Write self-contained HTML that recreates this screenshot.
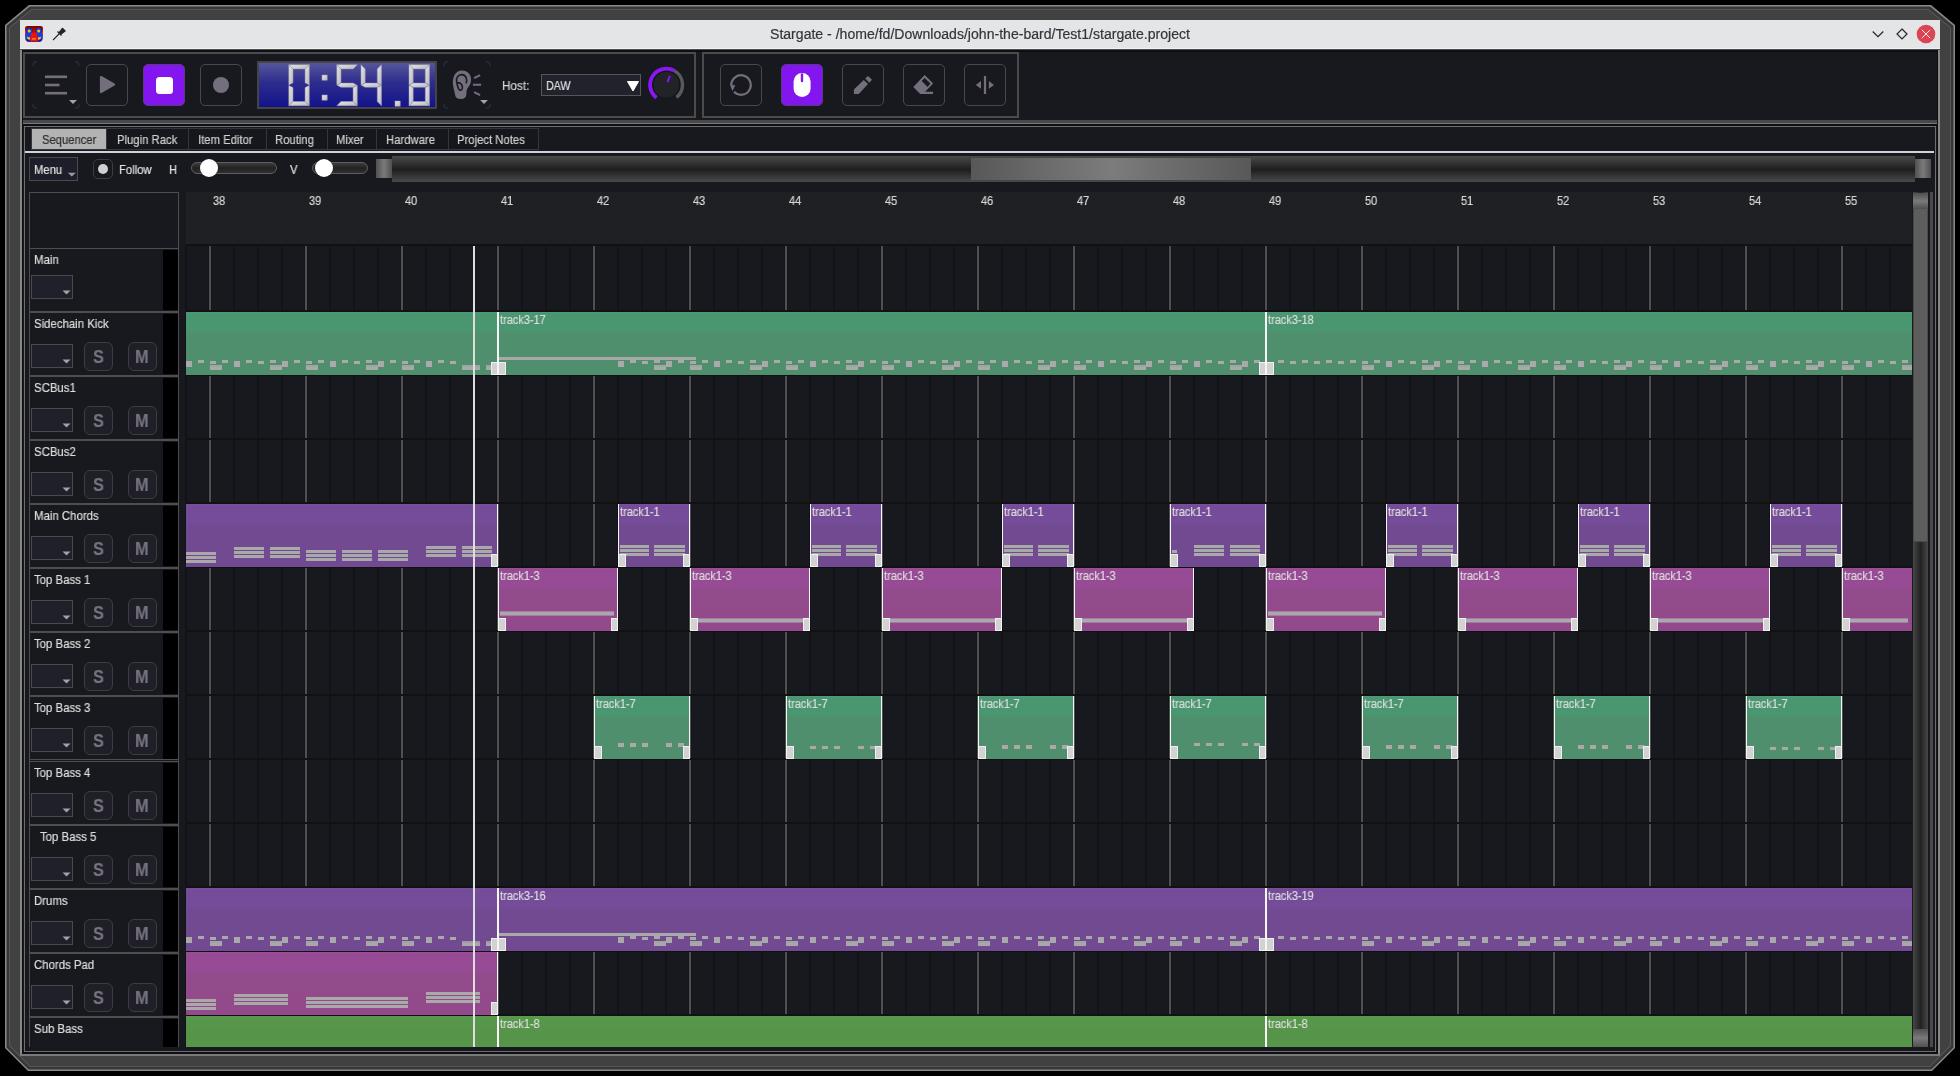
<!DOCTYPE html><html><head><meta charset="utf-8"><style>
*{margin:0;padding:0;box-sizing:border-box}
html,body{width:1960px;height:1076px;overflow:hidden;background:#000}
body{position:relative;font-family:"Liberation Sans",sans-serif}
div,span,svg{position:absolute}
span{white-space:nowrap;line-height:1;display:block;transform-origin:left top;will-change:transform;-webkit-text-stroke:0.2px currentColor}
</style></head><body><svg width="1960" height="1076" style="left:0;top:0"><polygon points="29,5 1931,5 1955,25 1955,1048 1932,1071 28,1071 5,1048 5,25" fill="#8a8a8a"/><polygon points="29.8,6.5 1930.2,6.5 1953.5,25.8 1953.5,1047.5 1931.5,1069.5 28.5,1069.5 6.5,1047.5 6.5,25.8" fill="#383838"/><polygon points="31.5,9 1928.5,9 1951,27.5 1951,1046 1930,1067 30,1067 9,1046 9,27.5" fill="#575757"/><polygon points="32,10 1928,10 1950,28 1950,1045.5 1929.5,1066 30.5,1066 10,1045.5 10,28" fill="#414141"/></svg>
<div style="left:20px;top:20px;width:1920px;height:1036px;background:#7a7a7a"></div>
<div style="left:20px;top:20px;width:2px;height:1034px;background:#888"></div>
<div style="left:1938px;top:20px;width:2px;height:1034px;background:#888"></div>
<div style="left:22px;top:49px;width:1916px;height:1005px;background:#0e0f14"></div>
<div style="left:23px;top:52px;width:1914px;height:999px;background:#18191e"></div>
<div style="left:20px;top:20px;width:1920px;height:29px;background:#e4e5e7"></div>
<div style="left:20px;top:48px;width:1920px;height:1px;background:#f2f2f3"></div>
<div style="left:20px;top:49px;width:1920px;height:1px;background:#4e4e4e"></div>
<svg width="26" height="24" style="left:22px;top:22px" viewBox="0 0 26 24">
<defs><linearGradient id="lg1" x1="0" y1="0" x2="0" y2="1"><stop offset="0" stop-color="#780000"/><stop offset="0.55" stop-color="#f41010"/><stop offset="1" stop-color="#f01010"/></linearGradient></defs>
<path d="M3,6 Q3,4 5.5,4 L18.5,4 Q21,4 21,6 L20.6,16.5 Q20.3,19.8 17,19.8 L7,19.8 Q3.7,19.8 3.4,16.5 Z" fill="url(#lg1)"/>
<circle cx="7.3" cy="8.9" r="3"/><circle cx="16.7" cy="8.9" r="3"/>
<path d="M3.1,11.8 L9.6,10.5 L9,18.6 L4,18.6 Q3.4,17 3.3,15 Z" fill="#1040e8"/>
<path d="M20.9,11.8 L14.4,10.5 L15,18.6 L20,18.6 Q20.6,17 20.7,15 Z" fill="#1040e8"/>
<circle cx="7.3" cy="8.9" r="3" fill="#1040e8"/><circle cx="16.7" cy="8.9" r="3" fill="#1040e8"/>
<path d="M4.2,17.2 L19.8,17.2 Q19.6,19.8 17,19.8 L7,19.8 Q4.4,19.8 4.2,17.2Z" fill="#1a1ca0"/>
<path d="M9.3,11 L14.7,11 L16,19.2 L8,19.2 Z" fill="#f21010"/>
<circle cx="7.2" cy="8.9" r="1.5" fill="#ffc000"/><circle cx="16.7" cy="8.9" r="1.5" fill="#ffc000"/>
<path d="M4.8,14.6 Q6.2,15.5 8,15 L8,17.8 Q5.2,18 4.8,14.6Z" fill="#ffc000"/>
<path d="M19.2,14.6 Q17.8,15.5 16,15 L16,17.8 Q18.8,18 19.2,14.6Z" fill="#ffc000"/>
<rect x="9.8" y="16" width="4.2" height="1.7" fill="#f08000"/>
</svg>
<svg width="14" height="14" style="left:52px;top:27px" viewBox="0 0 14 14">
<path d="M7.5,5.5 L10.5,1.5 L13,4 L9,7 Z" fill="#232629" stroke="#232629" stroke-width="1.5" stroke-linejoin="round"/>
<path d="M5.5,4.5 L9.5,8.5" stroke="#232629" stroke-width="1.3"/>
<path d="M7.5,6.5 L1,13" stroke="#232629" stroke-width="1.1"/>
</svg>
<span style="left:770px;top:27px;font-size:14px;color:#31363b;transform:scaleX(1.005);transform-origin:left top;">Stargate - /home/fd/Downloads/john-the-bard/Test1/stargate.project</span>
<svg width="80" height="24" style="left:1866px;top:22px" viewBox="0 0 80 24">
<path d="M6.7,9.5 L12,14.7 L17.3,9.5" fill="none" stroke="#232629" stroke-width="1.2"/>
<path d="M36,7 L41,12 L36,17 L31,12 Z" fill="none" stroke="#232629" stroke-width="1.2"/>
<circle cx="60" cy="12" r="9.3" fill="#da4453"/>
<path d="M55.8,7.8 L64.2,16.2 M64.2,7.8 L55.8,16.2" stroke="#fcfcfc" stroke-width="0.9"/>
</svg>
<div style="left:23px;top:52px;width:673px;height:66px;background:#18191e;border:2px solid #4b4b4b"></div>
<div style="left:702px;top:52px;width:317px;height:66px;background:#18191e;border:2px solid #4b4b4b"></div>
<svg width="48" height="48" style="left:32px;top:61px" viewBox="0 0 48 48"><path d="M0.8,5 Q0.8,0.8 5,0.8 M43,0.8 Q47.2,0.8 47.2,5 M47.2,43 Q47.2,47.2 43,47.2 M5,47.2 Q0.8,47.2 0.8,43" fill="none" stroke="#2a2b36" stroke-width="1.4"/></svg>
<svg width="48" height="48" style="left:32px;top:61px" viewBox="0 0 48 48">
<rect x="13" y="14.5" width="22" height="2.6" fill="#736f7d"/>
<rect x="13" y="22.7" width="14.5" height="2.6" fill="#736f7d"/>
<rect x="13" y="30.9" width="22" height="2.6" fill="#736f7d"/>
<path d="M37,39 L45,39 L41,43 Z" fill="#a2a2a8"/>
</svg>
<div style="left:86px;top:64px;width:42px;height:42px;background:#18191e;border:1px solid #47474c;border-radius:5px"></div>
<svg width="42" height="42" style="left:86px;top:64px" viewBox="0 0 42 42">
<path d="M15,13 L28,20.5 L15,28 Z" fill="#736f7d" stroke="#736f7d" stroke-width="2.2" stroke-linejoin="round"/>
</svg>
<div style="left:143px;top:64px;width:42px;height:42px;background:#8316ee;border:1px solid #5a3a80;border-radius:5px"></div>
<div style="left:155.5px;top:76.5px;width:17px;height:17px;background:#fff;border-radius:3.5px"></div>
<div style="left:200px;top:64px;width:42px;height:42px;background:#18191e;border:1px solid #47474c;border-radius:5px"></div>
<div style="left:212.6px;top:76.6px;width:16.8px;height:16.8px;background:#736f7d;border-radius:50%"></div>
<div style="left:257px;top:61px;width:180px;height:48px;background:#444"></div>
<div style="left:259px;top:63px;width:176px;height:44px;background:linear-gradient(#56559c,#2d2c8c 45%,#14138c)"></div>
<svg width="180" height="48" style="left:257px;top:61px" viewBox="0 0 180 48"><defs><linearGradient id="sg" x1="0" y1="0" x2="1" y2="1"><stop offset="0" stop-color="#e8e8e8"/><stop offset="1" stop-color="#b8b8b8"/></linearGradient></defs><g fill="url(#sg)" stroke="#9c9cb0" stroke-width="0.5" stroke-linejoin="miter"><polygon points="31.80,3.70 52.30,3.70 48.10,7.90 36.00,7.90"/><polygon points="52.30,3.70 52.30,23.95 48.10,21.85 48.10,7.90"/><polygon points="52.30,24.45 52.30,44.70 48.10,40.50 48.10,26.55"/><polygon points="36.00,40.50 48.10,40.50 52.30,44.70 31.80,44.70"/><polygon points="31.80,24.45 36.00,26.55 36.00,40.50 31.80,44.70"/><polygon points="31.80,3.70 36.00,7.90 36.00,21.85 31.80,23.95"/><rect x="65" y="14" width="5.2" height="5.2"/><rect x="65" y="34" width="5.2" height="5.2"/><polygon points="79.80,3.70 100.30,3.70 96.10,7.90 84.00,7.90"/><polygon points="79.80,3.70 84.00,7.90 84.00,21.85 79.80,23.95"/><polygon points="80.05,24.20 84.00,22.10 96.10,22.10 100.05,24.20 96.10,26.30 84.00,26.30"/><polygon points="100.30,24.45 100.30,44.70 96.10,40.50 96.10,26.55"/><polygon points="84.00,40.50 96.10,40.50 100.30,44.70 79.80,44.70"/><polygon points="104.00,3.70 108.20,7.90 108.20,21.85 104.00,23.95"/><polygon points="104.25,24.20 108.20,22.10 120.30,22.10 124.25,24.20 120.30,26.30 108.20,26.30"/><polygon points="124.50,3.70 124.50,23.95 120.30,21.85 120.30,7.90"/><polygon points="124.50,24.45 124.50,44.70 120.30,40.50 120.30,26.55"/><rect x="138" y="40" width="5.2" height="5.2"/><polygon points="152.00,3.70 172.50,3.70 168.30,7.90 156.20,7.90"/><polygon points="172.50,3.70 172.50,23.95 168.30,21.85 168.30,7.90"/><polygon points="172.50,24.45 172.50,44.70 168.30,40.50 168.30,26.55"/><polygon points="156.20,40.50 168.30,40.50 172.50,44.70 152.00,44.70"/><polygon points="152.00,24.45 156.20,26.55 156.20,40.50 152.00,44.70"/><polygon points="152.00,3.70 156.20,7.90 156.20,21.85 152.00,23.95"/><polygon points="152.25,24.20 156.20,22.10 168.30,22.10 172.25,24.20 168.30,26.30 156.20,26.30"/></g></svg>
<svg width="48" height="48" style="left:443px;top:61px" viewBox="0 0 48 48"><path d="M0.8,5 Q0.8,0.8 5,0.8 M43,0.8 Q47.2,0.8 47.2,5 M47.2,43 Q47.2,47.2 43,47.2 M5,47.2 Q0.8,47.2 0.8,43" fill="none" stroke="#2a2b36" stroke-width="1.4"/></svg>
<svg width="56" height="54" style="left:440px;top:58px" viewBox="0 0 56 54">
<path d="M21.9,12.5 C27.5,12.5 31.3,16.5 31.1,22.1 C31,26 29,28.5 27.1,31.1 C26.3,33 26.5,35 26.3,37.1 C26,40 23.5,41.3 20.6,41.1 C17.5,41 15.3,39.5 15,36.5 C14.6,33 13.2,30 12.9,26 C12.5,18 16,12.5 21.9,12.5 Z" fill="#736f7d"/>
<path d="M26.1,25.6 C27.3,22 26.5,16.8 21.9,16.6 C17.5,16.5 16.2,20.5 16.6,23 C17,26 17.5,30 19.5,32 C21.5,33 22.8,31 22.3,28.5 C21.8,26 19.5,24.5 17.1,24.6" fill="none" stroke="#1a1b20" stroke-width="1.6"/>
<path d="M34.1,20.1 L40.1,17.1 M32.9,26.8 L41.1,26.8 M34.1,34.1 L40.1,37.1" stroke="#736f7d" stroke-width="2.1"/>
<path d="M40.1,42 L47.9,42 L44,45.9 Z" fill="#a2a2a8"/>
</svg>
<span style="left:502px;top:80px;font-size:12.6px;color:#d4d4d4;transform:scaleX(0.93)">Host:</span>
<div style="left:541px;top:74px;width:100px;height:22px;background:#22222c;border:1px solid #55555a"></div>
<span style="left:546px;top:80px;font-size:12.6px;color:#e0e0e0;transform:scaleX(0.85)">DAW</span>
<svg width="14" height="12" style="left:626px;top:80px" viewBox="0 0 14 12"><path d="M1.5,1.5 L12.5,1.5 L7,11 Z" fill="#fff" stroke="#fff" stroke-width="1" stroke-linejoin="round"/></svg>
<svg width="52" height="50" style="left:640px;top:60px" viewBox="0 0 52 50">
<circle cx="26.3" cy="24.8" r="13.6" fill="#222329" stroke="#121318" stroke-width="1"/>
<path d="M34.15,10.63 A16.2,16.2 0 0 1 36.49,37.39" fill="none" stroke="#5a5a5c" stroke-width="3.4"/>
<path d="M16.55,37.74 A16.2,16.2 0 0 1 34.15,10.63" fill="none" stroke="#8a16f5" stroke-width="3.8"/>
<path d="M29.90,15.90 L27.42,22.02" stroke="#8a16f5" stroke-width="2"/>
</svg>
<div style="left:720px;top:64px;width:42px;height:42px;background:#18191e;border:1px solid #47474c;border-radius:5px"></div>
<div style="left:781px;top:64px;width:42px;height:42px;background:#8316ee;border:1px solid #5a3a80;border-radius:5px"></div>
<div style="left:842px;top:64px;width:42px;height:42px;background:#18191e;border:1px solid #47474c;border-radius:5px"></div>
<div style="left:903px;top:64px;width:42px;height:42px;background:#18191e;border:1px solid #47474c;border-radius:5px"></div>
<div style="left:964px;top:64px;width:42px;height:42px;background:#18191e;border:1px solid #47474c;border-radius:5px"></div>
<svg width="42" height="42" style="left:720px;top:64px" viewBox="0 0 42 42">
<path d="M14.0,27.8 A9.75,9.75 0 1 0 11.25,21" fill="none" stroke="#736f7d" stroke-width="2.2"/>
<path d="M10.0,21 L15.3,21.2 L12.5,27 Z" fill="#736f7d"/>
</svg>
<svg width="42" height="42" style="left:781px;top:64px" viewBox="0 0 42 42">
<rect x="12.6" y="9" width="17" height="24" rx="8.5" ry="8.5" fill="#fff"/>
<path d="M21,10.5 L21,17" stroke="#8316ee" stroke-width="2.4" stroke-linecap="round"/>
</svg>
<svg width="42" height="42" style="left:842px;top:64px" viewBox="0 0 42 42">
<path d="M11.9,25.4 L21.7,16 L26,20.1 L16.8,30.05 L11.9,30.05 Z" fill="#736f7d"/>
<path d="M23.2,14.4 L26,11.9 L30,15.8 L27.3,18.7 Z" fill="#736f7d"/>
</svg>
<svg width="42" height="42" style="left:903px;top:64px" viewBox="0 0 42 42">
<path fill-rule="evenodd" d="M21.7,11.1 L30.2,19.6 L22.1,27.7 L30.05,27.7 L30.05,30.05 L17.2,30.05 L10.3,23 Z M21.7,13.9 L27.4,19.6 L24.6,22.9 L18.7,17 Z" fill="#736f7d"/>
</svg>
<svg width="42" height="42" style="left:964px;top:64px" viewBox="0 0 42 42">
<rect x="19.9" y="12" width="2.2" height="18" fill="#736f7d"/>
<path d="M11.8,21 L17,17.1 L17,24.8 Z M30,21 L24.9,17.1 L24.9,24.8 Z" fill="#736f7d"/>
</svg>
<div style="left:23px;top:120px;width:1914px;height:2.8px;background:#484848"></div>
<div style="left:23px;top:123px;width:1914px;height:1px;background:#7a7a7a"></div>
<div style="left:23px;top:124px;width:1914px;height:2px;background:#0e0f14"></div>
<div style="left:24px;top:126px;width:1912px;height:926px;background:#18191e;border:1px solid #6e6e6e"></div>
<div style="left:31px;top:128px;width:508px;height:22px;background:#16171c;border:1px solid #35353b"></div>
<div style="left:31.7px;top:128.7px;width:74.6px;height:20.3px;background:#b3b3b3"></div>
<span style="left:41.5px;top:134.35px;font-size:12.35px;color:#2e2e2e;transform:scaleX(0.91);">Sequencer</span>
<div style="left:106.3px;top:128.7px;width:1px;height:20.3px;background:#35353b"></div>
<span style="left:117.0px;top:134.35px;font-size:12.35px;color:#d2d2d2;transform:scaleX(0.915);">Plugin Rack</span>
<div style="left:188.2px;top:128.7px;width:1px;height:20.3px;background:#35353b"></div>
<span style="left:198.2px;top:134.35px;font-size:12.35px;color:#d2d2d2;transform:scaleX(0.915);">Item Editor</span>
<div style="left:265.7px;top:128.7px;width:1px;height:20.3px;background:#35353b"></div>
<span style="left:275.2px;top:134.35px;font-size:12.35px;color:#d2d2d2;transform:scaleX(0.915);">Routing</span>
<div style="left:326.6px;top:128.7px;width:1px;height:20.3px;background:#35353b"></div>
<span style="left:336.2px;top:134.35px;font-size:12.35px;color:#d2d2d2;transform:scaleX(0.915);">Mixer</span>
<div style="left:376.3px;top:128.7px;width:1px;height:20.3px;background:#35353b"></div>
<span style="left:386.2px;top:134.35px;font-size:12.35px;color:#d2d2d2;transform:scaleX(0.915);">Hardware</span>
<div style="left:447.5px;top:128.7px;width:1px;height:20.3px;background:#35353b"></div>
<span style="left:457.2px;top:134.35px;font-size:12.35px;color:#d2d2d2;transform:scaleX(0.915);">Project Notes</span>
<div style="left:25px;top:151px;width:1909px;height:2px;background:#cdd3d9"></div>
<div style="left:29px;top:157px;width:49px;height:24px;background:#1e1e2a;border:1px solid #4a4a4a"></div>
<span style="left:33.6px;top:164.35px;font-size:12.35px;color:#e0e0e0;transform:scaleX(0.91);">Menu</span>
<svg width="10" height="6" style="left:66.5px;top:171.5px" viewBox="0 0 10 6"><path d="M0.8,0.8 L8.8,0.8 L4.8,4.6 Z" fill="#9a9aa0"/></svg>
<div style="left:93px;top:159px;width:20px;height:20px;border:1px solid #3d3d45;border-radius:5px"></div>
<div style="left:97.5px;top:163.7px;width:10.6px;height:10.6px;background:#d0d0d0;border-radius:50%"></div>
<span style="left:119px;top:164.35px;font-size:12.35px;color:#e0e0e0;transform:scaleX(0.91);">Follow</span>
<span style="left:169px;top:164.35px;font-size:12.35px;color:#e0e0e0;transform:scaleX(0.91);">H</span>
<span style="left:290.3px;top:164.35px;font-size:12.35px;color:#e0e0e0;transform:scaleX(0.91);">V</span>
<div style="left:191px;top:162px;width:86px;height:12px;background:linear-gradient(#3c3c3c,#222 50%,#303030);border:1px solid #5e5e5e;border-radius:6px"></div>
<div style="left:199.9px;top:158.9px;width:18px;height:18px;background:#fff;border-radius:50%"></div>
<div style="left:312px;top:162px;width:56px;height:12px;background:linear-gradient(#3c3c3c,#222 50%,#303030);border:1px solid #5e5e5e;border-radius:6px"></div>
<div style="left:315.1px;top:159px;width:18px;height:18px;background:#fff;border-radius:50%"></div>
<div style="left:391.8px;top:156.2px;width:1523.2px;height:25.4px;background:linear-gradient(#4a4a4a,#1e1e1e 52%,#4a4a4a)"></div>
<div style="left:376.1px;top:159.1px;width:15.7px;height:19.4px;background:linear-gradient(90deg,#505050,#7a7a7a 50%,#505050)"></div>
<div style="left:1915px;top:159.1px;width:16px;height:19.4px;background:linear-gradient(90deg,#505050,#7a7a7a 50%,#505050)"></div>
<div style="left:970.7px;top:157.9px;width:280.6px;height:22.1px;background:linear-gradient(90deg,#585858,#7c7c7c 50%,#585858)"></div>
<div style="left:29px;top:192px;width:150px;height:57px;border:1px solid #4e4e4e"></div>
<div style="left:29px;top:248px;width:1px;height:64px;background:#4e4e4e"></div>
<div style="left:178px;top:248px;width:1px;height:64px;background:#4e4e4e"></div>
<div style="left:163px;top:249.5px;width:14.5px;height:60.5px;background:#000"></div>
<span style="left:34.0px;top:254.37px;font-size:12.2px;color:#dedede;transform:scaleX(0.935);">Main</span>
<div style="left:31.2px;top:275px;width:41.8px;height:24px;background:#20202a;border:1px solid #4a4a4e"></div>
<svg width="10" height="6" style="left:61.5px;top:289.6px" viewBox="0 0 10 6"><path d="M0.5,0.5 L8.5,0.5 L4.5,4.5 Z" fill="#a2a2a8"/></svg>
<div style="left:29px;top:312px;width:1px;height:64px;background:#4e4e4e"></div>
<div style="left:178px;top:312px;width:1px;height:64px;background:#4e4e4e"></div>
<div style="left:163px;top:313.5px;width:14.5px;height:60.5px;background:#000"></div>
<span style="left:34.0px;top:318.37px;font-size:12.2px;color:#dedede;transform:scaleX(0.935);">Sidechain Kick</span>
<div style="left:31.2px;top:344px;width:41.8px;height:24px;background:#20202a;border:1px solid #4a4a4e"></div>
<svg width="10" height="6" style="left:61.5px;top:358.6px" viewBox="0 0 10 6"><path d="M0.5,0.5 L8.5,0.5 L4.5,4.5 Z" fill="#a2a2a8"/></svg>
<div style="left:84.3px;top:342.2px;width:28.6px;height:28.6px;background:#1f1f27;border:1px solid #3c3c44;border-radius:6px"></div>
<span style="left:93.2px;top:349.3px;font-size:17.6px;color:#77727f;transform:scaleX(0.93);font-weight:bold;">S</span>
<div style="left:128.2px;top:342.2px;width:28.6px;height:28.6px;background:#1f1f27;border:1px solid #3c3c44;border-radius:6px"></div>
<span style="left:134.8px;top:349.3px;font-size:17.6px;color:#77727f;transform:scaleX(0.93);font-weight:bold;">M</span>
<div style="left:29px;top:376px;width:1px;height:64px;background:#4e4e4e"></div>
<div style="left:178px;top:376px;width:1px;height:64px;background:#4e4e4e"></div>
<div style="left:163px;top:377.5px;width:14.5px;height:60.5px;background:#000"></div>
<span style="left:34.0px;top:382.37px;font-size:12.2px;color:#dedede;transform:scaleX(0.935);">SCBus1</span>
<div style="left:31.2px;top:408px;width:41.8px;height:24px;background:#20202a;border:1px solid #4a4a4e"></div>
<svg width="10" height="6" style="left:61.5px;top:422.6px" viewBox="0 0 10 6"><path d="M0.5,0.5 L8.5,0.5 L4.5,4.5 Z" fill="#a2a2a8"/></svg>
<div style="left:84.3px;top:406.2px;width:28.6px;height:28.6px;background:#1f1f27;border:1px solid #3c3c44;border-radius:6px"></div>
<span style="left:93.2px;top:413.3px;font-size:17.6px;color:#77727f;transform:scaleX(0.93);font-weight:bold;">S</span>
<div style="left:128.2px;top:406.2px;width:28.6px;height:28.6px;background:#1f1f27;border:1px solid #3c3c44;border-radius:6px"></div>
<span style="left:134.8px;top:413.3px;font-size:17.6px;color:#77727f;transform:scaleX(0.93);font-weight:bold;">M</span>
<div style="left:29px;top:440px;width:1px;height:64px;background:#4e4e4e"></div>
<div style="left:178px;top:440px;width:1px;height:64px;background:#4e4e4e"></div>
<div style="left:163px;top:441.5px;width:14.5px;height:60.5px;background:#000"></div>
<span style="left:34.0px;top:446.37px;font-size:12.2px;color:#dedede;transform:scaleX(0.935);">SCBus2</span>
<div style="left:31.2px;top:472px;width:41.8px;height:24px;background:#20202a;border:1px solid #4a4a4e"></div>
<svg width="10" height="6" style="left:61.5px;top:486.6px" viewBox="0 0 10 6"><path d="M0.5,0.5 L8.5,0.5 L4.5,4.5 Z" fill="#a2a2a8"/></svg>
<div style="left:84.3px;top:470.2px;width:28.6px;height:28.6px;background:#1f1f27;border:1px solid #3c3c44;border-radius:6px"></div>
<span style="left:93.2px;top:477.3px;font-size:17.6px;color:#77727f;transform:scaleX(0.93);font-weight:bold;">S</span>
<div style="left:128.2px;top:470.2px;width:28.6px;height:28.6px;background:#1f1f27;border:1px solid #3c3c44;border-radius:6px"></div>
<span style="left:134.8px;top:477.3px;font-size:17.6px;color:#77727f;transform:scaleX(0.93);font-weight:bold;">M</span>
<div style="left:29px;top:504px;width:1px;height:64px;background:#4e4e4e"></div>
<div style="left:178px;top:504px;width:1px;height:64px;background:#4e4e4e"></div>
<div style="left:163px;top:505.5px;width:14.5px;height:60.5px;background:#000"></div>
<span style="left:34.0px;top:510.37px;font-size:12.2px;color:#dedede;transform:scaleX(0.935);">Main Chords</span>
<div style="left:31.2px;top:536px;width:41.8px;height:24px;background:#20202a;border:1px solid #4a4a4e"></div>
<svg width="10" height="6" style="left:61.5px;top:550.6px" viewBox="0 0 10 6"><path d="M0.5,0.5 L8.5,0.5 L4.5,4.5 Z" fill="#a2a2a8"/></svg>
<div style="left:84.3px;top:534.2px;width:28.6px;height:28.6px;background:#1f1f27;border:1px solid #3c3c44;border-radius:6px"></div>
<span style="left:93.2px;top:541.3px;font-size:17.6px;color:#77727f;transform:scaleX(0.93);font-weight:bold;">S</span>
<div style="left:128.2px;top:534.2px;width:28.6px;height:28.6px;background:#1f1f27;border:1px solid #3c3c44;border-radius:6px"></div>
<span style="left:134.8px;top:541.3px;font-size:17.6px;color:#77727f;transform:scaleX(0.93);font-weight:bold;">M</span>
<div style="left:29px;top:568px;width:1px;height:64px;background:#4e4e4e"></div>
<div style="left:178px;top:568px;width:1px;height:64px;background:#4e4e4e"></div>
<div style="left:163px;top:569.5px;width:14.5px;height:60.5px;background:#000"></div>
<span style="left:34.0px;top:574.37px;font-size:12.2px;color:#dedede;transform:scaleX(0.935);">Top Bass 1</span>
<div style="left:31.2px;top:600px;width:41.8px;height:24px;background:#20202a;border:1px solid #4a4a4e"></div>
<svg width="10" height="6" style="left:61.5px;top:614.6px" viewBox="0 0 10 6"><path d="M0.5,0.5 L8.5,0.5 L4.5,4.5 Z" fill="#a2a2a8"/></svg>
<div style="left:84.3px;top:598.2px;width:28.6px;height:28.6px;background:#1f1f27;border:1px solid #3c3c44;border-radius:6px"></div>
<span style="left:93.2px;top:605.3px;font-size:17.6px;color:#77727f;transform:scaleX(0.93);font-weight:bold;">S</span>
<div style="left:128.2px;top:598.2px;width:28.6px;height:28.6px;background:#1f1f27;border:1px solid #3c3c44;border-radius:6px"></div>
<span style="left:134.8px;top:605.3px;font-size:17.6px;color:#77727f;transform:scaleX(0.93);font-weight:bold;">M</span>
<div style="left:29px;top:632px;width:1px;height:64px;background:#4e4e4e"></div>
<div style="left:178px;top:632px;width:1px;height:64px;background:#4e4e4e"></div>
<div style="left:163px;top:633.5px;width:14.5px;height:60.5px;background:#000"></div>
<span style="left:34.0px;top:638.37px;font-size:12.2px;color:#dedede;transform:scaleX(0.935);">Top Bass 2</span>
<div style="left:31.2px;top:664px;width:41.8px;height:24px;background:#20202a;border:1px solid #4a4a4e"></div>
<svg width="10" height="6" style="left:61.5px;top:678.6px" viewBox="0 0 10 6"><path d="M0.5,0.5 L8.5,0.5 L4.5,4.5 Z" fill="#a2a2a8"/></svg>
<div style="left:84.3px;top:662.2px;width:28.6px;height:28.6px;background:#1f1f27;border:1px solid #3c3c44;border-radius:6px"></div>
<span style="left:93.2px;top:669.3px;font-size:17.6px;color:#77727f;transform:scaleX(0.93);font-weight:bold;">S</span>
<div style="left:128.2px;top:662.2px;width:28.6px;height:28.6px;background:#1f1f27;border:1px solid #3c3c44;border-radius:6px"></div>
<span style="left:134.8px;top:669.3px;font-size:17.6px;color:#77727f;transform:scaleX(0.93);font-weight:bold;">M</span>
<div style="left:29px;top:696px;width:1px;height:65px;background:#4e4e4e"></div>
<div style="left:178px;top:696px;width:1px;height:65px;background:#4e4e4e"></div>
<div style="left:163px;top:697.5px;width:14.5px;height:61.5px;background:#000"></div>
<span style="left:34.0px;top:702.37px;font-size:12.2px;color:#dedede;transform:scaleX(0.935);">Top Bass 3</span>
<div style="left:31.2px;top:728px;width:41.8px;height:24px;background:#20202a;border:1px solid #4a4a4e"></div>
<svg width="10" height="6" style="left:61.5px;top:742.6px" viewBox="0 0 10 6"><path d="M0.5,0.5 L8.5,0.5 L4.5,4.5 Z" fill="#a2a2a8"/></svg>
<div style="left:84.3px;top:726.2px;width:28.6px;height:28.6px;background:#1f1f27;border:1px solid #3c3c44;border-radius:6px"></div>
<span style="left:93.2px;top:733.3px;font-size:17.6px;color:#77727f;transform:scaleX(0.93);font-weight:bold;">S</span>
<div style="left:128.2px;top:726.2px;width:28.6px;height:28.6px;background:#1f1f27;border:1px solid #3c3c44;border-radius:6px"></div>
<span style="left:134.8px;top:733.3px;font-size:17.6px;color:#77727f;transform:scaleX(0.93);font-weight:bold;">M</span>
<div style="left:29px;top:761px;width:1px;height:64px;background:#4e4e4e"></div>
<div style="left:178px;top:761px;width:1px;height:64px;background:#4e4e4e"></div>
<div style="left:163px;top:762.5px;width:14.5px;height:60.5px;background:#000"></div>
<span style="left:34.0px;top:767.37px;font-size:12.2px;color:#dedede;transform:scaleX(0.935);">Top Bass 4</span>
<div style="left:31.2px;top:793px;width:41.8px;height:24px;background:#20202a;border:1px solid #4a4a4e"></div>
<svg width="10" height="6" style="left:61.5px;top:807.6px" viewBox="0 0 10 6"><path d="M0.5,0.5 L8.5,0.5 L4.5,4.5 Z" fill="#a2a2a8"/></svg>
<div style="left:84.3px;top:791.2px;width:28.6px;height:28.6px;background:#1f1f27;border:1px solid #3c3c44;border-radius:6px"></div>
<span style="left:93.2px;top:798.3px;font-size:17.6px;color:#77727f;transform:scaleX(0.93);font-weight:bold;">S</span>
<div style="left:128.2px;top:791.2px;width:28.6px;height:28.6px;background:#1f1f27;border:1px solid #3c3c44;border-radius:6px"></div>
<span style="left:134.8px;top:798.3px;font-size:17.6px;color:#77727f;transform:scaleX(0.93);font-weight:bold;">M</span>
<div style="left:29px;top:825px;width:1px;height:64px;background:#4e4e4e"></div>
<div style="left:178px;top:825px;width:1px;height:64px;background:#4e4e4e"></div>
<div style="left:163px;top:826.5px;width:14.5px;height:60.5px;background:#000"></div>
<span style="left:40.2px;top:831.37px;font-size:12.2px;color:#dedede;transform:scaleX(0.935);">Top Bass 5</span>
<div style="left:31.2px;top:857px;width:41.8px;height:24px;background:#20202a;border:1px solid #4a4a4e"></div>
<svg width="10" height="6" style="left:61.5px;top:871.6px" viewBox="0 0 10 6"><path d="M0.5,0.5 L8.5,0.5 L4.5,4.5 Z" fill="#a2a2a8"/></svg>
<div style="left:84.3px;top:855.2px;width:28.6px;height:28.6px;background:#1f1f27;border:1px solid #3c3c44;border-radius:6px"></div>
<span style="left:93.2px;top:862.3px;font-size:17.6px;color:#77727f;transform:scaleX(0.93);font-weight:bold;">S</span>
<div style="left:128.2px;top:855.2px;width:28.6px;height:28.6px;background:#1f1f27;border:1px solid #3c3c44;border-radius:6px"></div>
<span style="left:134.8px;top:862.3px;font-size:17.6px;color:#77727f;transform:scaleX(0.93);font-weight:bold;">M</span>
<div style="left:29px;top:889px;width:1px;height:64px;background:#4e4e4e"></div>
<div style="left:178px;top:889px;width:1px;height:64px;background:#4e4e4e"></div>
<div style="left:163px;top:890.5px;width:14.5px;height:60.5px;background:#000"></div>
<span style="left:34.0px;top:895.37px;font-size:12.2px;color:#dedede;transform:scaleX(0.935);">Drums</span>
<div style="left:31.2px;top:921px;width:41.8px;height:24px;background:#20202a;border:1px solid #4a4a4e"></div>
<svg width="10" height="6" style="left:61.5px;top:935.6px" viewBox="0 0 10 6"><path d="M0.5,0.5 L8.5,0.5 L4.5,4.5 Z" fill="#a2a2a8"/></svg>
<div style="left:84.3px;top:919.2px;width:28.6px;height:28.6px;background:#1f1f27;border:1px solid #3c3c44;border-radius:6px"></div>
<span style="left:93.2px;top:926.3px;font-size:17.6px;color:#77727f;transform:scaleX(0.93);font-weight:bold;">S</span>
<div style="left:128.2px;top:919.2px;width:28.6px;height:28.6px;background:#1f1f27;border:1px solid #3c3c44;border-radius:6px"></div>
<span style="left:134.8px;top:926.3px;font-size:17.6px;color:#77727f;transform:scaleX(0.93);font-weight:bold;">M</span>
<div style="left:29px;top:953px;width:1px;height:64px;background:#4e4e4e"></div>
<div style="left:178px;top:953px;width:1px;height:64px;background:#4e4e4e"></div>
<div style="left:163px;top:954.5px;width:14.5px;height:60.5px;background:#000"></div>
<span style="left:34.0px;top:959.37px;font-size:12.2px;color:#dedede;transform:scaleX(0.935);">Chords Pad</span>
<div style="left:31.2px;top:985px;width:41.8px;height:24px;background:#20202a;border:1px solid #4a4a4e"></div>
<svg width="10" height="6" style="left:61.5px;top:999.6px" viewBox="0 0 10 6"><path d="M0.5,0.5 L8.5,0.5 L4.5,4.5 Z" fill="#a2a2a8"/></svg>
<div style="left:84.3px;top:983.2px;width:28.6px;height:28.6px;background:#1f1f27;border:1px solid #3c3c44;border-radius:6px"></div>
<span style="left:93.2px;top:990.3px;font-size:17.6px;color:#77727f;transform:scaleX(0.93);font-weight:bold;">S</span>
<div style="left:128.2px;top:983.2px;width:28.6px;height:28.6px;background:#1f1f27;border:1px solid #3c3c44;border-radius:6px"></div>
<span style="left:134.8px;top:990.3px;font-size:17.6px;color:#77727f;transform:scaleX(0.93);font-weight:bold;">M</span>
<div style="left:29px;top:1017px;width:1px;height:30px;background:#4e4e4e"></div>
<div style="left:178px;top:1017px;width:1px;height:30px;background:#4e4e4e"></div>
<div style="left:163px;top:1018.5px;width:14.5px;height:28.5px;background:#000"></div>
<span style="left:34.0px;top:1023.37px;font-size:12.2px;color:#dedede;transform:scaleX(0.935);">Sub Bass</span>
<div style="left:29px;top:311px;width:150px;height:2px;background:#4e4e4e"></div>
<div style="left:29px;top:375px;width:150px;height:2px;background:#4e4e4e"></div>
<div style="left:29px;top:439px;width:150px;height:2px;background:#4e4e4e"></div>
<div style="left:29px;top:503px;width:150px;height:2px;background:#4e4e4e"></div>
<div style="left:29px;top:567px;width:150px;height:2px;background:#4e4e4e"></div>
<div style="left:29px;top:631px;width:150px;height:2px;background:#4e4e4e"></div>
<div style="left:29px;top:695px;width:150px;height:2px;background:#4e4e4e"></div>
<div style="left:29px;top:760px;width:150px;height:2px;background:#4e4e4e"></div>
<div style="left:29px;top:824px;width:150px;height:2px;background:#4e4e4e"></div>
<div style="left:29px;top:888px;width:150px;height:2px;background:#4e4e4e"></div>
<div style="left:29px;top:952px;width:150px;height:2px;background:#4e4e4e"></div>
<div style="left:29px;top:1016px;width:150px;height:2px;background:#4e4e4e"></div>
<div style="left:29px;top:758.5px;width:150px;height:1.2px;background:#4e4e4e"></div>
<div style="left:30px;top:759.7px;width:148px;height:1.3px;background:#18191e"></div>
<div style="left:186px;top:192.4px;width:1726px;height:52px;background:#1f2024"></div>
<span style="left:213px;top:195.07px;font-size:12.2px;color:#d8d8d8;transform:scaleX(0.9);">38</span>
<span style="left:309px;top:195.07px;font-size:12.2px;color:#d8d8d8;transform:scaleX(0.9);">39</span>
<span style="left:405px;top:195.07px;font-size:12.2px;color:#d8d8d8;transform:scaleX(0.9);">40</span>
<span style="left:501px;top:195.07px;font-size:12.2px;color:#d8d8d8;transform:scaleX(0.9);">41</span>
<span style="left:597px;top:195.07px;font-size:12.2px;color:#d8d8d8;transform:scaleX(0.9);">42</span>
<span style="left:693px;top:195.07px;font-size:12.2px;color:#d8d8d8;transform:scaleX(0.9);">43</span>
<span style="left:789px;top:195.07px;font-size:12.2px;color:#d8d8d8;transform:scaleX(0.9);">44</span>
<span style="left:885px;top:195.07px;font-size:12.2px;color:#d8d8d8;transform:scaleX(0.9);">45</span>
<span style="left:981px;top:195.07px;font-size:12.2px;color:#d8d8d8;transform:scaleX(0.9);">46</span>
<span style="left:1077px;top:195.07px;font-size:12.2px;color:#d8d8d8;transform:scaleX(0.9);">47</span>
<span style="left:1173px;top:195.07px;font-size:12.2px;color:#d8d8d8;transform:scaleX(0.9);">48</span>
<span style="left:1269px;top:195.07px;font-size:12.2px;color:#d8d8d8;transform:scaleX(0.9);">49</span>
<span style="left:1365px;top:195.07px;font-size:12.2px;color:#d8d8d8;transform:scaleX(0.9);">50</span>
<span style="left:1461px;top:195.07px;font-size:12.2px;color:#d8d8d8;transform:scaleX(0.9);">51</span>
<span style="left:1557px;top:195.07px;font-size:12.2px;color:#d8d8d8;transform:scaleX(0.9);">52</span>
<span style="left:1653px;top:195.07px;font-size:12.2px;color:#d8d8d8;transform:scaleX(0.9);">53</span>
<span style="left:1749px;top:195.07px;font-size:12.2px;color:#d8d8d8;transform:scaleX(0.9);">54</span>
<span style="left:1845px;top:195.07px;font-size:12.2px;color:#d8d8d8;transform:scaleX(0.9);">55</span>
<div style="left:186px;top:244px;width:1726px;height:803px;background:#111114"></div>
<div style="left:186px;top:246px;width:1726px;height:63.80000000000001px;background:#18191e"></div>
<div style="left:0;top:246px;width:1960px;height:63.80px"><div style="left:185.4px;top:0;width:1.3px;height:100%;background:#121317"></div><div style="left:208px;top:0;width:4px;height:100%;background:#141519"></div><div style="left:209px;top:0;width:2px;height:100%;background:#505052"></div><div style="left:233.4px;top:0;width:1.3px;height:100%;background:#121317"></div><div style="left:257.4px;top:0;width:1.3px;height:100%;background:#121317"></div><div style="left:281.4px;top:0;width:1.3px;height:100%;background:#121317"></div><div style="left:304px;top:0;width:4px;height:100%;background:#141519"></div><div style="left:305px;top:0;width:2px;height:100%;background:#505052"></div><div style="left:329.4px;top:0;width:1.3px;height:100%;background:#121317"></div><div style="left:353.4px;top:0;width:1.3px;height:100%;background:#121317"></div><div style="left:377.4px;top:0;width:1.3px;height:100%;background:#121317"></div><div style="left:400px;top:0;width:4px;height:100%;background:#141519"></div><div style="left:401px;top:0;width:2px;height:100%;background:#505052"></div><div style="left:425.4px;top:0;width:1.3px;height:100%;background:#121317"></div><div style="left:449.4px;top:0;width:1.3px;height:100%;background:#121317"></div><div style="left:473.4px;top:0;width:1.3px;height:100%;background:#121317"></div><div style="left:496px;top:0;width:4px;height:100%;background:#141519"></div><div style="left:497px;top:0;width:2px;height:100%;background:#505052"></div><div style="left:521.4px;top:0;width:1.3px;height:100%;background:#121317"></div><div style="left:545.4px;top:0;width:1.3px;height:100%;background:#121317"></div><div style="left:569.4px;top:0;width:1.3px;height:100%;background:#121317"></div><div style="left:592px;top:0;width:4px;height:100%;background:#141519"></div><div style="left:593px;top:0;width:2px;height:100%;background:#505052"></div><div style="left:617.4px;top:0;width:1.3px;height:100%;background:#121317"></div><div style="left:641.4px;top:0;width:1.3px;height:100%;background:#121317"></div><div style="left:665.4px;top:0;width:1.3px;height:100%;background:#121317"></div><div style="left:688px;top:0;width:4px;height:100%;background:#141519"></div><div style="left:689px;top:0;width:2px;height:100%;background:#505052"></div><div style="left:713.4px;top:0;width:1.3px;height:100%;background:#121317"></div><div style="left:737.4px;top:0;width:1.3px;height:100%;background:#121317"></div><div style="left:761.4px;top:0;width:1.3px;height:100%;background:#121317"></div><div style="left:784px;top:0;width:4px;height:100%;background:#141519"></div><div style="left:785px;top:0;width:2px;height:100%;background:#505052"></div><div style="left:809.4px;top:0;width:1.3px;height:100%;background:#121317"></div><div style="left:833.4px;top:0;width:1.3px;height:100%;background:#121317"></div><div style="left:857.4px;top:0;width:1.3px;height:100%;background:#121317"></div><div style="left:880px;top:0;width:4px;height:100%;background:#141519"></div><div style="left:881px;top:0;width:2px;height:100%;background:#505052"></div><div style="left:905.4px;top:0;width:1.3px;height:100%;background:#121317"></div><div style="left:929.4px;top:0;width:1.3px;height:100%;background:#121317"></div><div style="left:953.4px;top:0;width:1.3px;height:100%;background:#121317"></div><div style="left:976px;top:0;width:4px;height:100%;background:#141519"></div><div style="left:977px;top:0;width:2px;height:100%;background:#505052"></div><div style="left:1001.4px;top:0;width:1.3px;height:100%;background:#121317"></div><div style="left:1025.4px;top:0;width:1.3px;height:100%;background:#121317"></div><div style="left:1049.4px;top:0;width:1.3px;height:100%;background:#121317"></div><div style="left:1072px;top:0;width:4px;height:100%;background:#141519"></div><div style="left:1073px;top:0;width:2px;height:100%;background:#505052"></div><div style="left:1097.4px;top:0;width:1.3px;height:100%;background:#121317"></div><div style="left:1121.4px;top:0;width:1.3px;height:100%;background:#121317"></div><div style="left:1145.4px;top:0;width:1.3px;height:100%;background:#121317"></div><div style="left:1168px;top:0;width:4px;height:100%;background:#141519"></div><div style="left:1169px;top:0;width:2px;height:100%;background:#505052"></div><div style="left:1193.4px;top:0;width:1.3px;height:100%;background:#121317"></div><div style="left:1217.4px;top:0;width:1.3px;height:100%;background:#121317"></div><div style="left:1241.4px;top:0;width:1.3px;height:100%;background:#121317"></div><div style="left:1264px;top:0;width:4px;height:100%;background:#141519"></div><div style="left:1265px;top:0;width:2px;height:100%;background:#505052"></div><div style="left:1289.4px;top:0;width:1.3px;height:100%;background:#121317"></div><div style="left:1313.4px;top:0;width:1.3px;height:100%;background:#121317"></div><div style="left:1337.4px;top:0;width:1.3px;height:100%;background:#121317"></div><div style="left:1360px;top:0;width:4px;height:100%;background:#141519"></div><div style="left:1361px;top:0;width:2px;height:100%;background:#505052"></div><div style="left:1385.4px;top:0;width:1.3px;height:100%;background:#121317"></div><div style="left:1409.4px;top:0;width:1.3px;height:100%;background:#121317"></div><div style="left:1433.4px;top:0;width:1.3px;height:100%;background:#121317"></div><div style="left:1456px;top:0;width:4px;height:100%;background:#141519"></div><div style="left:1457px;top:0;width:2px;height:100%;background:#505052"></div><div style="left:1481.4px;top:0;width:1.3px;height:100%;background:#121317"></div><div style="left:1505.4px;top:0;width:1.3px;height:100%;background:#121317"></div><div style="left:1529.4px;top:0;width:1.3px;height:100%;background:#121317"></div><div style="left:1552px;top:0;width:4px;height:100%;background:#141519"></div><div style="left:1553px;top:0;width:2px;height:100%;background:#505052"></div><div style="left:1577.4px;top:0;width:1.3px;height:100%;background:#121317"></div><div style="left:1601.4px;top:0;width:1.3px;height:100%;background:#121317"></div><div style="left:1625.4px;top:0;width:1.3px;height:100%;background:#121317"></div><div style="left:1648px;top:0;width:4px;height:100%;background:#141519"></div><div style="left:1649px;top:0;width:2px;height:100%;background:#505052"></div><div style="left:1673.4px;top:0;width:1.3px;height:100%;background:#121317"></div><div style="left:1697.4px;top:0;width:1.3px;height:100%;background:#121317"></div><div style="left:1721.4px;top:0;width:1.3px;height:100%;background:#121317"></div><div style="left:1744px;top:0;width:4px;height:100%;background:#141519"></div><div style="left:1745px;top:0;width:2px;height:100%;background:#505052"></div><div style="left:1769.4px;top:0;width:1.3px;height:100%;background:#121317"></div><div style="left:1793.4px;top:0;width:1.3px;height:100%;background:#121317"></div><div style="left:1817.4px;top:0;width:1.3px;height:100%;background:#121317"></div><div style="left:1840px;top:0;width:4px;height:100%;background:#141519"></div><div style="left:1841px;top:0;width:2px;height:100%;background:#505052"></div><div style="left:1865.4px;top:0;width:1.3px;height:100%;background:#121317"></div><div style="left:1889.4px;top:0;width:1.3px;height:100%;background:#121317"></div></div>
<div style="left:186px;top:311.8px;width:1726px;height:62.099999999999966px;background:#18191e"></div>
<div style="left:0;top:311.8px;width:1960px;height:62.10px"><div style="left:185.4px;top:0;width:1.3px;height:100%;background:#121317"></div><div style="left:208px;top:0;width:4px;height:100%;background:#141519"></div><div style="left:209px;top:0;width:2px;height:100%;background:#505052"></div><div style="left:233.4px;top:0;width:1.3px;height:100%;background:#121317"></div><div style="left:257.4px;top:0;width:1.3px;height:100%;background:#121317"></div><div style="left:281.4px;top:0;width:1.3px;height:100%;background:#121317"></div><div style="left:304px;top:0;width:4px;height:100%;background:#141519"></div><div style="left:305px;top:0;width:2px;height:100%;background:#505052"></div><div style="left:329.4px;top:0;width:1.3px;height:100%;background:#121317"></div><div style="left:353.4px;top:0;width:1.3px;height:100%;background:#121317"></div><div style="left:377.4px;top:0;width:1.3px;height:100%;background:#121317"></div><div style="left:400px;top:0;width:4px;height:100%;background:#141519"></div><div style="left:401px;top:0;width:2px;height:100%;background:#505052"></div><div style="left:425.4px;top:0;width:1.3px;height:100%;background:#121317"></div><div style="left:449.4px;top:0;width:1.3px;height:100%;background:#121317"></div><div style="left:473.4px;top:0;width:1.3px;height:100%;background:#121317"></div><div style="left:496px;top:0;width:4px;height:100%;background:#141519"></div><div style="left:497px;top:0;width:2px;height:100%;background:#505052"></div><div style="left:521.4px;top:0;width:1.3px;height:100%;background:#121317"></div><div style="left:545.4px;top:0;width:1.3px;height:100%;background:#121317"></div><div style="left:569.4px;top:0;width:1.3px;height:100%;background:#121317"></div><div style="left:592px;top:0;width:4px;height:100%;background:#141519"></div><div style="left:593px;top:0;width:2px;height:100%;background:#505052"></div><div style="left:617.4px;top:0;width:1.3px;height:100%;background:#121317"></div><div style="left:641.4px;top:0;width:1.3px;height:100%;background:#121317"></div><div style="left:665.4px;top:0;width:1.3px;height:100%;background:#121317"></div><div style="left:688px;top:0;width:4px;height:100%;background:#141519"></div><div style="left:689px;top:0;width:2px;height:100%;background:#505052"></div><div style="left:713.4px;top:0;width:1.3px;height:100%;background:#121317"></div><div style="left:737.4px;top:0;width:1.3px;height:100%;background:#121317"></div><div style="left:761.4px;top:0;width:1.3px;height:100%;background:#121317"></div><div style="left:784px;top:0;width:4px;height:100%;background:#141519"></div><div style="left:785px;top:0;width:2px;height:100%;background:#505052"></div><div style="left:809.4px;top:0;width:1.3px;height:100%;background:#121317"></div><div style="left:833.4px;top:0;width:1.3px;height:100%;background:#121317"></div><div style="left:857.4px;top:0;width:1.3px;height:100%;background:#121317"></div><div style="left:880px;top:0;width:4px;height:100%;background:#141519"></div><div style="left:881px;top:0;width:2px;height:100%;background:#505052"></div><div style="left:905.4px;top:0;width:1.3px;height:100%;background:#121317"></div><div style="left:929.4px;top:0;width:1.3px;height:100%;background:#121317"></div><div style="left:953.4px;top:0;width:1.3px;height:100%;background:#121317"></div><div style="left:976px;top:0;width:4px;height:100%;background:#141519"></div><div style="left:977px;top:0;width:2px;height:100%;background:#505052"></div><div style="left:1001.4px;top:0;width:1.3px;height:100%;background:#121317"></div><div style="left:1025.4px;top:0;width:1.3px;height:100%;background:#121317"></div><div style="left:1049.4px;top:0;width:1.3px;height:100%;background:#121317"></div><div style="left:1072px;top:0;width:4px;height:100%;background:#141519"></div><div style="left:1073px;top:0;width:2px;height:100%;background:#505052"></div><div style="left:1097.4px;top:0;width:1.3px;height:100%;background:#121317"></div><div style="left:1121.4px;top:0;width:1.3px;height:100%;background:#121317"></div><div style="left:1145.4px;top:0;width:1.3px;height:100%;background:#121317"></div><div style="left:1168px;top:0;width:4px;height:100%;background:#141519"></div><div style="left:1169px;top:0;width:2px;height:100%;background:#505052"></div><div style="left:1193.4px;top:0;width:1.3px;height:100%;background:#121317"></div><div style="left:1217.4px;top:0;width:1.3px;height:100%;background:#121317"></div><div style="left:1241.4px;top:0;width:1.3px;height:100%;background:#121317"></div><div style="left:1264px;top:0;width:4px;height:100%;background:#141519"></div><div style="left:1265px;top:0;width:2px;height:100%;background:#505052"></div><div style="left:1289.4px;top:0;width:1.3px;height:100%;background:#121317"></div><div style="left:1313.4px;top:0;width:1.3px;height:100%;background:#121317"></div><div style="left:1337.4px;top:0;width:1.3px;height:100%;background:#121317"></div><div style="left:1360px;top:0;width:4px;height:100%;background:#141519"></div><div style="left:1361px;top:0;width:2px;height:100%;background:#505052"></div><div style="left:1385.4px;top:0;width:1.3px;height:100%;background:#121317"></div><div style="left:1409.4px;top:0;width:1.3px;height:100%;background:#121317"></div><div style="left:1433.4px;top:0;width:1.3px;height:100%;background:#121317"></div><div style="left:1456px;top:0;width:4px;height:100%;background:#141519"></div><div style="left:1457px;top:0;width:2px;height:100%;background:#505052"></div><div style="left:1481.4px;top:0;width:1.3px;height:100%;background:#121317"></div><div style="left:1505.4px;top:0;width:1.3px;height:100%;background:#121317"></div><div style="left:1529.4px;top:0;width:1.3px;height:100%;background:#121317"></div><div style="left:1552px;top:0;width:4px;height:100%;background:#141519"></div><div style="left:1553px;top:0;width:2px;height:100%;background:#505052"></div><div style="left:1577.4px;top:0;width:1.3px;height:100%;background:#121317"></div><div style="left:1601.4px;top:0;width:1.3px;height:100%;background:#121317"></div><div style="left:1625.4px;top:0;width:1.3px;height:100%;background:#121317"></div><div style="left:1648px;top:0;width:4px;height:100%;background:#141519"></div><div style="left:1649px;top:0;width:2px;height:100%;background:#505052"></div><div style="left:1673.4px;top:0;width:1.3px;height:100%;background:#121317"></div><div style="left:1697.4px;top:0;width:1.3px;height:100%;background:#121317"></div><div style="left:1721.4px;top:0;width:1.3px;height:100%;background:#121317"></div><div style="left:1744px;top:0;width:4px;height:100%;background:#141519"></div><div style="left:1745px;top:0;width:2px;height:100%;background:#505052"></div><div style="left:1769.4px;top:0;width:1.3px;height:100%;background:#121317"></div><div style="left:1793.4px;top:0;width:1.3px;height:100%;background:#121317"></div><div style="left:1817.4px;top:0;width:1.3px;height:100%;background:#121317"></div><div style="left:1840px;top:0;width:4px;height:100%;background:#141519"></div><div style="left:1841px;top:0;width:2px;height:100%;background:#505052"></div><div style="left:1865.4px;top:0;width:1.3px;height:100%;background:#121317"></div><div style="left:1889.4px;top:0;width:1.3px;height:100%;background:#121317"></div></div>
<div style="left:186px;top:375.8px;width:1726px;height:62.099999999999966px;background:#18191e"></div>
<div style="left:0;top:375.8px;width:1960px;height:62.10px"><div style="left:185.4px;top:0;width:1.3px;height:100%;background:#121317"></div><div style="left:208px;top:0;width:4px;height:100%;background:#141519"></div><div style="left:209px;top:0;width:2px;height:100%;background:#505052"></div><div style="left:233.4px;top:0;width:1.3px;height:100%;background:#121317"></div><div style="left:257.4px;top:0;width:1.3px;height:100%;background:#121317"></div><div style="left:281.4px;top:0;width:1.3px;height:100%;background:#121317"></div><div style="left:304px;top:0;width:4px;height:100%;background:#141519"></div><div style="left:305px;top:0;width:2px;height:100%;background:#505052"></div><div style="left:329.4px;top:0;width:1.3px;height:100%;background:#121317"></div><div style="left:353.4px;top:0;width:1.3px;height:100%;background:#121317"></div><div style="left:377.4px;top:0;width:1.3px;height:100%;background:#121317"></div><div style="left:400px;top:0;width:4px;height:100%;background:#141519"></div><div style="left:401px;top:0;width:2px;height:100%;background:#505052"></div><div style="left:425.4px;top:0;width:1.3px;height:100%;background:#121317"></div><div style="left:449.4px;top:0;width:1.3px;height:100%;background:#121317"></div><div style="left:473.4px;top:0;width:1.3px;height:100%;background:#121317"></div><div style="left:496px;top:0;width:4px;height:100%;background:#141519"></div><div style="left:497px;top:0;width:2px;height:100%;background:#505052"></div><div style="left:521.4px;top:0;width:1.3px;height:100%;background:#121317"></div><div style="left:545.4px;top:0;width:1.3px;height:100%;background:#121317"></div><div style="left:569.4px;top:0;width:1.3px;height:100%;background:#121317"></div><div style="left:592px;top:0;width:4px;height:100%;background:#141519"></div><div style="left:593px;top:0;width:2px;height:100%;background:#505052"></div><div style="left:617.4px;top:0;width:1.3px;height:100%;background:#121317"></div><div style="left:641.4px;top:0;width:1.3px;height:100%;background:#121317"></div><div style="left:665.4px;top:0;width:1.3px;height:100%;background:#121317"></div><div style="left:688px;top:0;width:4px;height:100%;background:#141519"></div><div style="left:689px;top:0;width:2px;height:100%;background:#505052"></div><div style="left:713.4px;top:0;width:1.3px;height:100%;background:#121317"></div><div style="left:737.4px;top:0;width:1.3px;height:100%;background:#121317"></div><div style="left:761.4px;top:0;width:1.3px;height:100%;background:#121317"></div><div style="left:784px;top:0;width:4px;height:100%;background:#141519"></div><div style="left:785px;top:0;width:2px;height:100%;background:#505052"></div><div style="left:809.4px;top:0;width:1.3px;height:100%;background:#121317"></div><div style="left:833.4px;top:0;width:1.3px;height:100%;background:#121317"></div><div style="left:857.4px;top:0;width:1.3px;height:100%;background:#121317"></div><div style="left:880px;top:0;width:4px;height:100%;background:#141519"></div><div style="left:881px;top:0;width:2px;height:100%;background:#505052"></div><div style="left:905.4px;top:0;width:1.3px;height:100%;background:#121317"></div><div style="left:929.4px;top:0;width:1.3px;height:100%;background:#121317"></div><div style="left:953.4px;top:0;width:1.3px;height:100%;background:#121317"></div><div style="left:976px;top:0;width:4px;height:100%;background:#141519"></div><div style="left:977px;top:0;width:2px;height:100%;background:#505052"></div><div style="left:1001.4px;top:0;width:1.3px;height:100%;background:#121317"></div><div style="left:1025.4px;top:0;width:1.3px;height:100%;background:#121317"></div><div style="left:1049.4px;top:0;width:1.3px;height:100%;background:#121317"></div><div style="left:1072px;top:0;width:4px;height:100%;background:#141519"></div><div style="left:1073px;top:0;width:2px;height:100%;background:#505052"></div><div style="left:1097.4px;top:0;width:1.3px;height:100%;background:#121317"></div><div style="left:1121.4px;top:0;width:1.3px;height:100%;background:#121317"></div><div style="left:1145.4px;top:0;width:1.3px;height:100%;background:#121317"></div><div style="left:1168px;top:0;width:4px;height:100%;background:#141519"></div><div style="left:1169px;top:0;width:2px;height:100%;background:#505052"></div><div style="left:1193.4px;top:0;width:1.3px;height:100%;background:#121317"></div><div style="left:1217.4px;top:0;width:1.3px;height:100%;background:#121317"></div><div style="left:1241.4px;top:0;width:1.3px;height:100%;background:#121317"></div><div style="left:1264px;top:0;width:4px;height:100%;background:#141519"></div><div style="left:1265px;top:0;width:2px;height:100%;background:#505052"></div><div style="left:1289.4px;top:0;width:1.3px;height:100%;background:#121317"></div><div style="left:1313.4px;top:0;width:1.3px;height:100%;background:#121317"></div><div style="left:1337.4px;top:0;width:1.3px;height:100%;background:#121317"></div><div style="left:1360px;top:0;width:4px;height:100%;background:#141519"></div><div style="left:1361px;top:0;width:2px;height:100%;background:#505052"></div><div style="left:1385.4px;top:0;width:1.3px;height:100%;background:#121317"></div><div style="left:1409.4px;top:0;width:1.3px;height:100%;background:#121317"></div><div style="left:1433.4px;top:0;width:1.3px;height:100%;background:#121317"></div><div style="left:1456px;top:0;width:4px;height:100%;background:#141519"></div><div style="left:1457px;top:0;width:2px;height:100%;background:#505052"></div><div style="left:1481.4px;top:0;width:1.3px;height:100%;background:#121317"></div><div style="left:1505.4px;top:0;width:1.3px;height:100%;background:#121317"></div><div style="left:1529.4px;top:0;width:1.3px;height:100%;background:#121317"></div><div style="left:1552px;top:0;width:4px;height:100%;background:#141519"></div><div style="left:1553px;top:0;width:2px;height:100%;background:#505052"></div><div style="left:1577.4px;top:0;width:1.3px;height:100%;background:#121317"></div><div style="left:1601.4px;top:0;width:1.3px;height:100%;background:#121317"></div><div style="left:1625.4px;top:0;width:1.3px;height:100%;background:#121317"></div><div style="left:1648px;top:0;width:4px;height:100%;background:#141519"></div><div style="left:1649px;top:0;width:2px;height:100%;background:#505052"></div><div style="left:1673.4px;top:0;width:1.3px;height:100%;background:#121317"></div><div style="left:1697.4px;top:0;width:1.3px;height:100%;background:#121317"></div><div style="left:1721.4px;top:0;width:1.3px;height:100%;background:#121317"></div><div style="left:1744px;top:0;width:4px;height:100%;background:#141519"></div><div style="left:1745px;top:0;width:2px;height:100%;background:#505052"></div><div style="left:1769.4px;top:0;width:1.3px;height:100%;background:#121317"></div><div style="left:1793.4px;top:0;width:1.3px;height:100%;background:#121317"></div><div style="left:1817.4px;top:0;width:1.3px;height:100%;background:#121317"></div><div style="left:1840px;top:0;width:4px;height:100%;background:#141519"></div><div style="left:1841px;top:0;width:2px;height:100%;background:#505052"></div><div style="left:1865.4px;top:0;width:1.3px;height:100%;background:#121317"></div><div style="left:1889.4px;top:0;width:1.3px;height:100%;background:#121317"></div></div>
<div style="left:186px;top:439.8px;width:1726px;height:62.099999999999966px;background:#18191e"></div>
<div style="left:0;top:439.8px;width:1960px;height:62.10px"><div style="left:185.4px;top:0;width:1.3px;height:100%;background:#121317"></div><div style="left:208px;top:0;width:4px;height:100%;background:#141519"></div><div style="left:209px;top:0;width:2px;height:100%;background:#505052"></div><div style="left:233.4px;top:0;width:1.3px;height:100%;background:#121317"></div><div style="left:257.4px;top:0;width:1.3px;height:100%;background:#121317"></div><div style="left:281.4px;top:0;width:1.3px;height:100%;background:#121317"></div><div style="left:304px;top:0;width:4px;height:100%;background:#141519"></div><div style="left:305px;top:0;width:2px;height:100%;background:#505052"></div><div style="left:329.4px;top:0;width:1.3px;height:100%;background:#121317"></div><div style="left:353.4px;top:0;width:1.3px;height:100%;background:#121317"></div><div style="left:377.4px;top:0;width:1.3px;height:100%;background:#121317"></div><div style="left:400px;top:0;width:4px;height:100%;background:#141519"></div><div style="left:401px;top:0;width:2px;height:100%;background:#505052"></div><div style="left:425.4px;top:0;width:1.3px;height:100%;background:#121317"></div><div style="left:449.4px;top:0;width:1.3px;height:100%;background:#121317"></div><div style="left:473.4px;top:0;width:1.3px;height:100%;background:#121317"></div><div style="left:496px;top:0;width:4px;height:100%;background:#141519"></div><div style="left:497px;top:0;width:2px;height:100%;background:#505052"></div><div style="left:521.4px;top:0;width:1.3px;height:100%;background:#121317"></div><div style="left:545.4px;top:0;width:1.3px;height:100%;background:#121317"></div><div style="left:569.4px;top:0;width:1.3px;height:100%;background:#121317"></div><div style="left:592px;top:0;width:4px;height:100%;background:#141519"></div><div style="left:593px;top:0;width:2px;height:100%;background:#505052"></div><div style="left:617.4px;top:0;width:1.3px;height:100%;background:#121317"></div><div style="left:641.4px;top:0;width:1.3px;height:100%;background:#121317"></div><div style="left:665.4px;top:0;width:1.3px;height:100%;background:#121317"></div><div style="left:688px;top:0;width:4px;height:100%;background:#141519"></div><div style="left:689px;top:0;width:2px;height:100%;background:#505052"></div><div style="left:713.4px;top:0;width:1.3px;height:100%;background:#121317"></div><div style="left:737.4px;top:0;width:1.3px;height:100%;background:#121317"></div><div style="left:761.4px;top:0;width:1.3px;height:100%;background:#121317"></div><div style="left:784px;top:0;width:4px;height:100%;background:#141519"></div><div style="left:785px;top:0;width:2px;height:100%;background:#505052"></div><div style="left:809.4px;top:0;width:1.3px;height:100%;background:#121317"></div><div style="left:833.4px;top:0;width:1.3px;height:100%;background:#121317"></div><div style="left:857.4px;top:0;width:1.3px;height:100%;background:#121317"></div><div style="left:880px;top:0;width:4px;height:100%;background:#141519"></div><div style="left:881px;top:0;width:2px;height:100%;background:#505052"></div><div style="left:905.4px;top:0;width:1.3px;height:100%;background:#121317"></div><div style="left:929.4px;top:0;width:1.3px;height:100%;background:#121317"></div><div style="left:953.4px;top:0;width:1.3px;height:100%;background:#121317"></div><div style="left:976px;top:0;width:4px;height:100%;background:#141519"></div><div style="left:977px;top:0;width:2px;height:100%;background:#505052"></div><div style="left:1001.4px;top:0;width:1.3px;height:100%;background:#121317"></div><div style="left:1025.4px;top:0;width:1.3px;height:100%;background:#121317"></div><div style="left:1049.4px;top:0;width:1.3px;height:100%;background:#121317"></div><div style="left:1072px;top:0;width:4px;height:100%;background:#141519"></div><div style="left:1073px;top:0;width:2px;height:100%;background:#505052"></div><div style="left:1097.4px;top:0;width:1.3px;height:100%;background:#121317"></div><div style="left:1121.4px;top:0;width:1.3px;height:100%;background:#121317"></div><div style="left:1145.4px;top:0;width:1.3px;height:100%;background:#121317"></div><div style="left:1168px;top:0;width:4px;height:100%;background:#141519"></div><div style="left:1169px;top:0;width:2px;height:100%;background:#505052"></div><div style="left:1193.4px;top:0;width:1.3px;height:100%;background:#121317"></div><div style="left:1217.4px;top:0;width:1.3px;height:100%;background:#121317"></div><div style="left:1241.4px;top:0;width:1.3px;height:100%;background:#121317"></div><div style="left:1264px;top:0;width:4px;height:100%;background:#141519"></div><div style="left:1265px;top:0;width:2px;height:100%;background:#505052"></div><div style="left:1289.4px;top:0;width:1.3px;height:100%;background:#121317"></div><div style="left:1313.4px;top:0;width:1.3px;height:100%;background:#121317"></div><div style="left:1337.4px;top:0;width:1.3px;height:100%;background:#121317"></div><div style="left:1360px;top:0;width:4px;height:100%;background:#141519"></div><div style="left:1361px;top:0;width:2px;height:100%;background:#505052"></div><div style="left:1385.4px;top:0;width:1.3px;height:100%;background:#121317"></div><div style="left:1409.4px;top:0;width:1.3px;height:100%;background:#121317"></div><div style="left:1433.4px;top:0;width:1.3px;height:100%;background:#121317"></div><div style="left:1456px;top:0;width:4px;height:100%;background:#141519"></div><div style="left:1457px;top:0;width:2px;height:100%;background:#505052"></div><div style="left:1481.4px;top:0;width:1.3px;height:100%;background:#121317"></div><div style="left:1505.4px;top:0;width:1.3px;height:100%;background:#121317"></div><div style="left:1529.4px;top:0;width:1.3px;height:100%;background:#121317"></div><div style="left:1552px;top:0;width:4px;height:100%;background:#141519"></div><div style="left:1553px;top:0;width:2px;height:100%;background:#505052"></div><div style="left:1577.4px;top:0;width:1.3px;height:100%;background:#121317"></div><div style="left:1601.4px;top:0;width:1.3px;height:100%;background:#121317"></div><div style="left:1625.4px;top:0;width:1.3px;height:100%;background:#121317"></div><div style="left:1648px;top:0;width:4px;height:100%;background:#141519"></div><div style="left:1649px;top:0;width:2px;height:100%;background:#505052"></div><div style="left:1673.4px;top:0;width:1.3px;height:100%;background:#121317"></div><div style="left:1697.4px;top:0;width:1.3px;height:100%;background:#121317"></div><div style="left:1721.4px;top:0;width:1.3px;height:100%;background:#121317"></div><div style="left:1744px;top:0;width:4px;height:100%;background:#141519"></div><div style="left:1745px;top:0;width:2px;height:100%;background:#505052"></div><div style="left:1769.4px;top:0;width:1.3px;height:100%;background:#121317"></div><div style="left:1793.4px;top:0;width:1.3px;height:100%;background:#121317"></div><div style="left:1817.4px;top:0;width:1.3px;height:100%;background:#121317"></div><div style="left:1840px;top:0;width:4px;height:100%;background:#141519"></div><div style="left:1841px;top:0;width:2px;height:100%;background:#505052"></div><div style="left:1865.4px;top:0;width:1.3px;height:100%;background:#121317"></div><div style="left:1889.4px;top:0;width:1.3px;height:100%;background:#121317"></div></div>
<div style="left:186px;top:503.8px;width:1726px;height:62.099999999999966px;background:#18191e"></div>
<div style="left:0;top:503.8px;width:1960px;height:62.10px"><div style="left:185.4px;top:0;width:1.3px;height:100%;background:#121317"></div><div style="left:208px;top:0;width:4px;height:100%;background:#141519"></div><div style="left:209px;top:0;width:2px;height:100%;background:#505052"></div><div style="left:233.4px;top:0;width:1.3px;height:100%;background:#121317"></div><div style="left:257.4px;top:0;width:1.3px;height:100%;background:#121317"></div><div style="left:281.4px;top:0;width:1.3px;height:100%;background:#121317"></div><div style="left:304px;top:0;width:4px;height:100%;background:#141519"></div><div style="left:305px;top:0;width:2px;height:100%;background:#505052"></div><div style="left:329.4px;top:0;width:1.3px;height:100%;background:#121317"></div><div style="left:353.4px;top:0;width:1.3px;height:100%;background:#121317"></div><div style="left:377.4px;top:0;width:1.3px;height:100%;background:#121317"></div><div style="left:400px;top:0;width:4px;height:100%;background:#141519"></div><div style="left:401px;top:0;width:2px;height:100%;background:#505052"></div><div style="left:425.4px;top:0;width:1.3px;height:100%;background:#121317"></div><div style="left:449.4px;top:0;width:1.3px;height:100%;background:#121317"></div><div style="left:473.4px;top:0;width:1.3px;height:100%;background:#121317"></div><div style="left:496px;top:0;width:4px;height:100%;background:#141519"></div><div style="left:497px;top:0;width:2px;height:100%;background:#505052"></div><div style="left:521.4px;top:0;width:1.3px;height:100%;background:#121317"></div><div style="left:545.4px;top:0;width:1.3px;height:100%;background:#121317"></div><div style="left:569.4px;top:0;width:1.3px;height:100%;background:#121317"></div><div style="left:592px;top:0;width:4px;height:100%;background:#141519"></div><div style="left:593px;top:0;width:2px;height:100%;background:#505052"></div><div style="left:617.4px;top:0;width:1.3px;height:100%;background:#121317"></div><div style="left:641.4px;top:0;width:1.3px;height:100%;background:#121317"></div><div style="left:665.4px;top:0;width:1.3px;height:100%;background:#121317"></div><div style="left:688px;top:0;width:4px;height:100%;background:#141519"></div><div style="left:689px;top:0;width:2px;height:100%;background:#505052"></div><div style="left:713.4px;top:0;width:1.3px;height:100%;background:#121317"></div><div style="left:737.4px;top:0;width:1.3px;height:100%;background:#121317"></div><div style="left:761.4px;top:0;width:1.3px;height:100%;background:#121317"></div><div style="left:784px;top:0;width:4px;height:100%;background:#141519"></div><div style="left:785px;top:0;width:2px;height:100%;background:#505052"></div><div style="left:809.4px;top:0;width:1.3px;height:100%;background:#121317"></div><div style="left:833.4px;top:0;width:1.3px;height:100%;background:#121317"></div><div style="left:857.4px;top:0;width:1.3px;height:100%;background:#121317"></div><div style="left:880px;top:0;width:4px;height:100%;background:#141519"></div><div style="left:881px;top:0;width:2px;height:100%;background:#505052"></div><div style="left:905.4px;top:0;width:1.3px;height:100%;background:#121317"></div><div style="left:929.4px;top:0;width:1.3px;height:100%;background:#121317"></div><div style="left:953.4px;top:0;width:1.3px;height:100%;background:#121317"></div><div style="left:976px;top:0;width:4px;height:100%;background:#141519"></div><div style="left:977px;top:0;width:2px;height:100%;background:#505052"></div><div style="left:1001.4px;top:0;width:1.3px;height:100%;background:#121317"></div><div style="left:1025.4px;top:0;width:1.3px;height:100%;background:#121317"></div><div style="left:1049.4px;top:0;width:1.3px;height:100%;background:#121317"></div><div style="left:1072px;top:0;width:4px;height:100%;background:#141519"></div><div style="left:1073px;top:0;width:2px;height:100%;background:#505052"></div><div style="left:1097.4px;top:0;width:1.3px;height:100%;background:#121317"></div><div style="left:1121.4px;top:0;width:1.3px;height:100%;background:#121317"></div><div style="left:1145.4px;top:0;width:1.3px;height:100%;background:#121317"></div><div style="left:1168px;top:0;width:4px;height:100%;background:#141519"></div><div style="left:1169px;top:0;width:2px;height:100%;background:#505052"></div><div style="left:1193.4px;top:0;width:1.3px;height:100%;background:#121317"></div><div style="left:1217.4px;top:0;width:1.3px;height:100%;background:#121317"></div><div style="left:1241.4px;top:0;width:1.3px;height:100%;background:#121317"></div><div style="left:1264px;top:0;width:4px;height:100%;background:#141519"></div><div style="left:1265px;top:0;width:2px;height:100%;background:#505052"></div><div style="left:1289.4px;top:0;width:1.3px;height:100%;background:#121317"></div><div style="left:1313.4px;top:0;width:1.3px;height:100%;background:#121317"></div><div style="left:1337.4px;top:0;width:1.3px;height:100%;background:#121317"></div><div style="left:1360px;top:0;width:4px;height:100%;background:#141519"></div><div style="left:1361px;top:0;width:2px;height:100%;background:#505052"></div><div style="left:1385.4px;top:0;width:1.3px;height:100%;background:#121317"></div><div style="left:1409.4px;top:0;width:1.3px;height:100%;background:#121317"></div><div style="left:1433.4px;top:0;width:1.3px;height:100%;background:#121317"></div><div style="left:1456px;top:0;width:4px;height:100%;background:#141519"></div><div style="left:1457px;top:0;width:2px;height:100%;background:#505052"></div><div style="left:1481.4px;top:0;width:1.3px;height:100%;background:#121317"></div><div style="left:1505.4px;top:0;width:1.3px;height:100%;background:#121317"></div><div style="left:1529.4px;top:0;width:1.3px;height:100%;background:#121317"></div><div style="left:1552px;top:0;width:4px;height:100%;background:#141519"></div><div style="left:1553px;top:0;width:2px;height:100%;background:#505052"></div><div style="left:1577.4px;top:0;width:1.3px;height:100%;background:#121317"></div><div style="left:1601.4px;top:0;width:1.3px;height:100%;background:#121317"></div><div style="left:1625.4px;top:0;width:1.3px;height:100%;background:#121317"></div><div style="left:1648px;top:0;width:4px;height:100%;background:#141519"></div><div style="left:1649px;top:0;width:2px;height:100%;background:#505052"></div><div style="left:1673.4px;top:0;width:1.3px;height:100%;background:#121317"></div><div style="left:1697.4px;top:0;width:1.3px;height:100%;background:#121317"></div><div style="left:1721.4px;top:0;width:1.3px;height:100%;background:#121317"></div><div style="left:1744px;top:0;width:4px;height:100%;background:#141519"></div><div style="left:1745px;top:0;width:2px;height:100%;background:#505052"></div><div style="left:1769.4px;top:0;width:1.3px;height:100%;background:#121317"></div><div style="left:1793.4px;top:0;width:1.3px;height:100%;background:#121317"></div><div style="left:1817.4px;top:0;width:1.3px;height:100%;background:#121317"></div><div style="left:1840px;top:0;width:4px;height:100%;background:#141519"></div><div style="left:1841px;top:0;width:2px;height:100%;background:#505052"></div><div style="left:1865.4px;top:0;width:1.3px;height:100%;background:#121317"></div><div style="left:1889.4px;top:0;width:1.3px;height:100%;background:#121317"></div></div>
<div style="left:186px;top:567.8px;width:1726px;height:62.10000000000002px;background:#18191e"></div>
<div style="left:0;top:567.8px;width:1960px;height:62.10px"><div style="left:185.4px;top:0;width:1.3px;height:100%;background:#121317"></div><div style="left:208px;top:0;width:4px;height:100%;background:#141519"></div><div style="left:209px;top:0;width:2px;height:100%;background:#505052"></div><div style="left:233.4px;top:0;width:1.3px;height:100%;background:#121317"></div><div style="left:257.4px;top:0;width:1.3px;height:100%;background:#121317"></div><div style="left:281.4px;top:0;width:1.3px;height:100%;background:#121317"></div><div style="left:304px;top:0;width:4px;height:100%;background:#141519"></div><div style="left:305px;top:0;width:2px;height:100%;background:#505052"></div><div style="left:329.4px;top:0;width:1.3px;height:100%;background:#121317"></div><div style="left:353.4px;top:0;width:1.3px;height:100%;background:#121317"></div><div style="left:377.4px;top:0;width:1.3px;height:100%;background:#121317"></div><div style="left:400px;top:0;width:4px;height:100%;background:#141519"></div><div style="left:401px;top:0;width:2px;height:100%;background:#505052"></div><div style="left:425.4px;top:0;width:1.3px;height:100%;background:#121317"></div><div style="left:449.4px;top:0;width:1.3px;height:100%;background:#121317"></div><div style="left:473.4px;top:0;width:1.3px;height:100%;background:#121317"></div><div style="left:496px;top:0;width:4px;height:100%;background:#141519"></div><div style="left:497px;top:0;width:2px;height:100%;background:#505052"></div><div style="left:521.4px;top:0;width:1.3px;height:100%;background:#121317"></div><div style="left:545.4px;top:0;width:1.3px;height:100%;background:#121317"></div><div style="left:569.4px;top:0;width:1.3px;height:100%;background:#121317"></div><div style="left:592px;top:0;width:4px;height:100%;background:#141519"></div><div style="left:593px;top:0;width:2px;height:100%;background:#505052"></div><div style="left:617.4px;top:0;width:1.3px;height:100%;background:#121317"></div><div style="left:641.4px;top:0;width:1.3px;height:100%;background:#121317"></div><div style="left:665.4px;top:0;width:1.3px;height:100%;background:#121317"></div><div style="left:688px;top:0;width:4px;height:100%;background:#141519"></div><div style="left:689px;top:0;width:2px;height:100%;background:#505052"></div><div style="left:713.4px;top:0;width:1.3px;height:100%;background:#121317"></div><div style="left:737.4px;top:0;width:1.3px;height:100%;background:#121317"></div><div style="left:761.4px;top:0;width:1.3px;height:100%;background:#121317"></div><div style="left:784px;top:0;width:4px;height:100%;background:#141519"></div><div style="left:785px;top:0;width:2px;height:100%;background:#505052"></div><div style="left:809.4px;top:0;width:1.3px;height:100%;background:#121317"></div><div style="left:833.4px;top:0;width:1.3px;height:100%;background:#121317"></div><div style="left:857.4px;top:0;width:1.3px;height:100%;background:#121317"></div><div style="left:880px;top:0;width:4px;height:100%;background:#141519"></div><div style="left:881px;top:0;width:2px;height:100%;background:#505052"></div><div style="left:905.4px;top:0;width:1.3px;height:100%;background:#121317"></div><div style="left:929.4px;top:0;width:1.3px;height:100%;background:#121317"></div><div style="left:953.4px;top:0;width:1.3px;height:100%;background:#121317"></div><div style="left:976px;top:0;width:4px;height:100%;background:#141519"></div><div style="left:977px;top:0;width:2px;height:100%;background:#505052"></div><div style="left:1001.4px;top:0;width:1.3px;height:100%;background:#121317"></div><div style="left:1025.4px;top:0;width:1.3px;height:100%;background:#121317"></div><div style="left:1049.4px;top:0;width:1.3px;height:100%;background:#121317"></div><div style="left:1072px;top:0;width:4px;height:100%;background:#141519"></div><div style="left:1073px;top:0;width:2px;height:100%;background:#505052"></div><div style="left:1097.4px;top:0;width:1.3px;height:100%;background:#121317"></div><div style="left:1121.4px;top:0;width:1.3px;height:100%;background:#121317"></div><div style="left:1145.4px;top:0;width:1.3px;height:100%;background:#121317"></div><div style="left:1168px;top:0;width:4px;height:100%;background:#141519"></div><div style="left:1169px;top:0;width:2px;height:100%;background:#505052"></div><div style="left:1193.4px;top:0;width:1.3px;height:100%;background:#121317"></div><div style="left:1217.4px;top:0;width:1.3px;height:100%;background:#121317"></div><div style="left:1241.4px;top:0;width:1.3px;height:100%;background:#121317"></div><div style="left:1264px;top:0;width:4px;height:100%;background:#141519"></div><div style="left:1265px;top:0;width:2px;height:100%;background:#505052"></div><div style="left:1289.4px;top:0;width:1.3px;height:100%;background:#121317"></div><div style="left:1313.4px;top:0;width:1.3px;height:100%;background:#121317"></div><div style="left:1337.4px;top:0;width:1.3px;height:100%;background:#121317"></div><div style="left:1360px;top:0;width:4px;height:100%;background:#141519"></div><div style="left:1361px;top:0;width:2px;height:100%;background:#505052"></div><div style="left:1385.4px;top:0;width:1.3px;height:100%;background:#121317"></div><div style="left:1409.4px;top:0;width:1.3px;height:100%;background:#121317"></div><div style="left:1433.4px;top:0;width:1.3px;height:100%;background:#121317"></div><div style="left:1456px;top:0;width:4px;height:100%;background:#141519"></div><div style="left:1457px;top:0;width:2px;height:100%;background:#505052"></div><div style="left:1481.4px;top:0;width:1.3px;height:100%;background:#121317"></div><div style="left:1505.4px;top:0;width:1.3px;height:100%;background:#121317"></div><div style="left:1529.4px;top:0;width:1.3px;height:100%;background:#121317"></div><div style="left:1552px;top:0;width:4px;height:100%;background:#141519"></div><div style="left:1553px;top:0;width:2px;height:100%;background:#505052"></div><div style="left:1577.4px;top:0;width:1.3px;height:100%;background:#121317"></div><div style="left:1601.4px;top:0;width:1.3px;height:100%;background:#121317"></div><div style="left:1625.4px;top:0;width:1.3px;height:100%;background:#121317"></div><div style="left:1648px;top:0;width:4px;height:100%;background:#141519"></div><div style="left:1649px;top:0;width:2px;height:100%;background:#505052"></div><div style="left:1673.4px;top:0;width:1.3px;height:100%;background:#121317"></div><div style="left:1697.4px;top:0;width:1.3px;height:100%;background:#121317"></div><div style="left:1721.4px;top:0;width:1.3px;height:100%;background:#121317"></div><div style="left:1744px;top:0;width:4px;height:100%;background:#141519"></div><div style="left:1745px;top:0;width:2px;height:100%;background:#505052"></div><div style="left:1769.4px;top:0;width:1.3px;height:100%;background:#121317"></div><div style="left:1793.4px;top:0;width:1.3px;height:100%;background:#121317"></div><div style="left:1817.4px;top:0;width:1.3px;height:100%;background:#121317"></div><div style="left:1840px;top:0;width:4px;height:100%;background:#141519"></div><div style="left:1841px;top:0;width:2px;height:100%;background:#505052"></div><div style="left:1865.4px;top:0;width:1.3px;height:100%;background:#121317"></div><div style="left:1889.4px;top:0;width:1.3px;height:100%;background:#121317"></div></div>
<div style="left:186px;top:631.8px;width:1726px;height:62.10000000000002px;background:#18191e"></div>
<div style="left:0;top:631.8px;width:1960px;height:62.10px"><div style="left:185.4px;top:0;width:1.3px;height:100%;background:#121317"></div><div style="left:208px;top:0;width:4px;height:100%;background:#141519"></div><div style="left:209px;top:0;width:2px;height:100%;background:#505052"></div><div style="left:233.4px;top:0;width:1.3px;height:100%;background:#121317"></div><div style="left:257.4px;top:0;width:1.3px;height:100%;background:#121317"></div><div style="left:281.4px;top:0;width:1.3px;height:100%;background:#121317"></div><div style="left:304px;top:0;width:4px;height:100%;background:#141519"></div><div style="left:305px;top:0;width:2px;height:100%;background:#505052"></div><div style="left:329.4px;top:0;width:1.3px;height:100%;background:#121317"></div><div style="left:353.4px;top:0;width:1.3px;height:100%;background:#121317"></div><div style="left:377.4px;top:0;width:1.3px;height:100%;background:#121317"></div><div style="left:400px;top:0;width:4px;height:100%;background:#141519"></div><div style="left:401px;top:0;width:2px;height:100%;background:#505052"></div><div style="left:425.4px;top:0;width:1.3px;height:100%;background:#121317"></div><div style="left:449.4px;top:0;width:1.3px;height:100%;background:#121317"></div><div style="left:473.4px;top:0;width:1.3px;height:100%;background:#121317"></div><div style="left:496px;top:0;width:4px;height:100%;background:#141519"></div><div style="left:497px;top:0;width:2px;height:100%;background:#505052"></div><div style="left:521.4px;top:0;width:1.3px;height:100%;background:#121317"></div><div style="left:545.4px;top:0;width:1.3px;height:100%;background:#121317"></div><div style="left:569.4px;top:0;width:1.3px;height:100%;background:#121317"></div><div style="left:592px;top:0;width:4px;height:100%;background:#141519"></div><div style="left:593px;top:0;width:2px;height:100%;background:#505052"></div><div style="left:617.4px;top:0;width:1.3px;height:100%;background:#121317"></div><div style="left:641.4px;top:0;width:1.3px;height:100%;background:#121317"></div><div style="left:665.4px;top:0;width:1.3px;height:100%;background:#121317"></div><div style="left:688px;top:0;width:4px;height:100%;background:#141519"></div><div style="left:689px;top:0;width:2px;height:100%;background:#505052"></div><div style="left:713.4px;top:0;width:1.3px;height:100%;background:#121317"></div><div style="left:737.4px;top:0;width:1.3px;height:100%;background:#121317"></div><div style="left:761.4px;top:0;width:1.3px;height:100%;background:#121317"></div><div style="left:784px;top:0;width:4px;height:100%;background:#141519"></div><div style="left:785px;top:0;width:2px;height:100%;background:#505052"></div><div style="left:809.4px;top:0;width:1.3px;height:100%;background:#121317"></div><div style="left:833.4px;top:0;width:1.3px;height:100%;background:#121317"></div><div style="left:857.4px;top:0;width:1.3px;height:100%;background:#121317"></div><div style="left:880px;top:0;width:4px;height:100%;background:#141519"></div><div style="left:881px;top:0;width:2px;height:100%;background:#505052"></div><div style="left:905.4px;top:0;width:1.3px;height:100%;background:#121317"></div><div style="left:929.4px;top:0;width:1.3px;height:100%;background:#121317"></div><div style="left:953.4px;top:0;width:1.3px;height:100%;background:#121317"></div><div style="left:976px;top:0;width:4px;height:100%;background:#141519"></div><div style="left:977px;top:0;width:2px;height:100%;background:#505052"></div><div style="left:1001.4px;top:0;width:1.3px;height:100%;background:#121317"></div><div style="left:1025.4px;top:0;width:1.3px;height:100%;background:#121317"></div><div style="left:1049.4px;top:0;width:1.3px;height:100%;background:#121317"></div><div style="left:1072px;top:0;width:4px;height:100%;background:#141519"></div><div style="left:1073px;top:0;width:2px;height:100%;background:#505052"></div><div style="left:1097.4px;top:0;width:1.3px;height:100%;background:#121317"></div><div style="left:1121.4px;top:0;width:1.3px;height:100%;background:#121317"></div><div style="left:1145.4px;top:0;width:1.3px;height:100%;background:#121317"></div><div style="left:1168px;top:0;width:4px;height:100%;background:#141519"></div><div style="left:1169px;top:0;width:2px;height:100%;background:#505052"></div><div style="left:1193.4px;top:0;width:1.3px;height:100%;background:#121317"></div><div style="left:1217.4px;top:0;width:1.3px;height:100%;background:#121317"></div><div style="left:1241.4px;top:0;width:1.3px;height:100%;background:#121317"></div><div style="left:1264px;top:0;width:4px;height:100%;background:#141519"></div><div style="left:1265px;top:0;width:2px;height:100%;background:#505052"></div><div style="left:1289.4px;top:0;width:1.3px;height:100%;background:#121317"></div><div style="left:1313.4px;top:0;width:1.3px;height:100%;background:#121317"></div><div style="left:1337.4px;top:0;width:1.3px;height:100%;background:#121317"></div><div style="left:1360px;top:0;width:4px;height:100%;background:#141519"></div><div style="left:1361px;top:0;width:2px;height:100%;background:#505052"></div><div style="left:1385.4px;top:0;width:1.3px;height:100%;background:#121317"></div><div style="left:1409.4px;top:0;width:1.3px;height:100%;background:#121317"></div><div style="left:1433.4px;top:0;width:1.3px;height:100%;background:#121317"></div><div style="left:1456px;top:0;width:4px;height:100%;background:#141519"></div><div style="left:1457px;top:0;width:2px;height:100%;background:#505052"></div><div style="left:1481.4px;top:0;width:1.3px;height:100%;background:#121317"></div><div style="left:1505.4px;top:0;width:1.3px;height:100%;background:#121317"></div><div style="left:1529.4px;top:0;width:1.3px;height:100%;background:#121317"></div><div style="left:1552px;top:0;width:4px;height:100%;background:#141519"></div><div style="left:1553px;top:0;width:2px;height:100%;background:#505052"></div><div style="left:1577.4px;top:0;width:1.3px;height:100%;background:#121317"></div><div style="left:1601.4px;top:0;width:1.3px;height:100%;background:#121317"></div><div style="left:1625.4px;top:0;width:1.3px;height:100%;background:#121317"></div><div style="left:1648px;top:0;width:4px;height:100%;background:#141519"></div><div style="left:1649px;top:0;width:2px;height:100%;background:#505052"></div><div style="left:1673.4px;top:0;width:1.3px;height:100%;background:#121317"></div><div style="left:1697.4px;top:0;width:1.3px;height:100%;background:#121317"></div><div style="left:1721.4px;top:0;width:1.3px;height:100%;background:#121317"></div><div style="left:1744px;top:0;width:4px;height:100%;background:#141519"></div><div style="left:1745px;top:0;width:2px;height:100%;background:#505052"></div><div style="left:1769.4px;top:0;width:1.3px;height:100%;background:#121317"></div><div style="left:1793.4px;top:0;width:1.3px;height:100%;background:#121317"></div><div style="left:1817.4px;top:0;width:1.3px;height:100%;background:#121317"></div><div style="left:1840px;top:0;width:4px;height:100%;background:#141519"></div><div style="left:1841px;top:0;width:2px;height:100%;background:#505052"></div><div style="left:1865.4px;top:0;width:1.3px;height:100%;background:#121317"></div><div style="left:1889.4px;top:0;width:1.3px;height:100%;background:#121317"></div></div>
<div style="left:186px;top:695.8px;width:1726px;height:62.10000000000002px;background:#18191e"></div>
<div style="left:0;top:695.8px;width:1960px;height:62.10px"><div style="left:185.4px;top:0;width:1.3px;height:100%;background:#121317"></div><div style="left:208px;top:0;width:4px;height:100%;background:#141519"></div><div style="left:209px;top:0;width:2px;height:100%;background:#505052"></div><div style="left:233.4px;top:0;width:1.3px;height:100%;background:#121317"></div><div style="left:257.4px;top:0;width:1.3px;height:100%;background:#121317"></div><div style="left:281.4px;top:0;width:1.3px;height:100%;background:#121317"></div><div style="left:304px;top:0;width:4px;height:100%;background:#141519"></div><div style="left:305px;top:0;width:2px;height:100%;background:#505052"></div><div style="left:329.4px;top:0;width:1.3px;height:100%;background:#121317"></div><div style="left:353.4px;top:0;width:1.3px;height:100%;background:#121317"></div><div style="left:377.4px;top:0;width:1.3px;height:100%;background:#121317"></div><div style="left:400px;top:0;width:4px;height:100%;background:#141519"></div><div style="left:401px;top:0;width:2px;height:100%;background:#505052"></div><div style="left:425.4px;top:0;width:1.3px;height:100%;background:#121317"></div><div style="left:449.4px;top:0;width:1.3px;height:100%;background:#121317"></div><div style="left:473.4px;top:0;width:1.3px;height:100%;background:#121317"></div><div style="left:496px;top:0;width:4px;height:100%;background:#141519"></div><div style="left:497px;top:0;width:2px;height:100%;background:#505052"></div><div style="left:521.4px;top:0;width:1.3px;height:100%;background:#121317"></div><div style="left:545.4px;top:0;width:1.3px;height:100%;background:#121317"></div><div style="left:569.4px;top:0;width:1.3px;height:100%;background:#121317"></div><div style="left:592px;top:0;width:4px;height:100%;background:#141519"></div><div style="left:593px;top:0;width:2px;height:100%;background:#505052"></div><div style="left:617.4px;top:0;width:1.3px;height:100%;background:#121317"></div><div style="left:641.4px;top:0;width:1.3px;height:100%;background:#121317"></div><div style="left:665.4px;top:0;width:1.3px;height:100%;background:#121317"></div><div style="left:688px;top:0;width:4px;height:100%;background:#141519"></div><div style="left:689px;top:0;width:2px;height:100%;background:#505052"></div><div style="left:713.4px;top:0;width:1.3px;height:100%;background:#121317"></div><div style="left:737.4px;top:0;width:1.3px;height:100%;background:#121317"></div><div style="left:761.4px;top:0;width:1.3px;height:100%;background:#121317"></div><div style="left:784px;top:0;width:4px;height:100%;background:#141519"></div><div style="left:785px;top:0;width:2px;height:100%;background:#505052"></div><div style="left:809.4px;top:0;width:1.3px;height:100%;background:#121317"></div><div style="left:833.4px;top:0;width:1.3px;height:100%;background:#121317"></div><div style="left:857.4px;top:0;width:1.3px;height:100%;background:#121317"></div><div style="left:880px;top:0;width:4px;height:100%;background:#141519"></div><div style="left:881px;top:0;width:2px;height:100%;background:#505052"></div><div style="left:905.4px;top:0;width:1.3px;height:100%;background:#121317"></div><div style="left:929.4px;top:0;width:1.3px;height:100%;background:#121317"></div><div style="left:953.4px;top:0;width:1.3px;height:100%;background:#121317"></div><div style="left:976px;top:0;width:4px;height:100%;background:#141519"></div><div style="left:977px;top:0;width:2px;height:100%;background:#505052"></div><div style="left:1001.4px;top:0;width:1.3px;height:100%;background:#121317"></div><div style="left:1025.4px;top:0;width:1.3px;height:100%;background:#121317"></div><div style="left:1049.4px;top:0;width:1.3px;height:100%;background:#121317"></div><div style="left:1072px;top:0;width:4px;height:100%;background:#141519"></div><div style="left:1073px;top:0;width:2px;height:100%;background:#505052"></div><div style="left:1097.4px;top:0;width:1.3px;height:100%;background:#121317"></div><div style="left:1121.4px;top:0;width:1.3px;height:100%;background:#121317"></div><div style="left:1145.4px;top:0;width:1.3px;height:100%;background:#121317"></div><div style="left:1168px;top:0;width:4px;height:100%;background:#141519"></div><div style="left:1169px;top:0;width:2px;height:100%;background:#505052"></div><div style="left:1193.4px;top:0;width:1.3px;height:100%;background:#121317"></div><div style="left:1217.4px;top:0;width:1.3px;height:100%;background:#121317"></div><div style="left:1241.4px;top:0;width:1.3px;height:100%;background:#121317"></div><div style="left:1264px;top:0;width:4px;height:100%;background:#141519"></div><div style="left:1265px;top:0;width:2px;height:100%;background:#505052"></div><div style="left:1289.4px;top:0;width:1.3px;height:100%;background:#121317"></div><div style="left:1313.4px;top:0;width:1.3px;height:100%;background:#121317"></div><div style="left:1337.4px;top:0;width:1.3px;height:100%;background:#121317"></div><div style="left:1360px;top:0;width:4px;height:100%;background:#141519"></div><div style="left:1361px;top:0;width:2px;height:100%;background:#505052"></div><div style="left:1385.4px;top:0;width:1.3px;height:100%;background:#121317"></div><div style="left:1409.4px;top:0;width:1.3px;height:100%;background:#121317"></div><div style="left:1433.4px;top:0;width:1.3px;height:100%;background:#121317"></div><div style="left:1456px;top:0;width:4px;height:100%;background:#141519"></div><div style="left:1457px;top:0;width:2px;height:100%;background:#505052"></div><div style="left:1481.4px;top:0;width:1.3px;height:100%;background:#121317"></div><div style="left:1505.4px;top:0;width:1.3px;height:100%;background:#121317"></div><div style="left:1529.4px;top:0;width:1.3px;height:100%;background:#121317"></div><div style="left:1552px;top:0;width:4px;height:100%;background:#141519"></div><div style="left:1553px;top:0;width:2px;height:100%;background:#505052"></div><div style="left:1577.4px;top:0;width:1.3px;height:100%;background:#121317"></div><div style="left:1601.4px;top:0;width:1.3px;height:100%;background:#121317"></div><div style="left:1625.4px;top:0;width:1.3px;height:100%;background:#121317"></div><div style="left:1648px;top:0;width:4px;height:100%;background:#141519"></div><div style="left:1649px;top:0;width:2px;height:100%;background:#505052"></div><div style="left:1673.4px;top:0;width:1.3px;height:100%;background:#121317"></div><div style="left:1697.4px;top:0;width:1.3px;height:100%;background:#121317"></div><div style="left:1721.4px;top:0;width:1.3px;height:100%;background:#121317"></div><div style="left:1744px;top:0;width:4px;height:100%;background:#141519"></div><div style="left:1745px;top:0;width:2px;height:100%;background:#505052"></div><div style="left:1769.4px;top:0;width:1.3px;height:100%;background:#121317"></div><div style="left:1793.4px;top:0;width:1.3px;height:100%;background:#121317"></div><div style="left:1817.4px;top:0;width:1.3px;height:100%;background:#121317"></div><div style="left:1840px;top:0;width:4px;height:100%;background:#141519"></div><div style="left:1841px;top:0;width:2px;height:100%;background:#505052"></div><div style="left:1865.4px;top:0;width:1.3px;height:100%;background:#121317"></div><div style="left:1889.4px;top:0;width:1.3px;height:100%;background:#121317"></div></div>
<div style="left:186px;top:759.8px;width:1726px;height:62.10000000000002px;background:#18191e"></div>
<div style="left:0;top:759.8px;width:1960px;height:62.10px"><div style="left:185.4px;top:0;width:1.3px;height:100%;background:#121317"></div><div style="left:208px;top:0;width:4px;height:100%;background:#141519"></div><div style="left:209px;top:0;width:2px;height:100%;background:#505052"></div><div style="left:233.4px;top:0;width:1.3px;height:100%;background:#121317"></div><div style="left:257.4px;top:0;width:1.3px;height:100%;background:#121317"></div><div style="left:281.4px;top:0;width:1.3px;height:100%;background:#121317"></div><div style="left:304px;top:0;width:4px;height:100%;background:#141519"></div><div style="left:305px;top:0;width:2px;height:100%;background:#505052"></div><div style="left:329.4px;top:0;width:1.3px;height:100%;background:#121317"></div><div style="left:353.4px;top:0;width:1.3px;height:100%;background:#121317"></div><div style="left:377.4px;top:0;width:1.3px;height:100%;background:#121317"></div><div style="left:400px;top:0;width:4px;height:100%;background:#141519"></div><div style="left:401px;top:0;width:2px;height:100%;background:#505052"></div><div style="left:425.4px;top:0;width:1.3px;height:100%;background:#121317"></div><div style="left:449.4px;top:0;width:1.3px;height:100%;background:#121317"></div><div style="left:473.4px;top:0;width:1.3px;height:100%;background:#121317"></div><div style="left:496px;top:0;width:4px;height:100%;background:#141519"></div><div style="left:497px;top:0;width:2px;height:100%;background:#505052"></div><div style="left:521.4px;top:0;width:1.3px;height:100%;background:#121317"></div><div style="left:545.4px;top:0;width:1.3px;height:100%;background:#121317"></div><div style="left:569.4px;top:0;width:1.3px;height:100%;background:#121317"></div><div style="left:592px;top:0;width:4px;height:100%;background:#141519"></div><div style="left:593px;top:0;width:2px;height:100%;background:#505052"></div><div style="left:617.4px;top:0;width:1.3px;height:100%;background:#121317"></div><div style="left:641.4px;top:0;width:1.3px;height:100%;background:#121317"></div><div style="left:665.4px;top:0;width:1.3px;height:100%;background:#121317"></div><div style="left:688px;top:0;width:4px;height:100%;background:#141519"></div><div style="left:689px;top:0;width:2px;height:100%;background:#505052"></div><div style="left:713.4px;top:0;width:1.3px;height:100%;background:#121317"></div><div style="left:737.4px;top:0;width:1.3px;height:100%;background:#121317"></div><div style="left:761.4px;top:0;width:1.3px;height:100%;background:#121317"></div><div style="left:784px;top:0;width:4px;height:100%;background:#141519"></div><div style="left:785px;top:0;width:2px;height:100%;background:#505052"></div><div style="left:809.4px;top:0;width:1.3px;height:100%;background:#121317"></div><div style="left:833.4px;top:0;width:1.3px;height:100%;background:#121317"></div><div style="left:857.4px;top:0;width:1.3px;height:100%;background:#121317"></div><div style="left:880px;top:0;width:4px;height:100%;background:#141519"></div><div style="left:881px;top:0;width:2px;height:100%;background:#505052"></div><div style="left:905.4px;top:0;width:1.3px;height:100%;background:#121317"></div><div style="left:929.4px;top:0;width:1.3px;height:100%;background:#121317"></div><div style="left:953.4px;top:0;width:1.3px;height:100%;background:#121317"></div><div style="left:976px;top:0;width:4px;height:100%;background:#141519"></div><div style="left:977px;top:0;width:2px;height:100%;background:#505052"></div><div style="left:1001.4px;top:0;width:1.3px;height:100%;background:#121317"></div><div style="left:1025.4px;top:0;width:1.3px;height:100%;background:#121317"></div><div style="left:1049.4px;top:0;width:1.3px;height:100%;background:#121317"></div><div style="left:1072px;top:0;width:4px;height:100%;background:#141519"></div><div style="left:1073px;top:0;width:2px;height:100%;background:#505052"></div><div style="left:1097.4px;top:0;width:1.3px;height:100%;background:#121317"></div><div style="left:1121.4px;top:0;width:1.3px;height:100%;background:#121317"></div><div style="left:1145.4px;top:0;width:1.3px;height:100%;background:#121317"></div><div style="left:1168px;top:0;width:4px;height:100%;background:#141519"></div><div style="left:1169px;top:0;width:2px;height:100%;background:#505052"></div><div style="left:1193.4px;top:0;width:1.3px;height:100%;background:#121317"></div><div style="left:1217.4px;top:0;width:1.3px;height:100%;background:#121317"></div><div style="left:1241.4px;top:0;width:1.3px;height:100%;background:#121317"></div><div style="left:1264px;top:0;width:4px;height:100%;background:#141519"></div><div style="left:1265px;top:0;width:2px;height:100%;background:#505052"></div><div style="left:1289.4px;top:0;width:1.3px;height:100%;background:#121317"></div><div style="left:1313.4px;top:0;width:1.3px;height:100%;background:#121317"></div><div style="left:1337.4px;top:0;width:1.3px;height:100%;background:#121317"></div><div style="left:1360px;top:0;width:4px;height:100%;background:#141519"></div><div style="left:1361px;top:0;width:2px;height:100%;background:#505052"></div><div style="left:1385.4px;top:0;width:1.3px;height:100%;background:#121317"></div><div style="left:1409.4px;top:0;width:1.3px;height:100%;background:#121317"></div><div style="left:1433.4px;top:0;width:1.3px;height:100%;background:#121317"></div><div style="left:1456px;top:0;width:4px;height:100%;background:#141519"></div><div style="left:1457px;top:0;width:2px;height:100%;background:#505052"></div><div style="left:1481.4px;top:0;width:1.3px;height:100%;background:#121317"></div><div style="left:1505.4px;top:0;width:1.3px;height:100%;background:#121317"></div><div style="left:1529.4px;top:0;width:1.3px;height:100%;background:#121317"></div><div style="left:1552px;top:0;width:4px;height:100%;background:#141519"></div><div style="left:1553px;top:0;width:2px;height:100%;background:#505052"></div><div style="left:1577.4px;top:0;width:1.3px;height:100%;background:#121317"></div><div style="left:1601.4px;top:0;width:1.3px;height:100%;background:#121317"></div><div style="left:1625.4px;top:0;width:1.3px;height:100%;background:#121317"></div><div style="left:1648px;top:0;width:4px;height:100%;background:#141519"></div><div style="left:1649px;top:0;width:2px;height:100%;background:#505052"></div><div style="left:1673.4px;top:0;width:1.3px;height:100%;background:#121317"></div><div style="left:1697.4px;top:0;width:1.3px;height:100%;background:#121317"></div><div style="left:1721.4px;top:0;width:1.3px;height:100%;background:#121317"></div><div style="left:1744px;top:0;width:4px;height:100%;background:#141519"></div><div style="left:1745px;top:0;width:2px;height:100%;background:#505052"></div><div style="left:1769.4px;top:0;width:1.3px;height:100%;background:#121317"></div><div style="left:1793.4px;top:0;width:1.3px;height:100%;background:#121317"></div><div style="left:1817.4px;top:0;width:1.3px;height:100%;background:#121317"></div><div style="left:1840px;top:0;width:4px;height:100%;background:#141519"></div><div style="left:1841px;top:0;width:2px;height:100%;background:#505052"></div><div style="left:1865.4px;top:0;width:1.3px;height:100%;background:#121317"></div><div style="left:1889.4px;top:0;width:1.3px;height:100%;background:#121317"></div></div>
<div style="left:186px;top:823.8px;width:1726px;height:62.10000000000002px;background:#18191e"></div>
<div style="left:0;top:823.8px;width:1960px;height:62.10px"><div style="left:185.4px;top:0;width:1.3px;height:100%;background:#121317"></div><div style="left:208px;top:0;width:4px;height:100%;background:#141519"></div><div style="left:209px;top:0;width:2px;height:100%;background:#505052"></div><div style="left:233.4px;top:0;width:1.3px;height:100%;background:#121317"></div><div style="left:257.4px;top:0;width:1.3px;height:100%;background:#121317"></div><div style="left:281.4px;top:0;width:1.3px;height:100%;background:#121317"></div><div style="left:304px;top:0;width:4px;height:100%;background:#141519"></div><div style="left:305px;top:0;width:2px;height:100%;background:#505052"></div><div style="left:329.4px;top:0;width:1.3px;height:100%;background:#121317"></div><div style="left:353.4px;top:0;width:1.3px;height:100%;background:#121317"></div><div style="left:377.4px;top:0;width:1.3px;height:100%;background:#121317"></div><div style="left:400px;top:0;width:4px;height:100%;background:#141519"></div><div style="left:401px;top:0;width:2px;height:100%;background:#505052"></div><div style="left:425.4px;top:0;width:1.3px;height:100%;background:#121317"></div><div style="left:449.4px;top:0;width:1.3px;height:100%;background:#121317"></div><div style="left:473.4px;top:0;width:1.3px;height:100%;background:#121317"></div><div style="left:496px;top:0;width:4px;height:100%;background:#141519"></div><div style="left:497px;top:0;width:2px;height:100%;background:#505052"></div><div style="left:521.4px;top:0;width:1.3px;height:100%;background:#121317"></div><div style="left:545.4px;top:0;width:1.3px;height:100%;background:#121317"></div><div style="left:569.4px;top:0;width:1.3px;height:100%;background:#121317"></div><div style="left:592px;top:0;width:4px;height:100%;background:#141519"></div><div style="left:593px;top:0;width:2px;height:100%;background:#505052"></div><div style="left:617.4px;top:0;width:1.3px;height:100%;background:#121317"></div><div style="left:641.4px;top:0;width:1.3px;height:100%;background:#121317"></div><div style="left:665.4px;top:0;width:1.3px;height:100%;background:#121317"></div><div style="left:688px;top:0;width:4px;height:100%;background:#141519"></div><div style="left:689px;top:0;width:2px;height:100%;background:#505052"></div><div style="left:713.4px;top:0;width:1.3px;height:100%;background:#121317"></div><div style="left:737.4px;top:0;width:1.3px;height:100%;background:#121317"></div><div style="left:761.4px;top:0;width:1.3px;height:100%;background:#121317"></div><div style="left:784px;top:0;width:4px;height:100%;background:#141519"></div><div style="left:785px;top:0;width:2px;height:100%;background:#505052"></div><div style="left:809.4px;top:0;width:1.3px;height:100%;background:#121317"></div><div style="left:833.4px;top:0;width:1.3px;height:100%;background:#121317"></div><div style="left:857.4px;top:0;width:1.3px;height:100%;background:#121317"></div><div style="left:880px;top:0;width:4px;height:100%;background:#141519"></div><div style="left:881px;top:0;width:2px;height:100%;background:#505052"></div><div style="left:905.4px;top:0;width:1.3px;height:100%;background:#121317"></div><div style="left:929.4px;top:0;width:1.3px;height:100%;background:#121317"></div><div style="left:953.4px;top:0;width:1.3px;height:100%;background:#121317"></div><div style="left:976px;top:0;width:4px;height:100%;background:#141519"></div><div style="left:977px;top:0;width:2px;height:100%;background:#505052"></div><div style="left:1001.4px;top:0;width:1.3px;height:100%;background:#121317"></div><div style="left:1025.4px;top:0;width:1.3px;height:100%;background:#121317"></div><div style="left:1049.4px;top:0;width:1.3px;height:100%;background:#121317"></div><div style="left:1072px;top:0;width:4px;height:100%;background:#141519"></div><div style="left:1073px;top:0;width:2px;height:100%;background:#505052"></div><div style="left:1097.4px;top:0;width:1.3px;height:100%;background:#121317"></div><div style="left:1121.4px;top:0;width:1.3px;height:100%;background:#121317"></div><div style="left:1145.4px;top:0;width:1.3px;height:100%;background:#121317"></div><div style="left:1168px;top:0;width:4px;height:100%;background:#141519"></div><div style="left:1169px;top:0;width:2px;height:100%;background:#505052"></div><div style="left:1193.4px;top:0;width:1.3px;height:100%;background:#121317"></div><div style="left:1217.4px;top:0;width:1.3px;height:100%;background:#121317"></div><div style="left:1241.4px;top:0;width:1.3px;height:100%;background:#121317"></div><div style="left:1264px;top:0;width:4px;height:100%;background:#141519"></div><div style="left:1265px;top:0;width:2px;height:100%;background:#505052"></div><div style="left:1289.4px;top:0;width:1.3px;height:100%;background:#121317"></div><div style="left:1313.4px;top:0;width:1.3px;height:100%;background:#121317"></div><div style="left:1337.4px;top:0;width:1.3px;height:100%;background:#121317"></div><div style="left:1360px;top:0;width:4px;height:100%;background:#141519"></div><div style="left:1361px;top:0;width:2px;height:100%;background:#505052"></div><div style="left:1385.4px;top:0;width:1.3px;height:100%;background:#121317"></div><div style="left:1409.4px;top:0;width:1.3px;height:100%;background:#121317"></div><div style="left:1433.4px;top:0;width:1.3px;height:100%;background:#121317"></div><div style="left:1456px;top:0;width:4px;height:100%;background:#141519"></div><div style="left:1457px;top:0;width:2px;height:100%;background:#505052"></div><div style="left:1481.4px;top:0;width:1.3px;height:100%;background:#121317"></div><div style="left:1505.4px;top:0;width:1.3px;height:100%;background:#121317"></div><div style="left:1529.4px;top:0;width:1.3px;height:100%;background:#121317"></div><div style="left:1552px;top:0;width:4px;height:100%;background:#141519"></div><div style="left:1553px;top:0;width:2px;height:100%;background:#505052"></div><div style="left:1577.4px;top:0;width:1.3px;height:100%;background:#121317"></div><div style="left:1601.4px;top:0;width:1.3px;height:100%;background:#121317"></div><div style="left:1625.4px;top:0;width:1.3px;height:100%;background:#121317"></div><div style="left:1648px;top:0;width:4px;height:100%;background:#141519"></div><div style="left:1649px;top:0;width:2px;height:100%;background:#505052"></div><div style="left:1673.4px;top:0;width:1.3px;height:100%;background:#121317"></div><div style="left:1697.4px;top:0;width:1.3px;height:100%;background:#121317"></div><div style="left:1721.4px;top:0;width:1.3px;height:100%;background:#121317"></div><div style="left:1744px;top:0;width:4px;height:100%;background:#141519"></div><div style="left:1745px;top:0;width:2px;height:100%;background:#505052"></div><div style="left:1769.4px;top:0;width:1.3px;height:100%;background:#121317"></div><div style="left:1793.4px;top:0;width:1.3px;height:100%;background:#121317"></div><div style="left:1817.4px;top:0;width:1.3px;height:100%;background:#121317"></div><div style="left:1840px;top:0;width:4px;height:100%;background:#141519"></div><div style="left:1841px;top:0;width:2px;height:100%;background:#505052"></div><div style="left:1865.4px;top:0;width:1.3px;height:100%;background:#121317"></div><div style="left:1889.4px;top:0;width:1.3px;height:100%;background:#121317"></div></div>
<div style="left:186px;top:887.8px;width:1726px;height:62.10000000000002px;background:#18191e"></div>
<div style="left:0;top:887.8px;width:1960px;height:62.10px"><div style="left:185.4px;top:0;width:1.3px;height:100%;background:#121317"></div><div style="left:208px;top:0;width:4px;height:100%;background:#141519"></div><div style="left:209px;top:0;width:2px;height:100%;background:#505052"></div><div style="left:233.4px;top:0;width:1.3px;height:100%;background:#121317"></div><div style="left:257.4px;top:0;width:1.3px;height:100%;background:#121317"></div><div style="left:281.4px;top:0;width:1.3px;height:100%;background:#121317"></div><div style="left:304px;top:0;width:4px;height:100%;background:#141519"></div><div style="left:305px;top:0;width:2px;height:100%;background:#505052"></div><div style="left:329.4px;top:0;width:1.3px;height:100%;background:#121317"></div><div style="left:353.4px;top:0;width:1.3px;height:100%;background:#121317"></div><div style="left:377.4px;top:0;width:1.3px;height:100%;background:#121317"></div><div style="left:400px;top:0;width:4px;height:100%;background:#141519"></div><div style="left:401px;top:0;width:2px;height:100%;background:#505052"></div><div style="left:425.4px;top:0;width:1.3px;height:100%;background:#121317"></div><div style="left:449.4px;top:0;width:1.3px;height:100%;background:#121317"></div><div style="left:473.4px;top:0;width:1.3px;height:100%;background:#121317"></div><div style="left:496px;top:0;width:4px;height:100%;background:#141519"></div><div style="left:497px;top:0;width:2px;height:100%;background:#505052"></div><div style="left:521.4px;top:0;width:1.3px;height:100%;background:#121317"></div><div style="left:545.4px;top:0;width:1.3px;height:100%;background:#121317"></div><div style="left:569.4px;top:0;width:1.3px;height:100%;background:#121317"></div><div style="left:592px;top:0;width:4px;height:100%;background:#141519"></div><div style="left:593px;top:0;width:2px;height:100%;background:#505052"></div><div style="left:617.4px;top:0;width:1.3px;height:100%;background:#121317"></div><div style="left:641.4px;top:0;width:1.3px;height:100%;background:#121317"></div><div style="left:665.4px;top:0;width:1.3px;height:100%;background:#121317"></div><div style="left:688px;top:0;width:4px;height:100%;background:#141519"></div><div style="left:689px;top:0;width:2px;height:100%;background:#505052"></div><div style="left:713.4px;top:0;width:1.3px;height:100%;background:#121317"></div><div style="left:737.4px;top:0;width:1.3px;height:100%;background:#121317"></div><div style="left:761.4px;top:0;width:1.3px;height:100%;background:#121317"></div><div style="left:784px;top:0;width:4px;height:100%;background:#141519"></div><div style="left:785px;top:0;width:2px;height:100%;background:#505052"></div><div style="left:809.4px;top:0;width:1.3px;height:100%;background:#121317"></div><div style="left:833.4px;top:0;width:1.3px;height:100%;background:#121317"></div><div style="left:857.4px;top:0;width:1.3px;height:100%;background:#121317"></div><div style="left:880px;top:0;width:4px;height:100%;background:#141519"></div><div style="left:881px;top:0;width:2px;height:100%;background:#505052"></div><div style="left:905.4px;top:0;width:1.3px;height:100%;background:#121317"></div><div style="left:929.4px;top:0;width:1.3px;height:100%;background:#121317"></div><div style="left:953.4px;top:0;width:1.3px;height:100%;background:#121317"></div><div style="left:976px;top:0;width:4px;height:100%;background:#141519"></div><div style="left:977px;top:0;width:2px;height:100%;background:#505052"></div><div style="left:1001.4px;top:0;width:1.3px;height:100%;background:#121317"></div><div style="left:1025.4px;top:0;width:1.3px;height:100%;background:#121317"></div><div style="left:1049.4px;top:0;width:1.3px;height:100%;background:#121317"></div><div style="left:1072px;top:0;width:4px;height:100%;background:#141519"></div><div style="left:1073px;top:0;width:2px;height:100%;background:#505052"></div><div style="left:1097.4px;top:0;width:1.3px;height:100%;background:#121317"></div><div style="left:1121.4px;top:0;width:1.3px;height:100%;background:#121317"></div><div style="left:1145.4px;top:0;width:1.3px;height:100%;background:#121317"></div><div style="left:1168px;top:0;width:4px;height:100%;background:#141519"></div><div style="left:1169px;top:0;width:2px;height:100%;background:#505052"></div><div style="left:1193.4px;top:0;width:1.3px;height:100%;background:#121317"></div><div style="left:1217.4px;top:0;width:1.3px;height:100%;background:#121317"></div><div style="left:1241.4px;top:0;width:1.3px;height:100%;background:#121317"></div><div style="left:1264px;top:0;width:4px;height:100%;background:#141519"></div><div style="left:1265px;top:0;width:2px;height:100%;background:#505052"></div><div style="left:1289.4px;top:0;width:1.3px;height:100%;background:#121317"></div><div style="left:1313.4px;top:0;width:1.3px;height:100%;background:#121317"></div><div style="left:1337.4px;top:0;width:1.3px;height:100%;background:#121317"></div><div style="left:1360px;top:0;width:4px;height:100%;background:#141519"></div><div style="left:1361px;top:0;width:2px;height:100%;background:#505052"></div><div style="left:1385.4px;top:0;width:1.3px;height:100%;background:#121317"></div><div style="left:1409.4px;top:0;width:1.3px;height:100%;background:#121317"></div><div style="left:1433.4px;top:0;width:1.3px;height:100%;background:#121317"></div><div style="left:1456px;top:0;width:4px;height:100%;background:#141519"></div><div style="left:1457px;top:0;width:2px;height:100%;background:#505052"></div><div style="left:1481.4px;top:0;width:1.3px;height:100%;background:#121317"></div><div style="left:1505.4px;top:0;width:1.3px;height:100%;background:#121317"></div><div style="left:1529.4px;top:0;width:1.3px;height:100%;background:#121317"></div><div style="left:1552px;top:0;width:4px;height:100%;background:#141519"></div><div style="left:1553px;top:0;width:2px;height:100%;background:#505052"></div><div style="left:1577.4px;top:0;width:1.3px;height:100%;background:#121317"></div><div style="left:1601.4px;top:0;width:1.3px;height:100%;background:#121317"></div><div style="left:1625.4px;top:0;width:1.3px;height:100%;background:#121317"></div><div style="left:1648px;top:0;width:4px;height:100%;background:#141519"></div><div style="left:1649px;top:0;width:2px;height:100%;background:#505052"></div><div style="left:1673.4px;top:0;width:1.3px;height:100%;background:#121317"></div><div style="left:1697.4px;top:0;width:1.3px;height:100%;background:#121317"></div><div style="left:1721.4px;top:0;width:1.3px;height:100%;background:#121317"></div><div style="left:1744px;top:0;width:4px;height:100%;background:#141519"></div><div style="left:1745px;top:0;width:2px;height:100%;background:#505052"></div><div style="left:1769.4px;top:0;width:1.3px;height:100%;background:#121317"></div><div style="left:1793.4px;top:0;width:1.3px;height:100%;background:#121317"></div><div style="left:1817.4px;top:0;width:1.3px;height:100%;background:#121317"></div><div style="left:1840px;top:0;width:4px;height:100%;background:#141519"></div><div style="left:1841px;top:0;width:2px;height:100%;background:#505052"></div><div style="left:1865.4px;top:0;width:1.3px;height:100%;background:#121317"></div><div style="left:1889.4px;top:0;width:1.3px;height:100%;background:#121317"></div></div>
<div style="left:186px;top:951.8px;width:1726px;height:62.10000000000002px;background:#18191e"></div>
<div style="left:0;top:951.8px;width:1960px;height:62.10px"><div style="left:185.4px;top:0;width:1.3px;height:100%;background:#121317"></div><div style="left:208px;top:0;width:4px;height:100%;background:#141519"></div><div style="left:209px;top:0;width:2px;height:100%;background:#505052"></div><div style="left:233.4px;top:0;width:1.3px;height:100%;background:#121317"></div><div style="left:257.4px;top:0;width:1.3px;height:100%;background:#121317"></div><div style="left:281.4px;top:0;width:1.3px;height:100%;background:#121317"></div><div style="left:304px;top:0;width:4px;height:100%;background:#141519"></div><div style="left:305px;top:0;width:2px;height:100%;background:#505052"></div><div style="left:329.4px;top:0;width:1.3px;height:100%;background:#121317"></div><div style="left:353.4px;top:0;width:1.3px;height:100%;background:#121317"></div><div style="left:377.4px;top:0;width:1.3px;height:100%;background:#121317"></div><div style="left:400px;top:0;width:4px;height:100%;background:#141519"></div><div style="left:401px;top:0;width:2px;height:100%;background:#505052"></div><div style="left:425.4px;top:0;width:1.3px;height:100%;background:#121317"></div><div style="left:449.4px;top:0;width:1.3px;height:100%;background:#121317"></div><div style="left:473.4px;top:0;width:1.3px;height:100%;background:#121317"></div><div style="left:496px;top:0;width:4px;height:100%;background:#141519"></div><div style="left:497px;top:0;width:2px;height:100%;background:#505052"></div><div style="left:521.4px;top:0;width:1.3px;height:100%;background:#121317"></div><div style="left:545.4px;top:0;width:1.3px;height:100%;background:#121317"></div><div style="left:569.4px;top:0;width:1.3px;height:100%;background:#121317"></div><div style="left:592px;top:0;width:4px;height:100%;background:#141519"></div><div style="left:593px;top:0;width:2px;height:100%;background:#505052"></div><div style="left:617.4px;top:0;width:1.3px;height:100%;background:#121317"></div><div style="left:641.4px;top:0;width:1.3px;height:100%;background:#121317"></div><div style="left:665.4px;top:0;width:1.3px;height:100%;background:#121317"></div><div style="left:688px;top:0;width:4px;height:100%;background:#141519"></div><div style="left:689px;top:0;width:2px;height:100%;background:#505052"></div><div style="left:713.4px;top:0;width:1.3px;height:100%;background:#121317"></div><div style="left:737.4px;top:0;width:1.3px;height:100%;background:#121317"></div><div style="left:761.4px;top:0;width:1.3px;height:100%;background:#121317"></div><div style="left:784px;top:0;width:4px;height:100%;background:#141519"></div><div style="left:785px;top:0;width:2px;height:100%;background:#505052"></div><div style="left:809.4px;top:0;width:1.3px;height:100%;background:#121317"></div><div style="left:833.4px;top:0;width:1.3px;height:100%;background:#121317"></div><div style="left:857.4px;top:0;width:1.3px;height:100%;background:#121317"></div><div style="left:880px;top:0;width:4px;height:100%;background:#141519"></div><div style="left:881px;top:0;width:2px;height:100%;background:#505052"></div><div style="left:905.4px;top:0;width:1.3px;height:100%;background:#121317"></div><div style="left:929.4px;top:0;width:1.3px;height:100%;background:#121317"></div><div style="left:953.4px;top:0;width:1.3px;height:100%;background:#121317"></div><div style="left:976px;top:0;width:4px;height:100%;background:#141519"></div><div style="left:977px;top:0;width:2px;height:100%;background:#505052"></div><div style="left:1001.4px;top:0;width:1.3px;height:100%;background:#121317"></div><div style="left:1025.4px;top:0;width:1.3px;height:100%;background:#121317"></div><div style="left:1049.4px;top:0;width:1.3px;height:100%;background:#121317"></div><div style="left:1072px;top:0;width:4px;height:100%;background:#141519"></div><div style="left:1073px;top:0;width:2px;height:100%;background:#505052"></div><div style="left:1097.4px;top:0;width:1.3px;height:100%;background:#121317"></div><div style="left:1121.4px;top:0;width:1.3px;height:100%;background:#121317"></div><div style="left:1145.4px;top:0;width:1.3px;height:100%;background:#121317"></div><div style="left:1168px;top:0;width:4px;height:100%;background:#141519"></div><div style="left:1169px;top:0;width:2px;height:100%;background:#505052"></div><div style="left:1193.4px;top:0;width:1.3px;height:100%;background:#121317"></div><div style="left:1217.4px;top:0;width:1.3px;height:100%;background:#121317"></div><div style="left:1241.4px;top:0;width:1.3px;height:100%;background:#121317"></div><div style="left:1264px;top:0;width:4px;height:100%;background:#141519"></div><div style="left:1265px;top:0;width:2px;height:100%;background:#505052"></div><div style="left:1289.4px;top:0;width:1.3px;height:100%;background:#121317"></div><div style="left:1313.4px;top:0;width:1.3px;height:100%;background:#121317"></div><div style="left:1337.4px;top:0;width:1.3px;height:100%;background:#121317"></div><div style="left:1360px;top:0;width:4px;height:100%;background:#141519"></div><div style="left:1361px;top:0;width:2px;height:100%;background:#505052"></div><div style="left:1385.4px;top:0;width:1.3px;height:100%;background:#121317"></div><div style="left:1409.4px;top:0;width:1.3px;height:100%;background:#121317"></div><div style="left:1433.4px;top:0;width:1.3px;height:100%;background:#121317"></div><div style="left:1456px;top:0;width:4px;height:100%;background:#141519"></div><div style="left:1457px;top:0;width:2px;height:100%;background:#505052"></div><div style="left:1481.4px;top:0;width:1.3px;height:100%;background:#121317"></div><div style="left:1505.4px;top:0;width:1.3px;height:100%;background:#121317"></div><div style="left:1529.4px;top:0;width:1.3px;height:100%;background:#121317"></div><div style="left:1552px;top:0;width:4px;height:100%;background:#141519"></div><div style="left:1553px;top:0;width:2px;height:100%;background:#505052"></div><div style="left:1577.4px;top:0;width:1.3px;height:100%;background:#121317"></div><div style="left:1601.4px;top:0;width:1.3px;height:100%;background:#121317"></div><div style="left:1625.4px;top:0;width:1.3px;height:100%;background:#121317"></div><div style="left:1648px;top:0;width:4px;height:100%;background:#141519"></div><div style="left:1649px;top:0;width:2px;height:100%;background:#505052"></div><div style="left:1673.4px;top:0;width:1.3px;height:100%;background:#121317"></div><div style="left:1697.4px;top:0;width:1.3px;height:100%;background:#121317"></div><div style="left:1721.4px;top:0;width:1.3px;height:100%;background:#121317"></div><div style="left:1744px;top:0;width:4px;height:100%;background:#141519"></div><div style="left:1745px;top:0;width:2px;height:100%;background:#505052"></div><div style="left:1769.4px;top:0;width:1.3px;height:100%;background:#121317"></div><div style="left:1793.4px;top:0;width:1.3px;height:100%;background:#121317"></div><div style="left:1817.4px;top:0;width:1.3px;height:100%;background:#121317"></div><div style="left:1840px;top:0;width:4px;height:100%;background:#141519"></div><div style="left:1841px;top:0;width:2px;height:100%;background:#505052"></div><div style="left:1865.4px;top:0;width:1.3px;height:100%;background:#121317"></div><div style="left:1889.4px;top:0;width:1.3px;height:100%;background:#121317"></div></div>
<div style="left:186px;top:1015.8px;width:1726px;height:31.200000000000045px;background:#18191e"></div>
<div style="left:0;top:1015.8px;width:1960px;height:31.20px"><div style="left:185.4px;top:0;width:1.3px;height:100%;background:#121317"></div><div style="left:208px;top:0;width:4px;height:100%;background:#141519"></div><div style="left:209px;top:0;width:2px;height:100%;background:#505052"></div><div style="left:233.4px;top:0;width:1.3px;height:100%;background:#121317"></div><div style="left:257.4px;top:0;width:1.3px;height:100%;background:#121317"></div><div style="left:281.4px;top:0;width:1.3px;height:100%;background:#121317"></div><div style="left:304px;top:0;width:4px;height:100%;background:#141519"></div><div style="left:305px;top:0;width:2px;height:100%;background:#505052"></div><div style="left:329.4px;top:0;width:1.3px;height:100%;background:#121317"></div><div style="left:353.4px;top:0;width:1.3px;height:100%;background:#121317"></div><div style="left:377.4px;top:0;width:1.3px;height:100%;background:#121317"></div><div style="left:400px;top:0;width:4px;height:100%;background:#141519"></div><div style="left:401px;top:0;width:2px;height:100%;background:#505052"></div><div style="left:425.4px;top:0;width:1.3px;height:100%;background:#121317"></div><div style="left:449.4px;top:0;width:1.3px;height:100%;background:#121317"></div><div style="left:473.4px;top:0;width:1.3px;height:100%;background:#121317"></div><div style="left:496px;top:0;width:4px;height:100%;background:#141519"></div><div style="left:497px;top:0;width:2px;height:100%;background:#505052"></div><div style="left:521.4px;top:0;width:1.3px;height:100%;background:#121317"></div><div style="left:545.4px;top:0;width:1.3px;height:100%;background:#121317"></div><div style="left:569.4px;top:0;width:1.3px;height:100%;background:#121317"></div><div style="left:592px;top:0;width:4px;height:100%;background:#141519"></div><div style="left:593px;top:0;width:2px;height:100%;background:#505052"></div><div style="left:617.4px;top:0;width:1.3px;height:100%;background:#121317"></div><div style="left:641.4px;top:0;width:1.3px;height:100%;background:#121317"></div><div style="left:665.4px;top:0;width:1.3px;height:100%;background:#121317"></div><div style="left:688px;top:0;width:4px;height:100%;background:#141519"></div><div style="left:689px;top:0;width:2px;height:100%;background:#505052"></div><div style="left:713.4px;top:0;width:1.3px;height:100%;background:#121317"></div><div style="left:737.4px;top:0;width:1.3px;height:100%;background:#121317"></div><div style="left:761.4px;top:0;width:1.3px;height:100%;background:#121317"></div><div style="left:784px;top:0;width:4px;height:100%;background:#141519"></div><div style="left:785px;top:0;width:2px;height:100%;background:#505052"></div><div style="left:809.4px;top:0;width:1.3px;height:100%;background:#121317"></div><div style="left:833.4px;top:0;width:1.3px;height:100%;background:#121317"></div><div style="left:857.4px;top:0;width:1.3px;height:100%;background:#121317"></div><div style="left:880px;top:0;width:4px;height:100%;background:#141519"></div><div style="left:881px;top:0;width:2px;height:100%;background:#505052"></div><div style="left:905.4px;top:0;width:1.3px;height:100%;background:#121317"></div><div style="left:929.4px;top:0;width:1.3px;height:100%;background:#121317"></div><div style="left:953.4px;top:0;width:1.3px;height:100%;background:#121317"></div><div style="left:976px;top:0;width:4px;height:100%;background:#141519"></div><div style="left:977px;top:0;width:2px;height:100%;background:#505052"></div><div style="left:1001.4px;top:0;width:1.3px;height:100%;background:#121317"></div><div style="left:1025.4px;top:0;width:1.3px;height:100%;background:#121317"></div><div style="left:1049.4px;top:0;width:1.3px;height:100%;background:#121317"></div><div style="left:1072px;top:0;width:4px;height:100%;background:#141519"></div><div style="left:1073px;top:0;width:2px;height:100%;background:#505052"></div><div style="left:1097.4px;top:0;width:1.3px;height:100%;background:#121317"></div><div style="left:1121.4px;top:0;width:1.3px;height:100%;background:#121317"></div><div style="left:1145.4px;top:0;width:1.3px;height:100%;background:#121317"></div><div style="left:1168px;top:0;width:4px;height:100%;background:#141519"></div><div style="left:1169px;top:0;width:2px;height:100%;background:#505052"></div><div style="left:1193.4px;top:0;width:1.3px;height:100%;background:#121317"></div><div style="left:1217.4px;top:0;width:1.3px;height:100%;background:#121317"></div><div style="left:1241.4px;top:0;width:1.3px;height:100%;background:#121317"></div><div style="left:1264px;top:0;width:4px;height:100%;background:#141519"></div><div style="left:1265px;top:0;width:2px;height:100%;background:#505052"></div><div style="left:1289.4px;top:0;width:1.3px;height:100%;background:#121317"></div><div style="left:1313.4px;top:0;width:1.3px;height:100%;background:#121317"></div><div style="left:1337.4px;top:0;width:1.3px;height:100%;background:#121317"></div><div style="left:1360px;top:0;width:4px;height:100%;background:#141519"></div><div style="left:1361px;top:0;width:2px;height:100%;background:#505052"></div><div style="left:1385.4px;top:0;width:1.3px;height:100%;background:#121317"></div><div style="left:1409.4px;top:0;width:1.3px;height:100%;background:#121317"></div><div style="left:1433.4px;top:0;width:1.3px;height:100%;background:#121317"></div><div style="left:1456px;top:0;width:4px;height:100%;background:#141519"></div><div style="left:1457px;top:0;width:2px;height:100%;background:#505052"></div><div style="left:1481.4px;top:0;width:1.3px;height:100%;background:#121317"></div><div style="left:1505.4px;top:0;width:1.3px;height:100%;background:#121317"></div><div style="left:1529.4px;top:0;width:1.3px;height:100%;background:#121317"></div><div style="left:1552px;top:0;width:4px;height:100%;background:#141519"></div><div style="left:1553px;top:0;width:2px;height:100%;background:#505052"></div><div style="left:1577.4px;top:0;width:1.3px;height:100%;background:#121317"></div><div style="left:1601.4px;top:0;width:1.3px;height:100%;background:#121317"></div><div style="left:1625.4px;top:0;width:1.3px;height:100%;background:#121317"></div><div style="left:1648px;top:0;width:4px;height:100%;background:#141519"></div><div style="left:1649px;top:0;width:2px;height:100%;background:#505052"></div><div style="left:1673.4px;top:0;width:1.3px;height:100%;background:#121317"></div><div style="left:1697.4px;top:0;width:1.3px;height:100%;background:#121317"></div><div style="left:1721.4px;top:0;width:1.3px;height:100%;background:#121317"></div><div style="left:1744px;top:0;width:4px;height:100%;background:#141519"></div><div style="left:1745px;top:0;width:2px;height:100%;background:#505052"></div><div style="left:1769.4px;top:0;width:1.3px;height:100%;background:#121317"></div><div style="left:1793.4px;top:0;width:1.3px;height:100%;background:#121317"></div><div style="left:1817.4px;top:0;width:1.3px;height:100%;background:#121317"></div><div style="left:1840px;top:0;width:4px;height:100%;background:#141519"></div><div style="left:1841px;top:0;width:2px;height:100%;background:#505052"></div><div style="left:1865.4px;top:0;width:1.3px;height:100%;background:#121317"></div><div style="left:1889.4px;top:0;width:1.3px;height:100%;background:#121317"></div></div>
<div style="left:186px;top:311.5px;width:312px;height:63.19999999999999px;background:linear-gradient(#4e9c74 0,#4a9670 2.5%,#4a9670 31%,#4f8f6e 34%,#4f8f6e);overflow:hidden"><div style="left:-24px;top:49.7px;width:6px;height:3.1px;background:#a9a9a9"></div><div style="left:-12px;top:48.2px;width:6px;height:3.4px;background:#a9a9a9"></div><div style="left:-12px;top:53.9px;width:12px;height:1.2px;background:#a0a6a2"></div><div style="left:-12px;top:55.1px;width:12px;height:3.0px;background:#a9a9a9"></div><div style="left:0px;top:49.6px;width:6px;height:5.5px;background:#a9a9a9"></div><div style="left:12px;top:48.2px;width:6px;height:3.4px;background:#a9a9a9"></div><div style="left:24px;top:49.7px;width:6px;height:3.1px;background:#a9a9a9"></div><div style="left:24px;top:53.9px;width:12px;height:1.2px;background:#a0a6a2"></div><div style="left:24px;top:55.1px;width:12px;height:3.0px;background:#a9a9a9"></div><div style="left:36px;top:48.2px;width:6px;height:3.4px;background:#a9a9a9"></div><div style="left:48px;top:49.6px;width:6px;height:5.5px;background:#a9a9a9"></div><div style="left:60px;top:48.2px;width:6px;height:3.4px;background:#a9a9a9"></div><div style="left:72px;top:49.7px;width:6px;height:3.1px;background:#a9a9a9"></div><div style="left:84px;top:48.2px;width:6px;height:3.4px;background:#a9a9a9"></div><div style="left:84px;top:53.9px;width:12px;height:1.2px;background:#a0a6a2"></div><div style="left:84px;top:55.1px;width:12px;height:3.0px;background:#a9a9a9"></div><div style="left:96px;top:49.6px;width:6px;height:5.5px;background:#a9a9a9"></div><div style="left:108px;top:48.2px;width:6px;height:3.4px;background:#a9a9a9"></div><div style="left:120px;top:49.7px;width:6px;height:3.1px;background:#a9a9a9"></div><div style="left:120px;top:53.9px;width:12px;height:1.2px;background:#a0a6a2"></div><div style="left:120px;top:55.1px;width:12px;height:3.0px;background:#a9a9a9"></div><div style="left:132px;top:48.2px;width:6px;height:3.4px;background:#a9a9a9"></div><div style="left:144px;top:49.6px;width:6px;height:5.5px;background:#a9a9a9"></div><div style="left:156px;top:48.2px;width:6px;height:3.4px;background:#a9a9a9"></div><div style="left:168px;top:49.7px;width:6px;height:3.1px;background:#a9a9a9"></div><div style="left:180px;top:48.2px;width:6px;height:3.4px;background:#a9a9a9"></div><div style="left:180px;top:53.9px;width:12px;height:1.2px;background:#a0a6a2"></div><div style="left:180px;top:55.1px;width:12px;height:3.0px;background:#a9a9a9"></div><div style="left:192px;top:49.6px;width:6px;height:5.5px;background:#a9a9a9"></div><div style="left:204px;top:48.2px;width:6px;height:3.4px;background:#a9a9a9"></div><div style="left:216px;top:49.7px;width:6px;height:3.1px;background:#a9a9a9"></div><div style="left:216px;top:53.9px;width:12px;height:1.2px;background:#a0a6a2"></div><div style="left:216px;top:55.1px;width:12px;height:3.0px;background:#a9a9a9"></div><div style="left:228px;top:48.2px;width:6px;height:3.4px;background:#a9a9a9"></div><div style="left:240px;top:49.6px;width:6px;height:5.5px;background:#a9a9a9"></div><div style="left:252px;top:48.2px;width:6px;height:3.4px;background:#a9a9a9"></div><div style="left:264px;top:49.7px;width:6px;height:3.1px;background:#a9a9a9"></div><div style="left:276px;top:53.9px;width:18px;height:1.2px;background:#a0a6a2"></div><div style="left:276px;top:55.1px;width:18px;height:3.0px;background:#a9a9a9"></div><div style="left:300px;top:53.9px;width:12px;height:1.2px;background:#a0a6a2"></div><div style="left:300px;top:55.1px;width:12px;height:3.0px;background:#a9a9a9"></div><div style="left:304.5px;top:50.69999999999999px;width:7.5px;height:12.5px;background:#d2d2d2;border:1px solid #efefef;border-right:none"></div><div style="left:310.6px;top:0;width:1.4px;height:100%;background:#f6f6f6"></div></div>
<div style="left:498px;top:311.5px;width:768px;height:63.19999999999999px;background:linear-gradient(#4e9c74 0,#4a9670 2.5%,#4a9670 31%,#4f8f6e 34%,#4f8f6e);overflow:hidden"><div style="left:0px;top:45.6px;width:198px;height:3.4px;background:#a9a9a9"></div><div style="left:120px;top:49.6px;width:6px;height:5.5px;background:#a9a9a9"></div><div style="left:132px;top:48.2px;width:6px;height:3.4px;background:#a9a9a9"></div><div style="left:144px;top:49.7px;width:6px;height:3.1px;background:#a9a9a9"></div><div style="left:156px;top:48.2px;width:6px;height:3.4px;background:#a9a9a9"></div><div style="left:156px;top:53.9px;width:12px;height:1.2px;background:#a0a6a2"></div><div style="left:156px;top:55.1px;width:12px;height:3.0px;background:#a9a9a9"></div><div style="left:168px;top:49.6px;width:6px;height:5.5px;background:#a9a9a9"></div><div style="left:180px;top:48.2px;width:6px;height:3.4px;background:#a9a9a9"></div><div style="left:192px;top:49.7px;width:6px;height:3.1px;background:#a9a9a9"></div><div style="left:192px;top:53.9px;width:12px;height:1.2px;background:#a0a6a2"></div><div style="left:192px;top:55.1px;width:12px;height:3.0px;background:#a9a9a9"></div><div style="left:204px;top:48.2px;width:6px;height:3.4px;background:#a9a9a9"></div><div style="left:216px;top:49.6px;width:6px;height:5.5px;background:#a9a9a9"></div><div style="left:228px;top:48.2px;width:6px;height:3.4px;background:#a9a9a9"></div><div style="left:240px;top:49.7px;width:6px;height:3.1px;background:#a9a9a9"></div><div style="left:252px;top:48.2px;width:6px;height:3.4px;background:#a9a9a9"></div><div style="left:252px;top:53.9px;width:12px;height:1.2px;background:#a0a6a2"></div><div style="left:252px;top:55.1px;width:12px;height:3.0px;background:#a9a9a9"></div><div style="left:264px;top:49.6px;width:6px;height:5.5px;background:#a9a9a9"></div><div style="left:276px;top:48.2px;width:6px;height:3.4px;background:#a9a9a9"></div><div style="left:288px;top:49.7px;width:6px;height:3.1px;background:#a9a9a9"></div><div style="left:288px;top:53.9px;width:12px;height:1.2px;background:#a0a6a2"></div><div style="left:288px;top:55.1px;width:12px;height:3.0px;background:#a9a9a9"></div><div style="left:300px;top:48.2px;width:6px;height:3.4px;background:#a9a9a9"></div><div style="left:312px;top:49.6px;width:6px;height:5.5px;background:#a9a9a9"></div><div style="left:324px;top:48.2px;width:6px;height:3.4px;background:#a9a9a9"></div><div style="left:336px;top:49.7px;width:6px;height:3.1px;background:#a9a9a9"></div><div style="left:348px;top:48.2px;width:6px;height:3.4px;background:#a9a9a9"></div><div style="left:348px;top:53.9px;width:12px;height:1.2px;background:#a0a6a2"></div><div style="left:348px;top:55.1px;width:12px;height:3.0px;background:#a9a9a9"></div><div style="left:360px;top:49.6px;width:6px;height:5.5px;background:#a9a9a9"></div><div style="left:372px;top:48.2px;width:6px;height:3.4px;background:#a9a9a9"></div><div style="left:384px;top:49.7px;width:6px;height:3.1px;background:#a9a9a9"></div><div style="left:384px;top:53.9px;width:12px;height:1.2px;background:#a0a6a2"></div><div style="left:384px;top:55.1px;width:12px;height:3.0px;background:#a9a9a9"></div><div style="left:396px;top:48.2px;width:6px;height:3.4px;background:#a9a9a9"></div><div style="left:408px;top:49.6px;width:6px;height:5.5px;background:#a9a9a9"></div><div style="left:420px;top:48.2px;width:6px;height:3.4px;background:#a9a9a9"></div><div style="left:432px;top:49.7px;width:6px;height:3.1px;background:#a9a9a9"></div><div style="left:444px;top:48.2px;width:6px;height:3.4px;background:#a9a9a9"></div><div style="left:444px;top:53.9px;width:12px;height:1.2px;background:#a0a6a2"></div><div style="left:444px;top:55.1px;width:12px;height:3.0px;background:#a9a9a9"></div><div style="left:456px;top:49.6px;width:6px;height:5.5px;background:#a9a9a9"></div><div style="left:468px;top:48.2px;width:6px;height:3.4px;background:#a9a9a9"></div><div style="left:480px;top:49.7px;width:6px;height:3.1px;background:#a9a9a9"></div><div style="left:480px;top:53.9px;width:12px;height:1.2px;background:#a0a6a2"></div><div style="left:480px;top:55.1px;width:12px;height:3.0px;background:#a9a9a9"></div><div style="left:492px;top:48.2px;width:6px;height:3.4px;background:#a9a9a9"></div><div style="left:504px;top:49.6px;width:6px;height:5.5px;background:#a9a9a9"></div><div style="left:516px;top:48.2px;width:6px;height:3.4px;background:#a9a9a9"></div><div style="left:528px;top:49.7px;width:6px;height:3.1px;background:#a9a9a9"></div><div style="left:540px;top:48.2px;width:6px;height:3.4px;background:#a9a9a9"></div><div style="left:540px;top:53.9px;width:12px;height:1.2px;background:#a0a6a2"></div><div style="left:540px;top:55.1px;width:12px;height:3.0px;background:#a9a9a9"></div><div style="left:552px;top:49.6px;width:6px;height:5.5px;background:#a9a9a9"></div><div style="left:564px;top:48.2px;width:6px;height:3.4px;background:#a9a9a9"></div><div style="left:576px;top:49.7px;width:6px;height:3.1px;background:#a9a9a9"></div><div style="left:576px;top:53.9px;width:12px;height:1.2px;background:#a0a6a2"></div><div style="left:576px;top:55.1px;width:12px;height:3.0px;background:#a9a9a9"></div><div style="left:588px;top:48.2px;width:6px;height:3.4px;background:#a9a9a9"></div><div style="left:600px;top:49.6px;width:6px;height:5.5px;background:#a9a9a9"></div><div style="left:612px;top:48.2px;width:6px;height:3.4px;background:#a9a9a9"></div><div style="left:624px;top:49.7px;width:6px;height:3.1px;background:#a9a9a9"></div><div style="left:636px;top:48.2px;width:6px;height:3.4px;background:#a9a9a9"></div><div style="left:636px;top:53.9px;width:12px;height:1.2px;background:#a0a6a2"></div><div style="left:636px;top:55.1px;width:12px;height:3.0px;background:#a9a9a9"></div><div style="left:648px;top:49.6px;width:6px;height:5.5px;background:#a9a9a9"></div><div style="left:660px;top:48.2px;width:6px;height:3.4px;background:#a9a9a9"></div><div style="left:672px;top:49.7px;width:6px;height:3.1px;background:#a9a9a9"></div><div style="left:672px;top:53.9px;width:12px;height:1.2px;background:#a0a6a2"></div><div style="left:672px;top:55.1px;width:12px;height:3.0px;background:#a9a9a9"></div><div style="left:684px;top:48.2px;width:6px;height:3.4px;background:#a9a9a9"></div><div style="left:696px;top:49.6px;width:6px;height:5.5px;background:#a9a9a9"></div><div style="left:708px;top:48.2px;width:6px;height:3.4px;background:#a9a9a9"></div><div style="left:720px;top:49.7px;width:6px;height:3.1px;background:#a9a9a9"></div><div style="left:732px;top:48.2px;width:6px;height:3.4px;background:#a9a9a9"></div><div style="left:732px;top:53.9px;width:12px;height:1.2px;background:#a0a6a2"></div><div style="left:732px;top:55.1px;width:12px;height:3.0px;background:#a9a9a9"></div><div style="left:744px;top:49.6px;width:6px;height:5.5px;background:#a9a9a9"></div><div style="left:756px;top:48.2px;width:6px;height:3.4px;background:#a9a9a9"></div><span style="left:2px;top:2.17px;font-size:12.2px;color:#dcdcdc;transform:scaleX(0.9)">track3-17</span><div style="left:0;top:50.69999999999999px;width:7.5px;height:12.5px;background:#d2d2d2;border:1px solid #efefef;border-left:none"></div><div style="left:760.5px;top:50.69999999999999px;width:7.5px;height:12.5px;background:#d2d2d2;border:1px solid #efefef;border-right:none"></div><div style="left:0;top:0;width:1.4px;height:100%;background:#f6f6f6"></div><div style="left:766.6px;top:0;width:1.4px;height:100%;background:#f6f6f6"></div></div>
<div style="left:1266px;top:311.5px;width:646px;height:63.19999999999999px;background:linear-gradient(#4e9c74 0,#4a9670 2.5%,#4a9670 31%,#4f8f6e 34%,#4f8f6e);overflow:hidden"><div style="left:12px;top:48.2px;width:6px;height:3.4px;background:#a9a9a9"></div><div style="left:24px;top:49.7px;width:6px;height:3.1px;background:#a9a9a9"></div><div style="left:36px;top:48.2px;width:6px;height:3.4px;background:#a9a9a9"></div><div style="left:48px;top:49.7px;width:6px;height:3.1px;background:#a9a9a9"></div><div style="left:60px;top:48.2px;width:6px;height:3.4px;background:#a9a9a9"></div><div style="left:72px;top:49.7px;width:6px;height:3.1px;background:#a9a9a9"></div><div style="left:84px;top:48.2px;width:6px;height:3.4px;background:#a9a9a9"></div><div style="left:96px;top:49.7px;width:6px;height:3.1px;background:#a9a9a9"></div><div style="left:96px;top:53.9px;width:12px;height:1.2px;background:#a0a6a2"></div><div style="left:96px;top:55.1px;width:12px;height:3.0px;background:#a9a9a9"></div><div style="left:108px;top:48.2px;width:6px;height:3.4px;background:#a9a9a9"></div><div style="left:120px;top:49.6px;width:6px;height:5.5px;background:#a9a9a9"></div><div style="left:132px;top:48.2px;width:6px;height:3.4px;background:#a9a9a9"></div><div style="left:144px;top:49.7px;width:6px;height:3.1px;background:#a9a9a9"></div><div style="left:156px;top:48.2px;width:6px;height:3.4px;background:#a9a9a9"></div><div style="left:156px;top:53.9px;width:12px;height:1.2px;background:#a0a6a2"></div><div style="left:156px;top:55.1px;width:12px;height:3.0px;background:#a9a9a9"></div><div style="left:168px;top:49.6px;width:6px;height:5.5px;background:#a9a9a9"></div><div style="left:180px;top:48.2px;width:6px;height:3.4px;background:#a9a9a9"></div><div style="left:192px;top:49.7px;width:6px;height:3.1px;background:#a9a9a9"></div><div style="left:192px;top:53.9px;width:12px;height:1.2px;background:#a0a6a2"></div><div style="left:192px;top:55.1px;width:12px;height:3.0px;background:#a9a9a9"></div><div style="left:204px;top:48.2px;width:6px;height:3.4px;background:#a9a9a9"></div><div style="left:216px;top:49.6px;width:6px;height:5.5px;background:#a9a9a9"></div><div style="left:228px;top:48.2px;width:6px;height:3.4px;background:#a9a9a9"></div><div style="left:240px;top:49.7px;width:6px;height:3.1px;background:#a9a9a9"></div><div style="left:252px;top:48.2px;width:6px;height:3.4px;background:#a9a9a9"></div><div style="left:252px;top:53.9px;width:12px;height:1.2px;background:#a0a6a2"></div><div style="left:252px;top:55.1px;width:12px;height:3.0px;background:#a9a9a9"></div><div style="left:264px;top:49.6px;width:6px;height:5.5px;background:#a9a9a9"></div><div style="left:276px;top:48.2px;width:6px;height:3.4px;background:#a9a9a9"></div><div style="left:288px;top:49.7px;width:6px;height:3.1px;background:#a9a9a9"></div><div style="left:288px;top:53.9px;width:12px;height:1.2px;background:#a0a6a2"></div><div style="left:288px;top:55.1px;width:12px;height:3.0px;background:#a9a9a9"></div><div style="left:300px;top:48.2px;width:6px;height:3.4px;background:#a9a9a9"></div><div style="left:312px;top:49.6px;width:6px;height:5.5px;background:#a9a9a9"></div><div style="left:324px;top:48.2px;width:6px;height:3.4px;background:#a9a9a9"></div><div style="left:336px;top:49.7px;width:6px;height:3.1px;background:#a9a9a9"></div><div style="left:348px;top:48.2px;width:6px;height:3.4px;background:#a9a9a9"></div><div style="left:348px;top:53.9px;width:12px;height:1.2px;background:#a0a6a2"></div><div style="left:348px;top:55.1px;width:12px;height:3.0px;background:#a9a9a9"></div><div style="left:360px;top:49.6px;width:6px;height:5.5px;background:#a9a9a9"></div><div style="left:372px;top:48.2px;width:6px;height:3.4px;background:#a9a9a9"></div><div style="left:384px;top:49.7px;width:6px;height:3.1px;background:#a9a9a9"></div><div style="left:384px;top:53.9px;width:12px;height:1.2px;background:#a0a6a2"></div><div style="left:384px;top:55.1px;width:12px;height:3.0px;background:#a9a9a9"></div><div style="left:396px;top:48.2px;width:6px;height:3.4px;background:#a9a9a9"></div><div style="left:408px;top:49.6px;width:6px;height:5.5px;background:#a9a9a9"></div><div style="left:420px;top:48.2px;width:6px;height:3.4px;background:#a9a9a9"></div><div style="left:432px;top:49.7px;width:6px;height:3.1px;background:#a9a9a9"></div><div style="left:444px;top:48.2px;width:6px;height:3.4px;background:#a9a9a9"></div><div style="left:444px;top:53.9px;width:12px;height:1.2px;background:#a0a6a2"></div><div style="left:444px;top:55.1px;width:12px;height:3.0px;background:#a9a9a9"></div><div style="left:456px;top:49.6px;width:6px;height:5.5px;background:#a9a9a9"></div><div style="left:468px;top:48.2px;width:6px;height:3.4px;background:#a9a9a9"></div><div style="left:480px;top:49.7px;width:6px;height:3.1px;background:#a9a9a9"></div><div style="left:480px;top:53.9px;width:12px;height:1.2px;background:#a0a6a2"></div><div style="left:480px;top:55.1px;width:12px;height:3.0px;background:#a9a9a9"></div><div style="left:492px;top:48.2px;width:6px;height:3.4px;background:#a9a9a9"></div><div style="left:504px;top:49.6px;width:6px;height:5.5px;background:#a9a9a9"></div><div style="left:516px;top:48.2px;width:6px;height:3.4px;background:#a9a9a9"></div><div style="left:528px;top:49.7px;width:6px;height:3.1px;background:#a9a9a9"></div><div style="left:540px;top:48.2px;width:6px;height:3.4px;background:#a9a9a9"></div><div style="left:540px;top:53.9px;width:12px;height:1.2px;background:#a0a6a2"></div><div style="left:540px;top:55.1px;width:12px;height:3.0px;background:#a9a9a9"></div><div style="left:552px;top:49.6px;width:6px;height:5.5px;background:#a9a9a9"></div><div style="left:564px;top:48.2px;width:6px;height:3.4px;background:#a9a9a9"></div><div style="left:576px;top:49.7px;width:6px;height:3.1px;background:#a9a9a9"></div><div style="left:576px;top:53.9px;width:12px;height:1.2px;background:#a0a6a2"></div><div style="left:576px;top:55.1px;width:12px;height:3.0px;background:#a9a9a9"></div><div style="left:588px;top:48.2px;width:6px;height:3.4px;background:#a9a9a9"></div><div style="left:600px;top:49.6px;width:6px;height:5.5px;background:#a9a9a9"></div><div style="left:612px;top:48.2px;width:6px;height:3.4px;background:#a9a9a9"></div><div style="left:624px;top:49.7px;width:6px;height:3.1px;background:#a9a9a9"></div><div style="left:636px;top:48.2px;width:6px;height:3.4px;background:#a9a9a9"></div><div style="left:636px;top:53.9px;width:12px;height:1.2px;background:#a0a6a2"></div><div style="left:636px;top:55.1px;width:12px;height:3.0px;background:#a9a9a9"></div><span style="left:2px;top:2.17px;font-size:12.2px;color:#dcdcdc;transform:scaleX(0.9)">track3-18</span><div style="left:0;top:50.69999999999999px;width:7.5px;height:12.5px;background:#d2d2d2;border:1px solid #efefef;border-left:none"></div><div style="left:0;top:0;width:1.4px;height:100%;background:#f6f6f6"></div></div>
<div style="left:186px;top:503.5px;width:312px;height:63.200000000000045px;background:linear-gradient(#7b4fa0 0,#754c99 2.5%,#754c99 30%,#724a92 34%,#724a92);overflow:hidden"><div style="left:0px;top:48.0px;width:30px;height:3.1px;background:#a9a9a9"></div><div style="left:0px;top:52.2px;width:30px;height:3.1px;background:#a9a9a9"></div><div style="left:0px;top:56.4px;width:30px;height:3.1px;background:#a9a9a9"></div><div style="left:48px;top:43.0px;width:30px;height:3.1px;background:#a9a9a9"></div><div style="left:48px;top:47.2px;width:30px;height:3.1px;background:#a9a9a9"></div><div style="left:48px;top:51.4px;width:30px;height:3.1px;background:#a9a9a9"></div><div style="left:84px;top:43.0px;width:30px;height:3.1px;background:#a9a9a9"></div><div style="left:84px;top:47.2px;width:30px;height:3.1px;background:#a9a9a9"></div><div style="left:84px;top:51.4px;width:30px;height:3.1px;background:#a9a9a9"></div><div style="left:120px;top:46.0px;width:30px;height:3.1px;background:#a9a9a9"></div><div style="left:120px;top:50.2px;width:30px;height:3.1px;background:#a9a9a9"></div><div style="left:120px;top:54.4px;width:30px;height:3.1px;background:#a9a9a9"></div><div style="left:156px;top:46.0px;width:30px;height:3.1px;background:#a9a9a9"></div><div style="left:156px;top:50.2px;width:30px;height:3.1px;background:#a9a9a9"></div><div style="left:156px;top:54.4px;width:30px;height:3.1px;background:#a9a9a9"></div><div style="left:192px;top:46.0px;width:30px;height:3.1px;background:#a9a9a9"></div><div style="left:192px;top:50.2px;width:30px;height:3.1px;background:#a9a9a9"></div><div style="left:192px;top:54.4px;width:30px;height:3.1px;background:#a9a9a9"></div><div style="left:240px;top:42.0px;width:30px;height:3.1px;background:#a9a9a9"></div><div style="left:240px;top:46.2px;width:30px;height:3.1px;background:#a9a9a9"></div><div style="left:240px;top:50.4px;width:30px;height:3.1px;background:#a9a9a9"></div><div style="left:276px;top:42.0px;width:30px;height:3.1px;background:#a9a9a9"></div><div style="left:276px;top:46.2px;width:30px;height:3.1px;background:#a9a9a9"></div><div style="left:276px;top:50.4px;width:30px;height:3.1px;background:#a9a9a9"></div><div style="left:304.5px;top:50.700000000000045px;width:7.5px;height:12.5px;background:#d2d2d2;border:1px solid #efefef;border-right:none"></div><div style="left:310.6px;top:0;width:1.4px;height:100%;background:#f6f6f6"></div></div>
<div style="left:618px;top:503.5px;width:72px;height:63.200000000000045px;background:linear-gradient(#7b4fa0 0,#754c99 2.5%,#754c99 30%,#724a92 34%,#724a92);overflow:hidden"><div style="left:1.5px;top:41.0px;width:29.5px;height:3.1px;background:#a9a9a9"></div><div style="left:1.5px;top:45.2px;width:29.5px;height:3.1px;background:#a9a9a9"></div><div style="left:1.5px;top:49.4px;width:29.5px;height:3.1px;background:#a9a9a9"></div><div style="left:36px;top:41.0px;width:30.5px;height:3.1px;background:#a9a9a9"></div><div style="left:36px;top:45.2px;width:30.5px;height:3.1px;background:#a9a9a9"></div><div style="left:36px;top:49.4px;width:30.5px;height:3.1px;background:#a9a9a9"></div><span style="left:2px;top:2.17px;font-size:12.2px;color:#dcdcdc;transform:scaleX(0.9)">track1-1</span><div style="left:0;top:50.700000000000045px;width:7.5px;height:12.5px;background:#d2d2d2;border:1px solid #efefef;border-left:none"></div><div style="left:64.5px;top:50.700000000000045px;width:7.5px;height:12.5px;background:#d2d2d2;border:1px solid #efefef;border-right:none"></div><div style="left:0;top:0;width:1.4px;height:100%;background:#f6f6f6"></div><div style="left:70.6px;top:0;width:1.4px;height:100%;background:#f6f6f6"></div></div>
<div style="left:810px;top:503.5px;width:72px;height:63.200000000000045px;background:linear-gradient(#7b4fa0 0,#754c99 2.5%,#754c99 30%,#724a92 34%,#724a92);overflow:hidden"><div style="left:1.5px;top:41.0px;width:29.5px;height:3.1px;background:#a9a9a9"></div><div style="left:1.5px;top:45.2px;width:29.5px;height:3.1px;background:#a9a9a9"></div><div style="left:1.5px;top:49.4px;width:29.5px;height:3.1px;background:#a9a9a9"></div><div style="left:36px;top:41.0px;width:30.5px;height:3.1px;background:#a9a9a9"></div><div style="left:36px;top:45.2px;width:30.5px;height:3.1px;background:#a9a9a9"></div><div style="left:36px;top:49.4px;width:30.5px;height:3.1px;background:#a9a9a9"></div><span style="left:2px;top:2.17px;font-size:12.2px;color:#dcdcdc;transform:scaleX(0.9)">track1-1</span><div style="left:0;top:50.700000000000045px;width:7.5px;height:12.5px;background:#d2d2d2;border:1px solid #efefef;border-left:none"></div><div style="left:64.5px;top:50.700000000000045px;width:7.5px;height:12.5px;background:#d2d2d2;border:1px solid #efefef;border-right:none"></div><div style="left:0;top:0;width:1.4px;height:100%;background:#f6f6f6"></div><div style="left:70.6px;top:0;width:1.4px;height:100%;background:#f6f6f6"></div></div>
<div style="left:1002px;top:503.5px;width:72px;height:63.200000000000045px;background:linear-gradient(#7b4fa0 0,#754c99 2.5%,#754c99 30%,#724a92 34%,#724a92);overflow:hidden"><div style="left:1.5px;top:41.0px;width:29.5px;height:3.1px;background:#a9a9a9"></div><div style="left:1.5px;top:45.2px;width:29.5px;height:3.1px;background:#a9a9a9"></div><div style="left:1.5px;top:49.4px;width:29.5px;height:3.1px;background:#a9a9a9"></div><div style="left:36px;top:41.0px;width:30.5px;height:3.1px;background:#a9a9a9"></div><div style="left:36px;top:45.2px;width:30.5px;height:3.1px;background:#a9a9a9"></div><div style="left:36px;top:49.4px;width:30.5px;height:3.1px;background:#a9a9a9"></div><span style="left:2px;top:2.17px;font-size:12.2px;color:#dcdcdc;transform:scaleX(0.9)">track1-1</span><div style="left:0;top:50.700000000000045px;width:7.5px;height:12.5px;background:#d2d2d2;border:1px solid #efefef;border-left:none"></div><div style="left:64.5px;top:50.700000000000045px;width:7.5px;height:12.5px;background:#d2d2d2;border:1px solid #efefef;border-right:none"></div><div style="left:0;top:0;width:1.4px;height:100%;background:#f6f6f6"></div><div style="left:70.6px;top:0;width:1.4px;height:100%;background:#f6f6f6"></div></div>
<div style="left:1386px;top:503.5px;width:72px;height:63.200000000000045px;background:linear-gradient(#7b4fa0 0,#754c99 2.5%,#754c99 30%,#724a92 34%,#724a92);overflow:hidden"><div style="left:1.5px;top:41.0px;width:29.5px;height:3.1px;background:#a9a9a9"></div><div style="left:1.5px;top:45.2px;width:29.5px;height:3.1px;background:#a9a9a9"></div><div style="left:1.5px;top:49.4px;width:29.5px;height:3.1px;background:#a9a9a9"></div><div style="left:36px;top:41.0px;width:30.5px;height:3.1px;background:#a9a9a9"></div><div style="left:36px;top:45.2px;width:30.5px;height:3.1px;background:#a9a9a9"></div><div style="left:36px;top:49.4px;width:30.5px;height:3.1px;background:#a9a9a9"></div><span style="left:2px;top:2.17px;font-size:12.2px;color:#dcdcdc;transform:scaleX(0.9)">track1-1</span><div style="left:0;top:50.700000000000045px;width:7.5px;height:12.5px;background:#d2d2d2;border:1px solid #efefef;border-left:none"></div><div style="left:64.5px;top:50.700000000000045px;width:7.5px;height:12.5px;background:#d2d2d2;border:1px solid #efefef;border-right:none"></div><div style="left:0;top:0;width:1.4px;height:100%;background:#f6f6f6"></div><div style="left:70.6px;top:0;width:1.4px;height:100%;background:#f6f6f6"></div></div>
<div style="left:1578px;top:503.5px;width:72px;height:63.200000000000045px;background:linear-gradient(#7b4fa0 0,#754c99 2.5%,#754c99 30%,#724a92 34%,#724a92);overflow:hidden"><div style="left:1.5px;top:41.0px;width:29.5px;height:3.1px;background:#a9a9a9"></div><div style="left:1.5px;top:45.2px;width:29.5px;height:3.1px;background:#a9a9a9"></div><div style="left:1.5px;top:49.4px;width:29.5px;height:3.1px;background:#a9a9a9"></div><div style="left:36px;top:41.0px;width:30.5px;height:3.1px;background:#a9a9a9"></div><div style="left:36px;top:45.2px;width:30.5px;height:3.1px;background:#a9a9a9"></div><div style="left:36px;top:49.4px;width:30.5px;height:3.1px;background:#a9a9a9"></div><span style="left:2px;top:2.17px;font-size:12.2px;color:#dcdcdc;transform:scaleX(0.9)">track1-1</span><div style="left:0;top:50.700000000000045px;width:7.5px;height:12.5px;background:#d2d2d2;border:1px solid #efefef;border-left:none"></div><div style="left:64.5px;top:50.700000000000045px;width:7.5px;height:12.5px;background:#d2d2d2;border:1px solid #efefef;border-right:none"></div><div style="left:0;top:0;width:1.4px;height:100%;background:#f6f6f6"></div><div style="left:70.6px;top:0;width:1.4px;height:100%;background:#f6f6f6"></div></div>
<div style="left:1770px;top:503.5px;width:72px;height:63.200000000000045px;background:linear-gradient(#7b4fa0 0,#754c99 2.5%,#754c99 30%,#724a92 34%,#724a92);overflow:hidden"><div style="left:1.5px;top:41.0px;width:29.5px;height:3.1px;background:#a9a9a9"></div><div style="left:1.5px;top:45.2px;width:29.5px;height:3.1px;background:#a9a9a9"></div><div style="left:1.5px;top:49.4px;width:29.5px;height:3.1px;background:#a9a9a9"></div><div style="left:36px;top:41.0px;width:30.5px;height:3.1px;background:#a9a9a9"></div><div style="left:36px;top:45.2px;width:30.5px;height:3.1px;background:#a9a9a9"></div><div style="left:36px;top:49.4px;width:30.5px;height:3.1px;background:#a9a9a9"></div><span style="left:2px;top:2.17px;font-size:12.2px;color:#dcdcdc;transform:scaleX(0.9)">track1-1</span><div style="left:0;top:50.700000000000045px;width:7.5px;height:12.5px;background:#d2d2d2;border:1px solid #efefef;border-left:none"></div><div style="left:64.5px;top:50.700000000000045px;width:7.5px;height:12.5px;background:#d2d2d2;border:1px solid #efefef;border-right:none"></div><div style="left:0;top:0;width:1.4px;height:100%;background:#f6f6f6"></div><div style="left:70.6px;top:0;width:1.4px;height:100%;background:#f6f6f6"></div></div>
<div style="left:1170px;top:503.5px;width:96px;height:63.200000000000045px;background:linear-gradient(#7b4fa0 0,#754c99 2.5%,#754c99 30%,#724a92 34%,#724a92);overflow:hidden"><div style="left:1.5px;top:46.0px;width:5px;height:3.1px;background:#a9a9a9"></div><div style="left:24px;top:41.0px;width:30px;height:3.1px;background:#a9a9a9"></div><div style="left:24px;top:45.2px;width:30px;height:3.1px;background:#a9a9a9"></div><div style="left:24px;top:49.4px;width:30px;height:3.1px;background:#a9a9a9"></div><div style="left:60px;top:41.0px;width:30px;height:3.1px;background:#a9a9a9"></div><div style="left:60px;top:45.2px;width:30px;height:3.1px;background:#a9a9a9"></div><div style="left:60px;top:49.4px;width:30px;height:3.1px;background:#a9a9a9"></div><span style="left:2px;top:2.17px;font-size:12.2px;color:#dcdcdc;transform:scaleX(0.9)">track1-1</span><div style="left:0;top:50.700000000000045px;width:7.5px;height:12.5px;background:#d2d2d2;border:1px solid #efefef;border-left:none"></div><div style="left:88.5px;top:50.700000000000045px;width:7.5px;height:12.5px;background:#d2d2d2;border:1px solid #efefef;border-right:none"></div><div style="left:0;top:0;width:1.4px;height:100%;background:#f6f6f6"></div><div style="left:94.6px;top:0;width:1.4px;height:100%;background:#f6f6f6"></div></div>
<div style="left:498px;top:567.5px;width:120px;height:63.200000000000045px;background:linear-gradient(#9e4e9a 0,#984b95 2.5%,#984b95 30%,#924b8b 34%,#934a8c);overflow:hidden"><div style="left:1.5px;top:43.3px;width:114px;height:1.2px;background:#a87aa6"></div><div style="left:1.5px;top:44.5px;width:114px;height:2.6px;background:#a9a9a9"></div><div style="left:1.5px;top:47.1px;width:114px;height:1.2px;background:#a87aa6"></div><span style="left:2px;top:2.17px;font-size:12.2px;color:#dcdcdc;transform:scaleX(0.9)">track1-3</span><div style="left:0;top:50.700000000000045px;width:7.5px;height:12.5px;background:#d2d2d2;border:1px solid #efefef;border-left:none"></div><div style="left:112.5px;top:50.700000000000045px;width:7.5px;height:12.5px;background:#d2d2d2;border:1px solid #efefef;border-right:none"></div><div style="left:0;top:0;width:1.4px;height:100%;background:#f6f6f6"></div><div style="left:118.6px;top:0;width:1.4px;height:100%;background:#f6f6f6"></div></div>
<div style="left:690px;top:567.5px;width:120px;height:63.200000000000045px;background:linear-gradient(#9e4e9a 0,#984b95 2.5%,#984b95 30%,#924b8b 34%,#934a8c);overflow:hidden"><div style="left:1.5px;top:50.5px;width:114px;height:1.2px;background:#a87aa6"></div><div style="left:1.5px;top:51.7px;width:114px;height:2.6px;background:#a9a9a9"></div><div style="left:1.5px;top:54.300000000000004px;width:114px;height:1.2px;background:#a87aa6"></div><span style="left:2px;top:2.17px;font-size:12.2px;color:#dcdcdc;transform:scaleX(0.9)">track1-3</span><div style="left:0;top:50.700000000000045px;width:7.5px;height:12.5px;background:#d2d2d2;border:1px solid #efefef;border-left:none"></div><div style="left:112.5px;top:50.700000000000045px;width:7.5px;height:12.5px;background:#d2d2d2;border:1px solid #efefef;border-right:none"></div><div style="left:0;top:0;width:1.4px;height:100%;background:#f6f6f6"></div><div style="left:118.6px;top:0;width:1.4px;height:100%;background:#f6f6f6"></div></div>
<div style="left:882px;top:567.5px;width:120px;height:63.200000000000045px;background:linear-gradient(#9e4e9a 0,#984b95 2.5%,#984b95 30%,#924b8b 34%,#934a8c);overflow:hidden"><div style="left:1.5px;top:50.5px;width:114px;height:1.2px;background:#a87aa6"></div><div style="left:1.5px;top:51.7px;width:114px;height:2.6px;background:#a9a9a9"></div><div style="left:1.5px;top:54.300000000000004px;width:114px;height:1.2px;background:#a87aa6"></div><span style="left:2px;top:2.17px;font-size:12.2px;color:#dcdcdc;transform:scaleX(0.9)">track1-3</span><div style="left:0;top:50.700000000000045px;width:7.5px;height:12.5px;background:#d2d2d2;border:1px solid #efefef;border-left:none"></div><div style="left:112.5px;top:50.700000000000045px;width:7.5px;height:12.5px;background:#d2d2d2;border:1px solid #efefef;border-right:none"></div><div style="left:0;top:0;width:1.4px;height:100%;background:#f6f6f6"></div><div style="left:118.6px;top:0;width:1.4px;height:100%;background:#f6f6f6"></div></div>
<div style="left:1074px;top:567.5px;width:120px;height:63.200000000000045px;background:linear-gradient(#9e4e9a 0,#984b95 2.5%,#984b95 30%,#924b8b 34%,#934a8c);overflow:hidden"><div style="left:1.5px;top:50.5px;width:114px;height:1.2px;background:#a87aa6"></div><div style="left:1.5px;top:51.7px;width:114px;height:2.6px;background:#a9a9a9"></div><div style="left:1.5px;top:54.300000000000004px;width:114px;height:1.2px;background:#a87aa6"></div><span style="left:2px;top:2.17px;font-size:12.2px;color:#dcdcdc;transform:scaleX(0.9)">track1-3</span><div style="left:0;top:50.700000000000045px;width:7.5px;height:12.5px;background:#d2d2d2;border:1px solid #efefef;border-left:none"></div><div style="left:112.5px;top:50.700000000000045px;width:7.5px;height:12.5px;background:#d2d2d2;border:1px solid #efefef;border-right:none"></div><div style="left:0;top:0;width:1.4px;height:100%;background:#f6f6f6"></div><div style="left:118.6px;top:0;width:1.4px;height:100%;background:#f6f6f6"></div></div>
<div style="left:1266px;top:567.5px;width:120px;height:63.200000000000045px;background:linear-gradient(#9e4e9a 0,#984b95 2.5%,#984b95 30%,#924b8b 34%,#934a8c);overflow:hidden"><div style="left:1.5px;top:43.3px;width:114px;height:1.2px;background:#a87aa6"></div><div style="left:1.5px;top:44.5px;width:114px;height:2.6px;background:#a9a9a9"></div><div style="left:1.5px;top:47.1px;width:114px;height:1.2px;background:#a87aa6"></div><span style="left:2px;top:2.17px;font-size:12.2px;color:#dcdcdc;transform:scaleX(0.9)">track1-3</span><div style="left:0;top:50.700000000000045px;width:7.5px;height:12.5px;background:#d2d2d2;border:1px solid #efefef;border-left:none"></div><div style="left:112.5px;top:50.700000000000045px;width:7.5px;height:12.5px;background:#d2d2d2;border:1px solid #efefef;border-right:none"></div><div style="left:0;top:0;width:1.4px;height:100%;background:#f6f6f6"></div><div style="left:118.6px;top:0;width:1.4px;height:100%;background:#f6f6f6"></div></div>
<div style="left:1458px;top:567.5px;width:120px;height:63.200000000000045px;background:linear-gradient(#9e4e9a 0,#984b95 2.5%,#984b95 30%,#924b8b 34%,#934a8c);overflow:hidden"><div style="left:1.5px;top:50.5px;width:114px;height:1.2px;background:#a87aa6"></div><div style="left:1.5px;top:51.7px;width:114px;height:2.6px;background:#a9a9a9"></div><div style="left:1.5px;top:54.300000000000004px;width:114px;height:1.2px;background:#a87aa6"></div><span style="left:2px;top:2.17px;font-size:12.2px;color:#dcdcdc;transform:scaleX(0.9)">track1-3</span><div style="left:0;top:50.700000000000045px;width:7.5px;height:12.5px;background:#d2d2d2;border:1px solid #efefef;border-left:none"></div><div style="left:112.5px;top:50.700000000000045px;width:7.5px;height:12.5px;background:#d2d2d2;border:1px solid #efefef;border-right:none"></div><div style="left:0;top:0;width:1.4px;height:100%;background:#f6f6f6"></div><div style="left:118.6px;top:0;width:1.4px;height:100%;background:#f6f6f6"></div></div>
<div style="left:1650px;top:567.5px;width:120px;height:63.200000000000045px;background:linear-gradient(#9e4e9a 0,#984b95 2.5%,#984b95 30%,#924b8b 34%,#934a8c);overflow:hidden"><div style="left:1.5px;top:50.5px;width:114px;height:1.2px;background:#a87aa6"></div><div style="left:1.5px;top:51.7px;width:114px;height:2.6px;background:#a9a9a9"></div><div style="left:1.5px;top:54.300000000000004px;width:114px;height:1.2px;background:#a87aa6"></div><span style="left:2px;top:2.17px;font-size:12.2px;color:#dcdcdc;transform:scaleX(0.9)">track1-3</span><div style="left:0;top:50.700000000000045px;width:7.5px;height:12.5px;background:#d2d2d2;border:1px solid #efefef;border-left:none"></div><div style="left:112.5px;top:50.700000000000045px;width:7.5px;height:12.5px;background:#d2d2d2;border:1px solid #efefef;border-right:none"></div><div style="left:0;top:0;width:1.4px;height:100%;background:#f6f6f6"></div><div style="left:118.6px;top:0;width:1.4px;height:100%;background:#f6f6f6"></div></div>
<div style="left:1842px;top:567.5px;width:70px;height:63.200000000000045px;background:linear-gradient(#9e4e9a 0,#984b95 2.5%,#984b95 30%,#924b8b 34%,#934a8c);overflow:hidden"><div style="left:1.5px;top:50.5px;width:64px;height:1.2px;background:#a87aa6"></div><div style="left:1.5px;top:51.7px;width:64px;height:2.6px;background:#a9a9a9"></div><div style="left:1.5px;top:54.300000000000004px;width:64px;height:1.2px;background:#a87aa6"></div><span style="left:2px;top:2.17px;font-size:12.2px;color:#dcdcdc;transform:scaleX(0.9)">track1-3</span><div style="left:0;top:50.700000000000045px;width:7.5px;height:12.5px;background:#d2d2d2;border:1px solid #efefef;border-left:none"></div><div style="left:0;top:0;width:1.4px;height:100%;background:#f6f6f6"></div></div>
<div style="left:594px;top:695.5px;width:96px;height:63.200000000000045px;background:linear-gradient(#4e9c74 0,#4a9670 2.5%,#4a9670 31%,#4f8f6e 34%,#4f8f6e);overflow:hidden"><div style="left:24px;top:47.5px;width:6px;height:3.6px;background:#a9a9a9"></div><div style="left:36px;top:47.5px;width:6px;height:3.6px;background:#a9a9a9"></div><div style="left:48px;top:47.5px;width:6px;height:3.6px;background:#a9a9a9"></div><div style="left:72px;top:47.5px;width:6px;height:3.6px;background:#a9a9a9"></div><div style="left:84px;top:47.5px;width:6px;height:3.6px;background:#a9a9a9"></div><span style="left:2px;top:2.17px;font-size:12.2px;color:#dcdcdc;transform:scaleX(0.9)">track1-7</span><div style="left:0;top:50.700000000000045px;width:7.5px;height:12.5px;background:#d2d2d2;border:1px solid #efefef;border-left:none"></div><div style="left:88.5px;top:50.700000000000045px;width:7.5px;height:12.5px;background:#d2d2d2;border:1px solid #efefef;border-right:none"></div><div style="left:0;top:0;width:1.4px;height:100%;background:#f6f6f6"></div><div style="left:94.6px;top:0;width:1.4px;height:100%;background:#f6f6f6"></div></div>
<div style="left:786px;top:695.5px;width:96px;height:63.200000000000045px;background:linear-gradient(#4e9c74 0,#4a9670 2.5%,#4a9670 31%,#4f8f6e 34%,#4f8f6e);overflow:hidden"><div style="left:24px;top:50px;width:6px;height:3.6px;background:#a9a9a9"></div><div style="left:36px;top:50px;width:6px;height:3.6px;background:#a9a9a9"></div><div style="left:48px;top:50px;width:6px;height:3.6px;background:#a9a9a9"></div><div style="left:72px;top:50px;width:6px;height:3.6px;background:#a9a9a9"></div><div style="left:84px;top:50px;width:6px;height:3.6px;background:#a9a9a9"></div><span style="left:2px;top:2.17px;font-size:12.2px;color:#dcdcdc;transform:scaleX(0.9)">track1-7</span><div style="left:0;top:50.700000000000045px;width:7.5px;height:12.5px;background:#d2d2d2;border:1px solid #efefef;border-left:none"></div><div style="left:88.5px;top:50.700000000000045px;width:7.5px;height:12.5px;background:#d2d2d2;border:1px solid #efefef;border-right:none"></div><div style="left:0;top:0;width:1.4px;height:100%;background:#f6f6f6"></div><div style="left:94.6px;top:0;width:1.4px;height:100%;background:#f6f6f6"></div></div>
<div style="left:978px;top:695.5px;width:96px;height:63.200000000000045px;background:linear-gradient(#4e9c74 0,#4a9670 2.5%,#4a9670 31%,#4f8f6e 34%,#4f8f6e);overflow:hidden"><div style="left:24px;top:49.5px;width:6px;height:3.6px;background:#a9a9a9"></div><div style="left:36px;top:49.5px;width:6px;height:3.6px;background:#a9a9a9"></div><div style="left:48px;top:49.5px;width:6px;height:3.6px;background:#a9a9a9"></div><div style="left:72px;top:49.5px;width:6px;height:3.6px;background:#a9a9a9"></div><div style="left:84px;top:49.5px;width:6px;height:3.6px;background:#a9a9a9"></div><span style="left:2px;top:2.17px;font-size:12.2px;color:#dcdcdc;transform:scaleX(0.9)">track1-7</span><div style="left:0;top:50.700000000000045px;width:7.5px;height:12.5px;background:#d2d2d2;border:1px solid #efefef;border-left:none"></div><div style="left:88.5px;top:50.700000000000045px;width:7.5px;height:12.5px;background:#d2d2d2;border:1px solid #efefef;border-right:none"></div><div style="left:0;top:0;width:1.4px;height:100%;background:#f6f6f6"></div><div style="left:94.6px;top:0;width:1.4px;height:100%;background:#f6f6f6"></div></div>
<div style="left:1170px;top:695.5px;width:96px;height:63.200000000000045px;background:linear-gradient(#4e9c74 0,#4a9670 2.5%,#4a9670 31%,#4f8f6e 34%,#4f8f6e);overflow:hidden"><div style="left:24px;top:47px;width:6px;height:3.6px;background:#a9a9a9"></div><div style="left:36px;top:47px;width:6px;height:3.6px;background:#a9a9a9"></div><div style="left:48px;top:47px;width:6px;height:3.6px;background:#a9a9a9"></div><div style="left:72px;top:47px;width:6px;height:3.6px;background:#a9a9a9"></div><div style="left:84px;top:47px;width:6px;height:3.6px;background:#a9a9a9"></div><span style="left:2px;top:2.17px;font-size:12.2px;color:#dcdcdc;transform:scaleX(0.9)">track1-7</span><div style="left:0;top:50.700000000000045px;width:7.5px;height:12.5px;background:#d2d2d2;border:1px solid #efefef;border-left:none"></div><div style="left:88.5px;top:50.700000000000045px;width:7.5px;height:12.5px;background:#d2d2d2;border:1px solid #efefef;border-right:none"></div><div style="left:0;top:0;width:1.4px;height:100%;background:#f6f6f6"></div><div style="left:94.6px;top:0;width:1.4px;height:100%;background:#f6f6f6"></div></div>
<div style="left:1362px;top:695.5px;width:96px;height:63.200000000000045px;background:linear-gradient(#4e9c74 0,#4a9670 2.5%,#4a9670 31%,#4f8f6e 34%,#4f8f6e);overflow:hidden"><div style="left:24px;top:49.5px;width:6px;height:3.6px;background:#a9a9a9"></div><div style="left:36px;top:49.5px;width:6px;height:3.6px;background:#a9a9a9"></div><div style="left:48px;top:49.5px;width:6px;height:3.6px;background:#a9a9a9"></div><div style="left:72px;top:49.5px;width:6px;height:3.6px;background:#a9a9a9"></div><div style="left:84px;top:49.5px;width:6px;height:3.6px;background:#a9a9a9"></div><span style="left:2px;top:2.17px;font-size:12.2px;color:#dcdcdc;transform:scaleX(0.9)">track1-7</span><div style="left:0;top:50.700000000000045px;width:7.5px;height:12.5px;background:#d2d2d2;border:1px solid #efefef;border-left:none"></div><div style="left:88.5px;top:50.700000000000045px;width:7.5px;height:12.5px;background:#d2d2d2;border:1px solid #efefef;border-right:none"></div><div style="left:0;top:0;width:1.4px;height:100%;background:#f6f6f6"></div><div style="left:94.6px;top:0;width:1.4px;height:100%;background:#f6f6f6"></div></div>
<div style="left:1554px;top:695.5px;width:96px;height:63.200000000000045px;background:linear-gradient(#4e9c74 0,#4a9670 2.5%,#4a9670 31%,#4f8f6e 34%,#4f8f6e);overflow:hidden"><div style="left:24px;top:49.5px;width:6px;height:3.6px;background:#a9a9a9"></div><div style="left:36px;top:49.5px;width:6px;height:3.6px;background:#a9a9a9"></div><div style="left:48px;top:49.5px;width:6px;height:3.6px;background:#a9a9a9"></div><div style="left:72px;top:49.5px;width:6px;height:3.6px;background:#a9a9a9"></div><div style="left:84px;top:49.5px;width:6px;height:3.6px;background:#a9a9a9"></div><span style="left:2px;top:2.17px;font-size:12.2px;color:#dcdcdc;transform:scaleX(0.9)">track1-7</span><div style="left:0;top:50.700000000000045px;width:7.5px;height:12.5px;background:#d2d2d2;border:1px solid #efefef;border-left:none"></div><div style="left:88.5px;top:50.700000000000045px;width:7.5px;height:12.5px;background:#d2d2d2;border:1px solid #efefef;border-right:none"></div><div style="left:0;top:0;width:1.4px;height:100%;background:#f6f6f6"></div><div style="left:94.6px;top:0;width:1.4px;height:100%;background:#f6f6f6"></div></div>
<div style="left:1746px;top:695.5px;width:96px;height:63.200000000000045px;background:linear-gradient(#4e9c74 0,#4a9670 2.5%,#4a9670 31%,#4f8f6e 34%,#4f8f6e);overflow:hidden"><div style="left:24px;top:51px;width:6px;height:3.6px;background:#a9a9a9"></div><div style="left:36px;top:51px;width:6px;height:3.6px;background:#a9a9a9"></div><div style="left:48px;top:51px;width:6px;height:3.6px;background:#a9a9a9"></div><div style="left:72px;top:51px;width:6px;height:3.6px;background:#a9a9a9"></div><div style="left:84px;top:51px;width:6px;height:3.6px;background:#a9a9a9"></div><span style="left:2px;top:2.17px;font-size:12.2px;color:#dcdcdc;transform:scaleX(0.9)">track1-7</span><div style="left:0;top:50.700000000000045px;width:7.5px;height:12.5px;background:#d2d2d2;border:1px solid #efefef;border-left:none"></div><div style="left:88.5px;top:50.700000000000045px;width:7.5px;height:12.5px;background:#d2d2d2;border:1px solid #efefef;border-right:none"></div><div style="left:0;top:0;width:1.4px;height:100%;background:#f6f6f6"></div><div style="left:94.6px;top:0;width:1.4px;height:100%;background:#f6f6f6"></div></div>
<div style="left:186px;top:887.5px;width:312px;height:63.200000000000045px;background:linear-gradient(#7b4fa0 0,#754c99 2.5%,#754c99 30%,#724a92 34%,#724a92);overflow:hidden"><div style="left:-24px;top:49.7px;width:6px;height:3.1px;background:#a9a9a9"></div><div style="left:-12px;top:48.2px;width:6px;height:3.4px;background:#a9a9a9"></div><div style="left:-12px;top:53.9px;width:12px;height:1.2px;background:#a0a6a2"></div><div style="left:-12px;top:55.1px;width:12px;height:3.0px;background:#a9a9a9"></div><div style="left:0px;top:49.6px;width:6px;height:5.5px;background:#a9a9a9"></div><div style="left:12px;top:48.2px;width:6px;height:3.4px;background:#a9a9a9"></div><div style="left:24px;top:49.7px;width:6px;height:3.1px;background:#a9a9a9"></div><div style="left:24px;top:53.9px;width:12px;height:1.2px;background:#a0a6a2"></div><div style="left:24px;top:55.1px;width:12px;height:3.0px;background:#a9a9a9"></div><div style="left:36px;top:48.2px;width:6px;height:3.4px;background:#a9a9a9"></div><div style="left:48px;top:49.6px;width:6px;height:5.5px;background:#a9a9a9"></div><div style="left:60px;top:48.2px;width:6px;height:3.4px;background:#a9a9a9"></div><div style="left:72px;top:49.7px;width:6px;height:3.1px;background:#a9a9a9"></div><div style="left:84px;top:48.2px;width:6px;height:3.4px;background:#a9a9a9"></div><div style="left:84px;top:53.9px;width:12px;height:1.2px;background:#a0a6a2"></div><div style="left:84px;top:55.1px;width:12px;height:3.0px;background:#a9a9a9"></div><div style="left:96px;top:49.6px;width:6px;height:5.5px;background:#a9a9a9"></div><div style="left:108px;top:48.2px;width:6px;height:3.4px;background:#a9a9a9"></div><div style="left:120px;top:49.7px;width:6px;height:3.1px;background:#a9a9a9"></div><div style="left:120px;top:53.9px;width:12px;height:1.2px;background:#a0a6a2"></div><div style="left:120px;top:55.1px;width:12px;height:3.0px;background:#a9a9a9"></div><div style="left:132px;top:48.2px;width:6px;height:3.4px;background:#a9a9a9"></div><div style="left:144px;top:49.6px;width:6px;height:5.5px;background:#a9a9a9"></div><div style="left:156px;top:48.2px;width:6px;height:3.4px;background:#a9a9a9"></div><div style="left:168px;top:49.7px;width:6px;height:3.1px;background:#a9a9a9"></div><div style="left:180px;top:48.2px;width:6px;height:3.4px;background:#a9a9a9"></div><div style="left:180px;top:53.9px;width:12px;height:1.2px;background:#a0a6a2"></div><div style="left:180px;top:55.1px;width:12px;height:3.0px;background:#a9a9a9"></div><div style="left:192px;top:49.6px;width:6px;height:5.5px;background:#a9a9a9"></div><div style="left:204px;top:48.2px;width:6px;height:3.4px;background:#a9a9a9"></div><div style="left:216px;top:49.7px;width:6px;height:3.1px;background:#a9a9a9"></div><div style="left:216px;top:53.9px;width:12px;height:1.2px;background:#a0a6a2"></div><div style="left:216px;top:55.1px;width:12px;height:3.0px;background:#a9a9a9"></div><div style="left:228px;top:48.2px;width:6px;height:3.4px;background:#a9a9a9"></div><div style="left:240px;top:49.6px;width:6px;height:5.5px;background:#a9a9a9"></div><div style="left:252px;top:48.2px;width:6px;height:3.4px;background:#a9a9a9"></div><div style="left:264px;top:49.7px;width:6px;height:3.1px;background:#a9a9a9"></div><div style="left:276px;top:53.9px;width:18px;height:1.2px;background:#a09aa6"></div><div style="left:276px;top:55.1px;width:18px;height:3.0px;background:#a9a9a9"></div><div style="left:300px;top:53.9px;width:12px;height:1.2px;background:#a09aa6"></div><div style="left:300px;top:55.1px;width:12px;height:3.0px;background:#a9a9a9"></div><div style="left:304.5px;top:50.700000000000045px;width:7.5px;height:12.5px;background:#d2d2d2;border:1px solid #efefef;border-right:none"></div><div style="left:310.6px;top:0;width:1.4px;height:100%;background:#f6f6f6"></div></div>
<div style="left:498px;top:887.5px;width:768px;height:63.200000000000045px;background:linear-gradient(#7b4fa0 0,#754c99 2.5%,#754c99 30%,#724a92 34%,#724a92);overflow:hidden"><div style="left:0px;top:45.6px;width:198px;height:3.4px;background:#a9a9a9"></div><div style="left:120px;top:49.6px;width:6px;height:5.5px;background:#a9a9a9"></div><div style="left:132px;top:48.2px;width:6px;height:3.4px;background:#a9a9a9"></div><div style="left:144px;top:49.7px;width:6px;height:3.1px;background:#a9a9a9"></div><div style="left:156px;top:48.2px;width:6px;height:3.4px;background:#a9a9a9"></div><div style="left:156px;top:53.9px;width:12px;height:1.2px;background:#a0a6a2"></div><div style="left:156px;top:55.1px;width:12px;height:3.0px;background:#a9a9a9"></div><div style="left:168px;top:49.6px;width:6px;height:5.5px;background:#a9a9a9"></div><div style="left:180px;top:48.2px;width:6px;height:3.4px;background:#a9a9a9"></div><div style="left:192px;top:49.7px;width:6px;height:3.1px;background:#a9a9a9"></div><div style="left:192px;top:53.9px;width:12px;height:1.2px;background:#a0a6a2"></div><div style="left:192px;top:55.1px;width:12px;height:3.0px;background:#a9a9a9"></div><div style="left:204px;top:48.2px;width:6px;height:3.4px;background:#a9a9a9"></div><div style="left:216px;top:49.6px;width:6px;height:5.5px;background:#a9a9a9"></div><div style="left:228px;top:48.2px;width:6px;height:3.4px;background:#a9a9a9"></div><div style="left:240px;top:49.7px;width:6px;height:3.1px;background:#a9a9a9"></div><div style="left:252px;top:48.2px;width:6px;height:3.4px;background:#a9a9a9"></div><div style="left:252px;top:53.9px;width:12px;height:1.2px;background:#a0a6a2"></div><div style="left:252px;top:55.1px;width:12px;height:3.0px;background:#a9a9a9"></div><div style="left:264px;top:49.6px;width:6px;height:5.5px;background:#a9a9a9"></div><div style="left:276px;top:48.2px;width:6px;height:3.4px;background:#a9a9a9"></div><div style="left:288px;top:49.7px;width:6px;height:3.1px;background:#a9a9a9"></div><div style="left:288px;top:53.9px;width:12px;height:1.2px;background:#a0a6a2"></div><div style="left:288px;top:55.1px;width:12px;height:3.0px;background:#a9a9a9"></div><div style="left:300px;top:48.2px;width:6px;height:3.4px;background:#a9a9a9"></div><div style="left:312px;top:49.6px;width:6px;height:5.5px;background:#a9a9a9"></div><div style="left:324px;top:48.2px;width:6px;height:3.4px;background:#a9a9a9"></div><div style="left:336px;top:49.7px;width:6px;height:3.1px;background:#a9a9a9"></div><div style="left:348px;top:48.2px;width:6px;height:3.4px;background:#a9a9a9"></div><div style="left:348px;top:53.9px;width:12px;height:1.2px;background:#a0a6a2"></div><div style="left:348px;top:55.1px;width:12px;height:3.0px;background:#a9a9a9"></div><div style="left:360px;top:49.6px;width:6px;height:5.5px;background:#a9a9a9"></div><div style="left:372px;top:48.2px;width:6px;height:3.4px;background:#a9a9a9"></div><div style="left:384px;top:49.7px;width:6px;height:3.1px;background:#a9a9a9"></div><div style="left:384px;top:53.9px;width:12px;height:1.2px;background:#a0a6a2"></div><div style="left:384px;top:55.1px;width:12px;height:3.0px;background:#a9a9a9"></div><div style="left:396px;top:48.2px;width:6px;height:3.4px;background:#a9a9a9"></div><div style="left:408px;top:49.6px;width:6px;height:5.5px;background:#a9a9a9"></div><div style="left:420px;top:48.2px;width:6px;height:3.4px;background:#a9a9a9"></div><div style="left:432px;top:49.7px;width:6px;height:3.1px;background:#a9a9a9"></div><div style="left:444px;top:48.2px;width:6px;height:3.4px;background:#a9a9a9"></div><div style="left:444px;top:53.9px;width:12px;height:1.2px;background:#a0a6a2"></div><div style="left:444px;top:55.1px;width:12px;height:3.0px;background:#a9a9a9"></div><div style="left:456px;top:49.6px;width:6px;height:5.5px;background:#a9a9a9"></div><div style="left:468px;top:48.2px;width:6px;height:3.4px;background:#a9a9a9"></div><div style="left:480px;top:49.7px;width:6px;height:3.1px;background:#a9a9a9"></div><div style="left:480px;top:53.9px;width:12px;height:1.2px;background:#a0a6a2"></div><div style="left:480px;top:55.1px;width:12px;height:3.0px;background:#a9a9a9"></div><div style="left:492px;top:48.2px;width:6px;height:3.4px;background:#a9a9a9"></div><div style="left:504px;top:49.6px;width:6px;height:5.5px;background:#a9a9a9"></div><div style="left:516px;top:48.2px;width:6px;height:3.4px;background:#a9a9a9"></div><div style="left:528px;top:49.7px;width:6px;height:3.1px;background:#a9a9a9"></div><div style="left:540px;top:48.2px;width:6px;height:3.4px;background:#a9a9a9"></div><div style="left:540px;top:53.9px;width:12px;height:1.2px;background:#a0a6a2"></div><div style="left:540px;top:55.1px;width:12px;height:3.0px;background:#a9a9a9"></div><div style="left:552px;top:49.6px;width:6px;height:5.5px;background:#a9a9a9"></div><div style="left:564px;top:48.2px;width:6px;height:3.4px;background:#a9a9a9"></div><div style="left:576px;top:49.7px;width:6px;height:3.1px;background:#a9a9a9"></div><div style="left:576px;top:53.9px;width:12px;height:1.2px;background:#a0a6a2"></div><div style="left:576px;top:55.1px;width:12px;height:3.0px;background:#a9a9a9"></div><div style="left:588px;top:48.2px;width:6px;height:3.4px;background:#a9a9a9"></div><div style="left:600px;top:49.6px;width:6px;height:5.5px;background:#a9a9a9"></div><div style="left:612px;top:48.2px;width:6px;height:3.4px;background:#a9a9a9"></div><div style="left:624px;top:49.7px;width:6px;height:3.1px;background:#a9a9a9"></div><div style="left:636px;top:48.2px;width:6px;height:3.4px;background:#a9a9a9"></div><div style="left:636px;top:53.9px;width:12px;height:1.2px;background:#a0a6a2"></div><div style="left:636px;top:55.1px;width:12px;height:3.0px;background:#a9a9a9"></div><div style="left:648px;top:49.6px;width:6px;height:5.5px;background:#a9a9a9"></div><div style="left:660px;top:48.2px;width:6px;height:3.4px;background:#a9a9a9"></div><div style="left:672px;top:49.7px;width:6px;height:3.1px;background:#a9a9a9"></div><div style="left:672px;top:53.9px;width:12px;height:1.2px;background:#a0a6a2"></div><div style="left:672px;top:55.1px;width:12px;height:3.0px;background:#a9a9a9"></div><div style="left:684px;top:48.2px;width:6px;height:3.4px;background:#a9a9a9"></div><div style="left:696px;top:49.6px;width:6px;height:5.5px;background:#a9a9a9"></div><div style="left:708px;top:48.2px;width:6px;height:3.4px;background:#a9a9a9"></div><div style="left:720px;top:49.7px;width:6px;height:3.1px;background:#a9a9a9"></div><div style="left:732px;top:48.2px;width:6px;height:3.4px;background:#a9a9a9"></div><div style="left:732px;top:53.9px;width:12px;height:1.2px;background:#a0a6a2"></div><div style="left:732px;top:55.1px;width:12px;height:3.0px;background:#a9a9a9"></div><div style="left:744px;top:49.6px;width:6px;height:5.5px;background:#a9a9a9"></div><div style="left:756px;top:48.2px;width:6px;height:3.4px;background:#a9a9a9"></div><span style="left:2px;top:2.17px;font-size:12.2px;color:#dcdcdc;transform:scaleX(0.9)">track3-16</span><div style="left:0;top:50.700000000000045px;width:7.5px;height:12.5px;background:#d2d2d2;border:1px solid #efefef;border-left:none"></div><div style="left:760.5px;top:50.700000000000045px;width:7.5px;height:12.5px;background:#d2d2d2;border:1px solid #efefef;border-right:none"></div><div style="left:0;top:0;width:1.4px;height:100%;background:#f6f6f6"></div><div style="left:766.6px;top:0;width:1.4px;height:100%;background:#f6f6f6"></div></div>
<div style="left:1266px;top:887.5px;width:646px;height:63.200000000000045px;background:linear-gradient(#7b4fa0 0,#754c99 2.5%,#754c99 30%,#724a92 34%,#724a92);overflow:hidden"><div style="left:12px;top:48.2px;width:6px;height:3.4px;background:#a9a9a9"></div><div style="left:24px;top:49.7px;width:6px;height:3.1px;background:#a9a9a9"></div><div style="left:36px;top:48.2px;width:6px;height:3.4px;background:#a9a9a9"></div><div style="left:48px;top:49.7px;width:6px;height:3.1px;background:#a9a9a9"></div><div style="left:60px;top:48.2px;width:6px;height:3.4px;background:#a9a9a9"></div><div style="left:72px;top:49.7px;width:6px;height:3.1px;background:#a9a9a9"></div><div style="left:84px;top:48.2px;width:6px;height:3.4px;background:#a9a9a9"></div><div style="left:96px;top:49.7px;width:6px;height:3.1px;background:#a9a9a9"></div><div style="left:96px;top:53.9px;width:12px;height:1.2px;background:#a0a6a2"></div><div style="left:96px;top:55.1px;width:12px;height:3.0px;background:#a9a9a9"></div><div style="left:108px;top:48.2px;width:6px;height:3.4px;background:#a9a9a9"></div><div style="left:120px;top:49.6px;width:6px;height:5.5px;background:#a9a9a9"></div><div style="left:132px;top:48.2px;width:6px;height:3.4px;background:#a9a9a9"></div><div style="left:144px;top:49.7px;width:6px;height:3.1px;background:#a9a9a9"></div><div style="left:156px;top:48.2px;width:6px;height:3.4px;background:#a9a9a9"></div><div style="left:156px;top:53.9px;width:12px;height:1.2px;background:#a0a6a2"></div><div style="left:156px;top:55.1px;width:12px;height:3.0px;background:#a9a9a9"></div><div style="left:168px;top:49.6px;width:6px;height:5.5px;background:#a9a9a9"></div><div style="left:180px;top:48.2px;width:6px;height:3.4px;background:#a9a9a9"></div><div style="left:192px;top:49.7px;width:6px;height:3.1px;background:#a9a9a9"></div><div style="left:192px;top:53.9px;width:12px;height:1.2px;background:#a0a6a2"></div><div style="left:192px;top:55.1px;width:12px;height:3.0px;background:#a9a9a9"></div><div style="left:204px;top:48.2px;width:6px;height:3.4px;background:#a9a9a9"></div><div style="left:216px;top:49.6px;width:6px;height:5.5px;background:#a9a9a9"></div><div style="left:228px;top:48.2px;width:6px;height:3.4px;background:#a9a9a9"></div><div style="left:240px;top:49.7px;width:6px;height:3.1px;background:#a9a9a9"></div><div style="left:252px;top:48.2px;width:6px;height:3.4px;background:#a9a9a9"></div><div style="left:252px;top:53.9px;width:12px;height:1.2px;background:#a0a6a2"></div><div style="left:252px;top:55.1px;width:12px;height:3.0px;background:#a9a9a9"></div><div style="left:264px;top:49.6px;width:6px;height:5.5px;background:#a9a9a9"></div><div style="left:276px;top:48.2px;width:6px;height:3.4px;background:#a9a9a9"></div><div style="left:288px;top:49.7px;width:6px;height:3.1px;background:#a9a9a9"></div><div style="left:288px;top:53.9px;width:12px;height:1.2px;background:#a0a6a2"></div><div style="left:288px;top:55.1px;width:12px;height:3.0px;background:#a9a9a9"></div><div style="left:300px;top:48.2px;width:6px;height:3.4px;background:#a9a9a9"></div><div style="left:312px;top:49.6px;width:6px;height:5.5px;background:#a9a9a9"></div><div style="left:324px;top:48.2px;width:6px;height:3.4px;background:#a9a9a9"></div><div style="left:336px;top:49.7px;width:6px;height:3.1px;background:#a9a9a9"></div><div style="left:348px;top:48.2px;width:6px;height:3.4px;background:#a9a9a9"></div><div style="left:348px;top:53.9px;width:12px;height:1.2px;background:#a0a6a2"></div><div style="left:348px;top:55.1px;width:12px;height:3.0px;background:#a9a9a9"></div><div style="left:360px;top:49.6px;width:6px;height:5.5px;background:#a9a9a9"></div><div style="left:372px;top:48.2px;width:6px;height:3.4px;background:#a9a9a9"></div><div style="left:384px;top:49.7px;width:6px;height:3.1px;background:#a9a9a9"></div><div style="left:384px;top:53.9px;width:12px;height:1.2px;background:#a0a6a2"></div><div style="left:384px;top:55.1px;width:12px;height:3.0px;background:#a9a9a9"></div><div style="left:396px;top:48.2px;width:6px;height:3.4px;background:#a9a9a9"></div><div style="left:408px;top:49.6px;width:6px;height:5.5px;background:#a9a9a9"></div><div style="left:420px;top:48.2px;width:6px;height:3.4px;background:#a9a9a9"></div><div style="left:432px;top:49.7px;width:6px;height:3.1px;background:#a9a9a9"></div><div style="left:444px;top:48.2px;width:6px;height:3.4px;background:#a9a9a9"></div><div style="left:444px;top:53.9px;width:12px;height:1.2px;background:#a0a6a2"></div><div style="left:444px;top:55.1px;width:12px;height:3.0px;background:#a9a9a9"></div><div style="left:456px;top:49.6px;width:6px;height:5.5px;background:#a9a9a9"></div><div style="left:468px;top:48.2px;width:6px;height:3.4px;background:#a9a9a9"></div><div style="left:480px;top:49.7px;width:6px;height:3.1px;background:#a9a9a9"></div><div style="left:480px;top:53.9px;width:12px;height:1.2px;background:#a0a6a2"></div><div style="left:480px;top:55.1px;width:12px;height:3.0px;background:#a9a9a9"></div><div style="left:492px;top:48.2px;width:6px;height:3.4px;background:#a9a9a9"></div><div style="left:504px;top:49.6px;width:6px;height:5.5px;background:#a9a9a9"></div><div style="left:516px;top:48.2px;width:6px;height:3.4px;background:#a9a9a9"></div><div style="left:528px;top:49.7px;width:6px;height:3.1px;background:#a9a9a9"></div><div style="left:540px;top:48.2px;width:6px;height:3.4px;background:#a9a9a9"></div><div style="left:540px;top:53.9px;width:12px;height:1.2px;background:#a0a6a2"></div><div style="left:540px;top:55.1px;width:12px;height:3.0px;background:#a9a9a9"></div><div style="left:552px;top:49.6px;width:6px;height:5.5px;background:#a9a9a9"></div><div style="left:564px;top:48.2px;width:6px;height:3.4px;background:#a9a9a9"></div><div style="left:576px;top:49.7px;width:6px;height:3.1px;background:#a9a9a9"></div><div style="left:576px;top:53.9px;width:12px;height:1.2px;background:#a0a6a2"></div><div style="left:576px;top:55.1px;width:12px;height:3.0px;background:#a9a9a9"></div><div style="left:588px;top:48.2px;width:6px;height:3.4px;background:#a9a9a9"></div><div style="left:600px;top:49.6px;width:6px;height:5.5px;background:#a9a9a9"></div><div style="left:612px;top:48.2px;width:6px;height:3.4px;background:#a9a9a9"></div><div style="left:624px;top:49.7px;width:6px;height:3.1px;background:#a9a9a9"></div><div style="left:636px;top:48.2px;width:6px;height:3.4px;background:#a9a9a9"></div><div style="left:636px;top:53.9px;width:12px;height:1.2px;background:#a0a6a2"></div><div style="left:636px;top:55.1px;width:12px;height:3.0px;background:#a9a9a9"></div><span style="left:2px;top:2.17px;font-size:12.2px;color:#dcdcdc;transform:scaleX(0.9)">track3-19</span><div style="left:0;top:50.700000000000045px;width:7.5px;height:12.5px;background:#d2d2d2;border:1px solid #efefef;border-left:none"></div><div style="left:0;top:0;width:1.4px;height:100%;background:#f6f6f6"></div></div>
<div style="left:186px;top:951.5px;width:312px;height:63.200000000000045px;background:linear-gradient(#9e4e9a 0,#984b95 2.5%,#984b95 30%,#924b8b 34%,#934a8c);overflow:hidden"><div style="left:0px;top:47.0px;width:30px;height:3.1px;background:#a9a9a9"></div><div style="left:0px;top:51.2px;width:30px;height:3.1px;background:#a9a9a9"></div><div style="left:0px;top:55.4px;width:30px;height:3.1px;background:#a9a9a9"></div><div style="left:48px;top:42.0px;width:54px;height:3.1px;background:#a9a9a9"></div><div style="left:48px;top:46.2px;width:54px;height:3.1px;background:#a9a9a9"></div><div style="left:48px;top:50.4px;width:54px;height:3.1px;background:#a9a9a9"></div><div style="left:120px;top:45.0px;width:102px;height:3.1px;background:#a9a9a9"></div><div style="left:120px;top:49.2px;width:102px;height:3.1px;background:#a9a9a9"></div><div style="left:120px;top:53.4px;width:102px;height:3.1px;background:#a9a9a9"></div><div style="left:240px;top:40.0px;width:54px;height:3.1px;background:#a9a9a9"></div><div style="left:240px;top:44.2px;width:54px;height:3.1px;background:#a9a9a9"></div><div style="left:240px;top:48.4px;width:54px;height:3.1px;background:#a9a9a9"></div><div style="left:304.5px;top:50.700000000000045px;width:7.5px;height:12.5px;background:#d2d2d2;border:1px solid #efefef;border-right:none"></div><div style="left:310.6px;top:0;width:1.4px;height:100%;background:#f6f6f6"></div></div>
<div style="left:186px;top:1015.5px;width:312px;height:31.5px;background:linear-gradient(#5a9c4d 0,#57984b 3%,#56944a 50%,#57954a);overflow:hidden"><div style="left:310.6px;top:0;width:1.4px;height:100%;background:#f6f6f6"></div></div>
<div style="left:498px;top:1015.5px;width:768px;height:31.5px;background:linear-gradient(#5a9c4d 0,#57984b 3%,#56944a 50%,#57954a);overflow:hidden"><span style="left:2px;top:2.17px;font-size:12.2px;color:#dcdcdc;transform:scaleX(0.9)">track1-8</span><div style="left:0;top:0;width:1.4px;height:100%;background:#f6f6f6"></div><div style="left:766.6px;top:0;width:1.4px;height:100%;background:#f6f6f6"></div></div>
<div style="left:1266px;top:1015.5px;width:646px;height:31.5px;background:linear-gradient(#5a9c4d 0,#57984b 3%,#56944a 50%,#57954a);overflow:hidden"><span style="left:2px;top:2.17px;font-size:12.2px;color:#dcdcdc;transform:scaleX(0.9)">track1-8</span><div style="left:0;top:0;width:1.4px;height:100%;background:#f6f6f6"></div></div>
<div style="left:473px;top:246px;width:2px;height:801px;background:#dedede"></div>
<div style="left:1912.5px;top:192px;width:15.5px;height:855px;background:linear-gradient(90deg,#464646,#222 50%,#464646)"></div>
<div style="left:1913px;top:193px;width:14.5px;height:348.5px;background:#5d5d5d;border:1px solid #4a4a4a"></div>
<div style="left:1913px;top:193px;width:14.5px;height:16px;background:linear-gradient(#505050,#7a7a7a 50%,#505050)"></div>
<div style="left:1929.5px;top:192px;width:3.5px;height:855px;background:#4a4a4a"></div>
<div style="left:1913px;top:1029px;width:14.5px;height:17.5px;background:linear-gradient(#505050,#7a7a7a 50%,#505050)"></div></body></html>
